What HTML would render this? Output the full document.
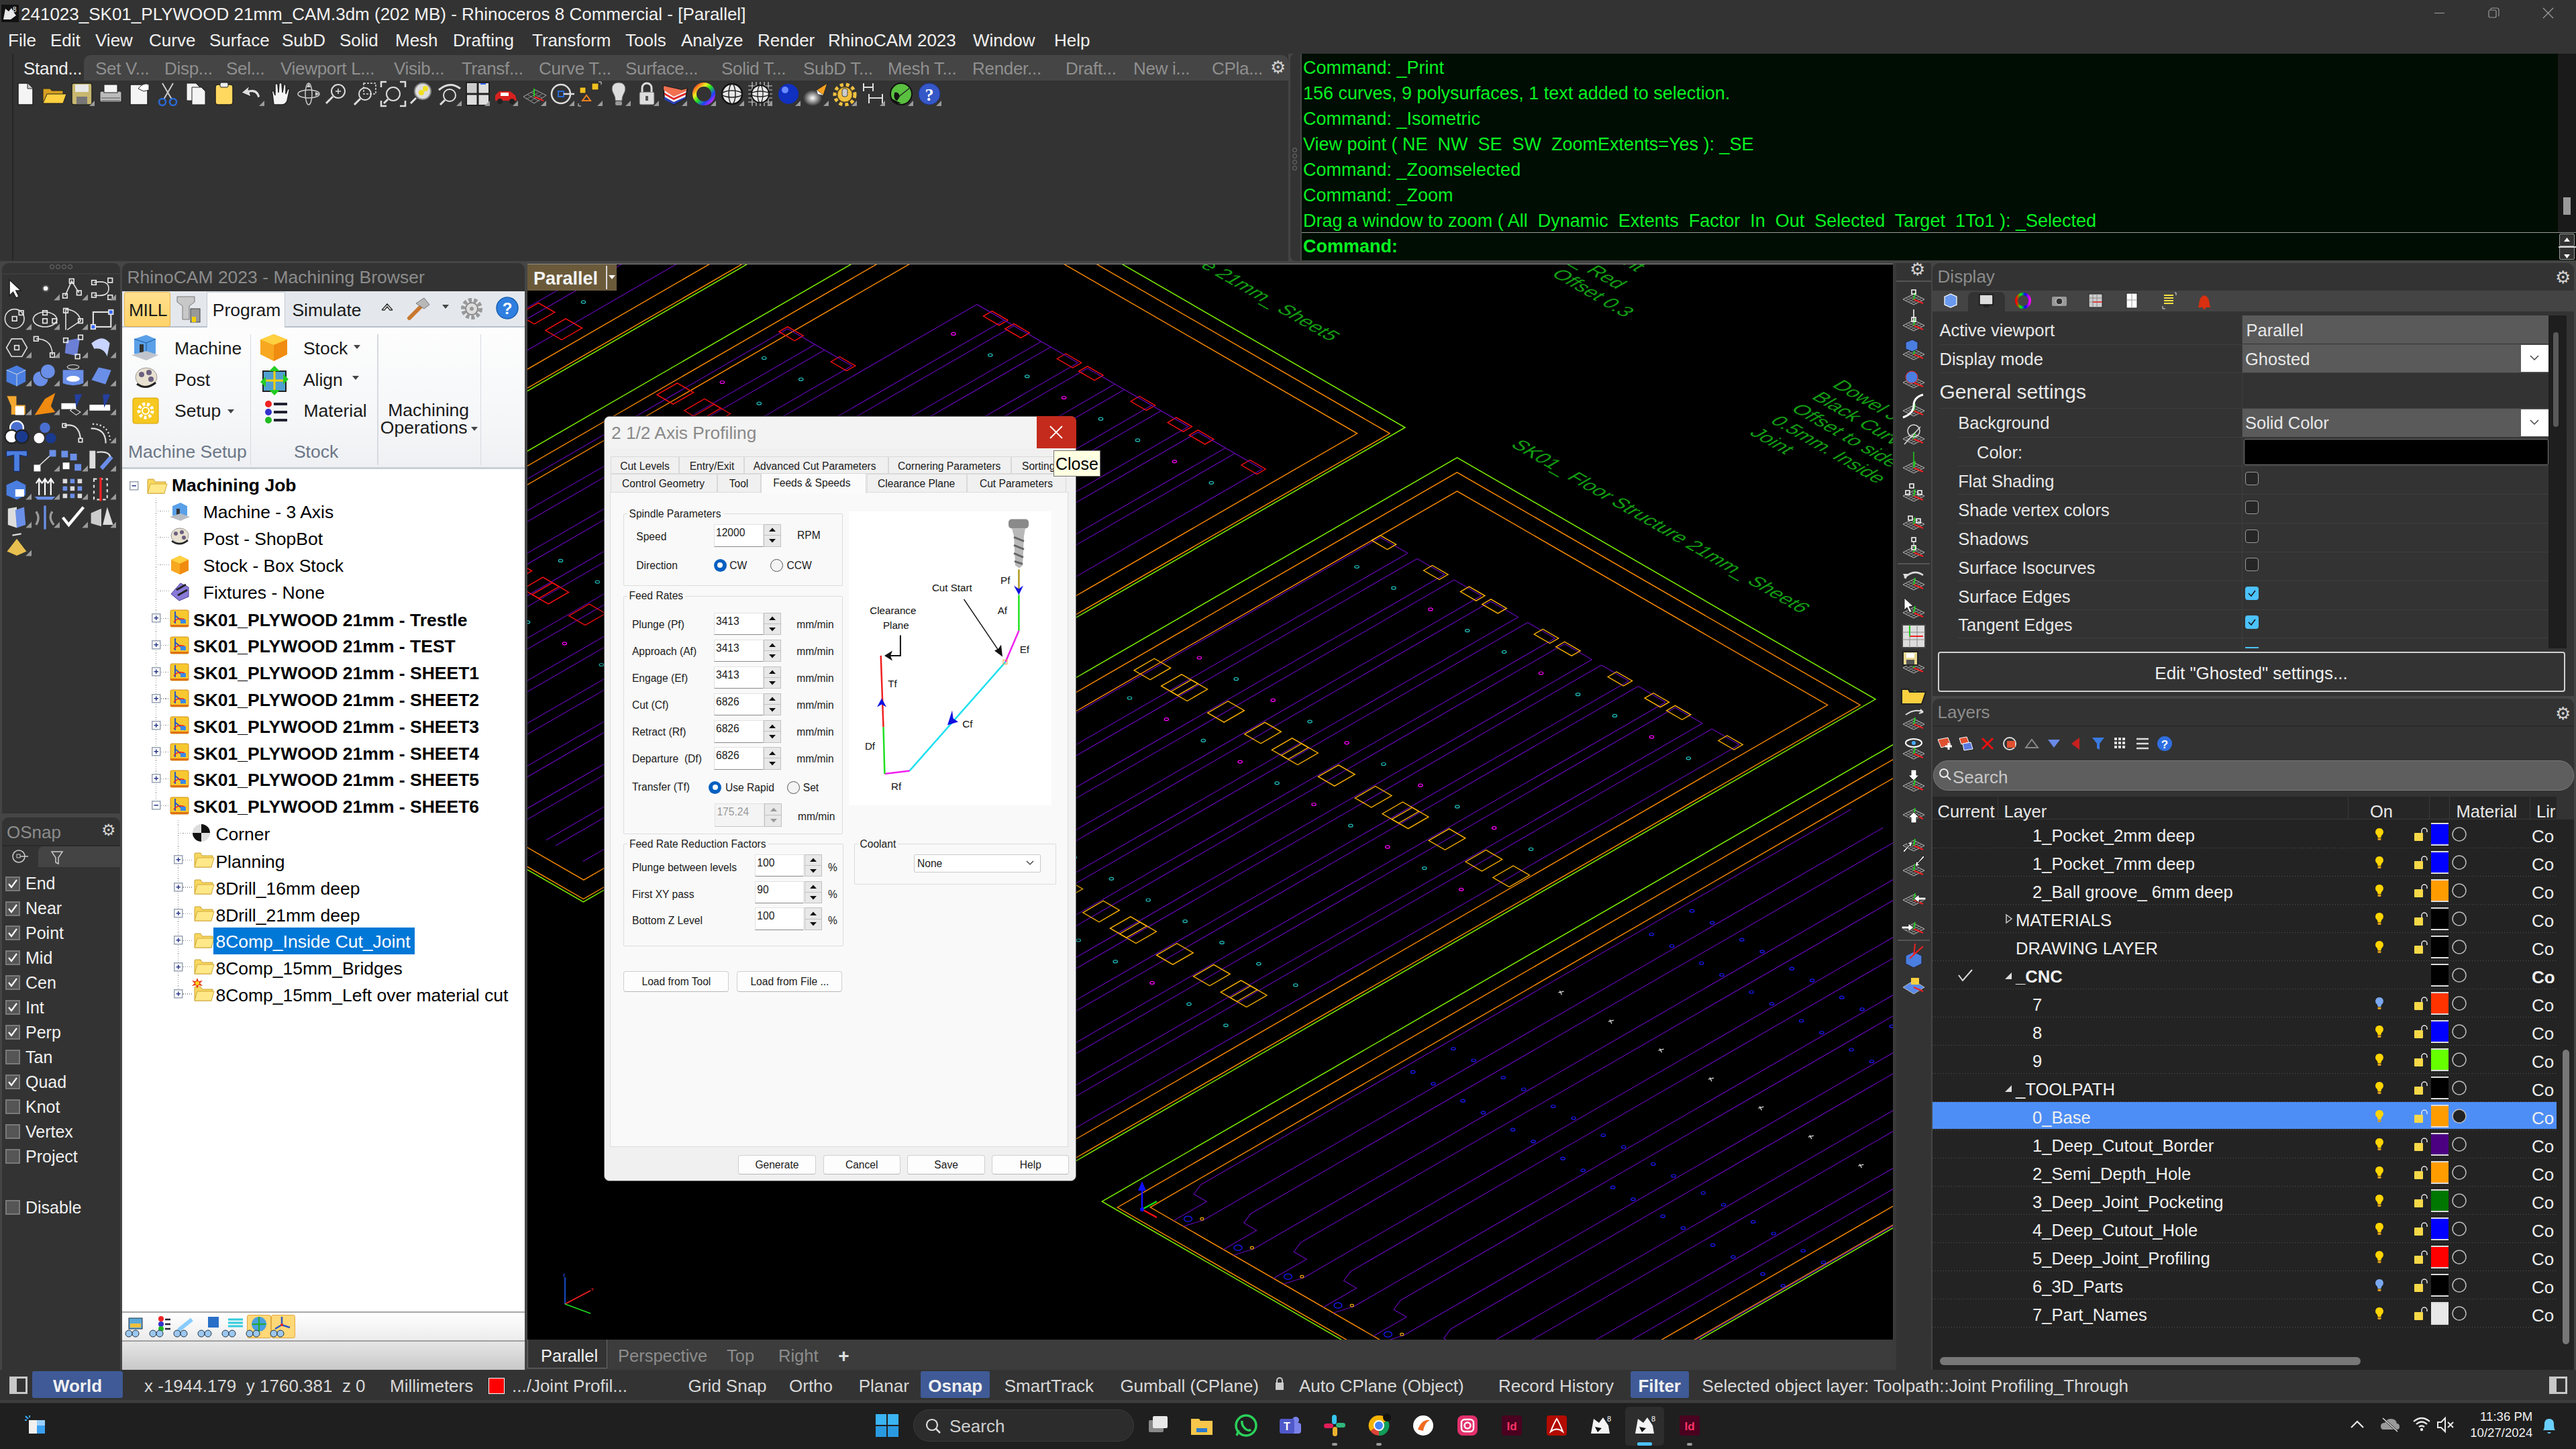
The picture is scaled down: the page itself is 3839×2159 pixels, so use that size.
<!DOCTYPE html><html><head><meta charset="utf-8"><style>
html,body{margin:0;padding:0;width:3839px;height:2159px;overflow:hidden;background:#454545;font-family:"Liberation Sans",sans-serif}
body>div,body>svg{position:absolute;white-space:pre;box-sizing:border-box}
#dlg div,#dlg svg{position:absolute;white-space:pre;box-sizing:border-box}
.grp div,.grp svg{position:absolute;white-space:pre;box-sizing:border-box}
</style></head><body>
<div style="left:0.0px;top:0.0px;width:3839.0px;height:80.0px;background:#333333;"></div>
<svg style="position:absolute;left:2.0px;top:7.0px;" width="26" height="26" viewBox="0 0 26 26"><rect x="0" y="0" width="26" height="26" fill="#111"/><path d="M3 22 L6 6 L11 10 L15 5 L19 12 L22 16 L14 22 Z" fill="#e8e8e8"/><text x="17" y="11" font-size="10" fill="#fff" font-family="Liberation Sans">8</text></svg>
<div style="left:31.0px;top:7.9px;font:normal 26px/1 'Liberation Sans',sans-serif;color:#f2f2f2;">241023_SK01_PLYWOOD 21mm_CAM.3dm (202 MB) - Rhinoceros 8 Commercial - [Parallel]</div>
<div style="left:3628.0px;top:19.0px;width:15.0px;height:1.2px;background:#a0a0a0;"></div>
<svg style="position:absolute;left:3707.0px;top:10.0px;" width="20" height="20" viewBox="0 0 20 20"><rect x="2" y="5" width="11" height="11" rx="2" fill="none" stroke="#9a9a9a" stroke-width="1.2"/><path d="M5 5 L5 4 Q5 2 7 2 L14 2 Q17 2 17 5 L17 12 Q17 14 16 14" fill="none" stroke="#9a9a9a" stroke-width="1.2"/></svg>
<svg style="position:absolute;left:3788.0px;top:10.0px;" width="20" height="20" viewBox="0 0 20 20"><path d="M2 2 L17 17 M17 2 L2 17" stroke="#a0a0a0" stroke-width="1.2"/></svg>
<div style="left:12.0px;top:47.4px;font:normal 26px/1 'Liberation Sans',sans-serif;color:#f0f0f0;">File</div>
<div style="left:75.0px;top:47.4px;font:normal 26px/1 'Liberation Sans',sans-serif;color:#f0f0f0;">Edit</div>
<div style="left:142.0px;top:47.4px;font:normal 26px/1 'Liberation Sans',sans-serif;color:#f0f0f0;">View</div>
<div style="left:222.0px;top:47.4px;font:normal 26px/1 'Liberation Sans',sans-serif;color:#f0f0f0;">Curve</div>
<div style="left:312.0px;top:47.4px;font:normal 26px/1 'Liberation Sans',sans-serif;color:#f0f0f0;">Surface</div>
<div style="left:420.0px;top:47.4px;font:normal 26px/1 'Liberation Sans',sans-serif;color:#f0f0f0;">SubD</div>
<div style="left:506.0px;top:47.4px;font:normal 26px/1 'Liberation Sans',sans-serif;color:#f0f0f0;">Solid</div>
<div style="left:589.0px;top:47.4px;font:normal 26px/1 'Liberation Sans',sans-serif;color:#f0f0f0;">Mesh</div>
<div style="left:675.0px;top:47.4px;font:normal 26px/1 'Liberation Sans',sans-serif;color:#f0f0f0;">Drafting</div>
<div style="left:793.0px;top:47.4px;font:normal 26px/1 'Liberation Sans',sans-serif;color:#f0f0f0;">Transform</div>
<div style="left:932.0px;top:47.4px;font:normal 26px/1 'Liberation Sans',sans-serif;color:#f0f0f0;">Tools</div>
<div style="left:1015.0px;top:47.4px;font:normal 26px/1 'Liberation Sans',sans-serif;color:#f0f0f0;">Analyze</div>
<div style="left:1129.0px;top:47.4px;font:normal 26px/1 'Liberation Sans',sans-serif;color:#f0f0f0;">Render</div>
<div style="left:1234.0px;top:47.4px;font:normal 26px/1 'Liberation Sans',sans-serif;color:#f0f0f0;">RhinoCAM 2023</div>
<div style="left:1450.0px;top:47.4px;font:normal 26px/1 'Liberation Sans',sans-serif;color:#f0f0f0;">Window</div>
<div style="left:1571.0px;top:47.4px;font:normal 26px/1 'Liberation Sans',sans-serif;color:#f0f0f0;">Help</div>
<div style="left:0.0px;top:80.0px;width:1920.0px;height:308.6px;background:#333333;"></div>
<div style="left:125.0px;top:82.0px;width:1795.0px;height:38.0px;background:#454545;border-radius:10px 10px 0 0"></div>
<div style="left:3.0px;top:80.0px;width:122.0px;height:40.0px;background:#333333;border-radius:10px 10px 0 0"></div>
<div style="left:18.0px;top:80.0px;width:1.5px;height:308.0px;background:#262626;"></div>
<div style="left:35.0px;top:89.4px;font:normal 26px/1 'Liberation Sans',sans-serif;color:#f0f0f0;letter-spacing:-0.3px">Stand...</div>
<div style="left:142.0px;top:89.4px;font:normal 26px/1 'Liberation Sans',sans-serif;color:#8f8f8f;letter-spacing:-0.3px">Set V...</div>
<div style="left:245.0px;top:89.4px;font:normal 26px/1 'Liberation Sans',sans-serif;color:#8f8f8f;letter-spacing:-0.3px">Disp...</div>
<div style="left:337.0px;top:89.4px;font:normal 26px/1 'Liberation Sans',sans-serif;color:#8f8f8f;letter-spacing:-0.3px">Sel...</div>
<div style="left:418.0px;top:89.4px;font:normal 26px/1 'Liberation Sans',sans-serif;color:#8f8f8f;letter-spacing:-0.3px">Viewport L...</div>
<div style="left:587.0px;top:89.4px;font:normal 26px/1 'Liberation Sans',sans-serif;color:#8f8f8f;letter-spacing:-0.3px">Visib...</div>
<div style="left:688.0px;top:89.4px;font:normal 26px/1 'Liberation Sans',sans-serif;color:#8f8f8f;letter-spacing:-0.3px">Transf...</div>
<div style="left:803.0px;top:89.4px;font:normal 26px/1 'Liberation Sans',sans-serif;color:#8f8f8f;letter-spacing:-0.3px">Curve T...</div>
<div style="left:932.0px;top:89.4px;font:normal 26px/1 'Liberation Sans',sans-serif;color:#8f8f8f;letter-spacing:-0.3px">Surface...</div>
<div style="left:1075.0px;top:89.4px;font:normal 26px/1 'Liberation Sans',sans-serif;color:#8f8f8f;letter-spacing:-0.3px">Solid T...</div>
<div style="left:1197.0px;top:89.4px;font:normal 26px/1 'Liberation Sans',sans-serif;color:#8f8f8f;letter-spacing:-0.3px">SubD T...</div>
<div style="left:1323.0px;top:89.4px;font:normal 26px/1 'Liberation Sans',sans-serif;color:#8f8f8f;letter-spacing:-0.3px">Mesh T...</div>
<div style="left:1449.0px;top:89.4px;font:normal 26px/1 'Liberation Sans',sans-serif;color:#8f8f8f;letter-spacing:-0.3px">Render...</div>
<div style="left:1588.0px;top:89.4px;font:normal 26px/1 'Liberation Sans',sans-serif;color:#8f8f8f;letter-spacing:-0.3px">Draft...</div>
<div style="left:1689.0px;top:89.4px;font:normal 26px/1 'Liberation Sans',sans-serif;color:#8f8f8f;letter-spacing:-0.3px">New i...</div>
<div style="left:1806.0px;top:89.4px;font:normal 26px/1 'Liberation Sans',sans-serif;color:#8f8f8f;letter-spacing:-0.3px">CPla...</div>
<div style="left:1893px;top:87px;font:26px/1 'Liberation Sans';color:#cfcfcf">&#9881;</div>
<div style="left:1923.0px;top:80.0px;width:14.8px;height:308.6px;background:#333333;border-radius:8px 0 0 8px"></div>
<div style="left:1926px;top:220px;width:7px;height:7px;border:1.5px solid #777;border-radius:50%"></div>
<div style="left:1926px;top:229px;width:7px;height:7px;border:1.5px solid #777;border-radius:50%"></div>
<div style="left:1926px;top:238px;width:7px;height:7px;border:1.5px solid #777;border-radius:50%"></div>
<div style="left:1926px;top:247px;width:7px;height:7px;border:1.5px solid #777;border-radius:50%"></div>
<div style="left:1940.0px;top:80.0px;width:1899.0px;height:308.0px;background:#000d02;"></div>
<div style="left:1942.0px;top:87.5px;font:normal 27px/1 'Liberation Sans',sans-serif;color:#08f222;">Command: _Print</div>
<div style="left:1942.0px;top:125.5px;font:normal 27px/1 'Liberation Sans',sans-serif;color:#08f222;">156 curves, 9 polysurfaces, 1 text added to selection.</div>
<div style="left:1942.0px;top:163.6px;font:normal 27px/1 'Liberation Sans',sans-serif;color:#08f222;">Command: _Isometric</div>
<div style="left:1942.0px;top:201.6px;font:normal 27px/1 'Liberation Sans',sans-serif;color:#08f222;">View point ( NE  NW  SE  SW  ZoomExtents=Yes ): _SE</div>
<div style="left:1942.0px;top:239.6px;font:normal 27px/1 'Liberation Sans',sans-serif;color:#08f222;">Command: _Zoomselected</div>
<div style="left:1942.0px;top:277.6px;font:normal 27px/1 'Liberation Sans',sans-serif;color:#08f222;">Command: _Zoom</div>
<div style="left:1942.0px;top:315.6px;font:normal 27px/1 'Liberation Sans',sans-serif;color:#08f222;">Drag a window to zoom ( All  Dynamic  Extents  Factor  In  Out  Selected  Target  1To1 ): _Selected</div>
<div style="left:1940.0px;top:346.0px;width:1899.0px;height:1.3px;background:#9a9a9a;"></div>
<div style="left:1942.0px;top:354.1px;font:bold 27px/1 'Liberation Sans',sans-serif;color:#08f222;">Command:</div>
<div style="left:3812.0px;top:80.0px;width:27.0px;height:266.0px;background:#1a1a1a;"></div>
<div style="left:3820.0px;top:294.0px;width:11.0px;height:26.0px;background:#9a9a9a;"></div>
<div style="left:3814px;top:348px;width:23px;height:19px;background:#333;border:1.2px solid #999;border-radius:2px"></div>
<div style="left:3814px;top:368px;width:23px;height:19px;background:#333;border:1.2px solid #999;border-radius:2px"></div>
<div style="left:3813.0px;top:367.0px;width:26.0px;height:1.5px;background:#ddd;"></div>
<svg style="position:absolute;left:3814.0px;top:348.0px;" width="23" height="40" viewBox="0 0 23 40"><path d="M7 14 L11.5 8 L16 14 Z M7 33 L11.5 39 L16 33 Z" fill="#fff" transform="translate(0,-2)"/></svg>
<svg style="position:absolute;left:19.3px;top:120.0px;" width="40" height="40" viewBox="0 0 40 40"><path d="M8 4 L22 4 L30 12 L30 36 L8 36 Z" fill="#f4f4f4" stroke="#222" stroke-width="1.5"/><path d="M22 4 L22 12 L30 12" fill="#ccc" stroke="#222"/></svg>
<svg style="position:absolute;left:61.3px;top:120.0px;" width="40" height="40" viewBox="0 0 40 40"><path d="M3 12 L14 12 L16 15 L33 15 L33 34 L3 34 Z" fill="#d8a020" stroke="#222"/><path d="M3 34 L9 20 L38 20 L33 34Z" fill="#ffd040" stroke="#222"/></svg>
<svg style="position:absolute;left:103.4px;top:120.0px;" width="40" height="40" viewBox="0 0 40 40"><rect x="4" y="4" width="30" height="32" rx="3" fill="#c8b870" stroke="#222" stroke-width="1.5"/><rect x="9" y="6" width="20" height="11" fill="#e8e8e8"/><rect x="11" y="24" width="16" height="11" fill="#777"/><path d="M38 38 L38 30 L30 38 Z" fill="#9a9a9a"/></svg>
<svg style="position:absolute;left:145.4px;top:120.0px;" width="40" height="40" viewBox="0 0 40 40"><rect x="4" y="16" width="32" height="16" rx="2" fill="#bbb" stroke="#222"/><rect x="10" y="6" width="20" height="12" fill="#f4f4f4" stroke="#222"/><path d="M6 26 L34 26 M6 30 L34 30" stroke="#555"/></svg>
<svg style="position:absolute;left:187.5px;top:120.0px;" width="40" height="40" viewBox="0 0 40 40"><path d="M6 6 L24 6 L32 14 L32 36 L6 36Z" fill="#f4f4f4" stroke="#222" stroke-width="1.5"/><path d="M18 12 Q26 2 34 6 L34 14 L26 16Z" fill="#fff" stroke="#222"/></svg>
<svg style="position:absolute;left:229.6px;top:120.0px;" width="40" height="40" viewBox="0 0 40 40"><path d="M12 4 L26 28 M28 4 L14 28" stroke="#ccc" stroke-width="2"/><circle cx="12" cy="32" r="5" fill="none" stroke="#2a6ad8" stroke-width="2.5"/><circle cx="28" cy="32" r="5" fill="none" stroke="#2a6ad8" stroke-width="2.5"/></svg>
<svg style="position:absolute;left:271.6px;top:120.0px;" width="40" height="40" viewBox="0 0 40 40"><path d="M6 4 L20 4 L26 10 L26 30 L6 30Z" fill="#f4f4f4" stroke="#222"/><path d="M14 10 L28 10 L34 16 L34 36 L14 36Z" fill="#f4f4f4" stroke="#222"/></svg>
<svg style="position:absolute;left:313.6px;top:120.0px;" width="40" height="40" viewBox="0 0 40 40"><rect x="7" y="6" width="26" height="30" rx="4" fill="#ffd860" stroke="#222" stroke-width="1.5"/><rect x="14" y="3" width="12" height="7" rx="2" fill="#eee" stroke="#222"/></svg>
<svg style="position:absolute;left:355.7px;top:120.0px;" width="40" height="40" viewBox="0 0 40 40"><path d="M32 24 Q28 10 14 14 L16 8 L4 18 L18 24 L16 18 Q26 16 28 26Z" fill="#ddd" stroke="#222"/><path d="M38 38 L38 30 L30 38 Z" fill="#9a9a9a"/></svg>
<svg style="position:absolute;left:397.8px;top:120.0px;" width="40" height="40" viewBox="0 0 40 40"><path d="M10 36 L8 20 Q6 14 10 16 L12 22 L12 6 Q14 3 16 6 L17 18 L18 4 Q21 2 22 5 L23 18 L25 6 Q28 5 28 8 L28 20 L31 12 Q34 12 33 16 L30 30 Q28 36 22 36Z" fill="#f4f4f4" stroke="#222" stroke-width="1.5"/></svg>
<svg style="position:absolute;left:439.8px;top:120.0px;" width="40" height="40" viewBox="0 0 40 40"><ellipse cx="20" cy="20" rx="16" ry="6" fill="none" stroke="#ccc" stroke-width="1.5"/><ellipse cx="20" cy="20" rx="5" ry="16" fill="none" stroke="#ccc" stroke-width="1.5"/><path d="M20 4 L17 10 L23 10Z M36 20 L30 17 L30 23Z" fill="#ccc"/></svg>
<svg style="position:absolute;left:481.8px;top:120.0px;" width="40" height="40" viewBox="0 0 40 40"><circle cx="22" cy="16" r="10" fill="none" stroke="#ddd" stroke-width="2"/><path d="M14 24 L4 34" stroke="#ddd" stroke-width="3"/><path d="M18 16 L26 16 M22 12 L22 20" stroke="#ddd" stroke-width="1.5"/></svg>
<svg style="position:absolute;left:523.9px;top:120.0px;" width="40" height="40" viewBox="0 0 40 40"><circle cx="20" cy="20" r="9" fill="none" stroke="#ddd" stroke-width="2"/><path d="M13 27 L4 36" stroke="#ddd" stroke-width="3"/><rect x="18" y="4" width="18" height="16" fill="none" stroke="#ddd" stroke-width="1.5" stroke-dasharray="3 2"/></svg>
<svg style="position:absolute;left:565.9px;top:120.0px;" width="40" height="40" viewBox="0 0 40 40"><circle cx="20" cy="20" r="10" fill="none" stroke="#ddd" stroke-width="2"/><path d="M12 28 L6 34" stroke="#ddd" stroke-width="3"/><path d="M2 10 L2 2 L10 2 M30 2 L38 2 L38 10 M2 30 L2 38 L10 38 M38 30 L38 38 L30 38" fill="none" stroke="#ddd" stroke-width="2.5"/></svg>
<svg style="position:absolute;left:608.0px;top:120.0px;" width="40" height="40" viewBox="0 0 40 40"><circle cx="22" cy="16" r="12" fill="#ddd" stroke="#888" stroke-width="2"/><circle cx="20" cy="18" r="4" fill="#f0e020"/><circle cx="26" cy="12" r="4" fill="#f0e020"/><path d="M12 26 L4 34" stroke="#ddd" stroke-width="3"/></svg>
<svg style="position:absolute;left:650.0px;top:120.0px;" width="40" height="40" viewBox="0 0 40 40"><circle cx="20" cy="22" r="9" fill="none" stroke="#ddd" stroke-width="2"/><path d="M13 29 L6 36" stroke="#ddd" stroke-width="3"/><path d="M4 14 Q20 0 36 12" fill="none" stroke="#ddd" stroke-width="3"/><path d="M38 38 L38 30 L30 38 Z" fill="#9a9a9a"/></svg>
<svg style="position:absolute;left:692.1px;top:120.0px;" width="40" height="40" viewBox="0 0 40 40"><rect x="3" y="3" width="34" height="34" fill="#ddd" stroke="#222" stroke-width="2"/><path d="M20 3 L20 37 M3 20 L37 20" stroke="#222" stroke-width="3"/><rect x="5" y="5" width="13" height="13" fill="#ccc"/><path d="M24 5 L32 5" stroke="#36f" stroke-width="2"/><path d="M38 38 L38 30 L30 38 Z" fill="#9a9a9a"/></svg>
<svg style="position:absolute;left:734.1px;top:120.0px;" width="40" height="40" viewBox="0 0 40 40"><path d="M4 30 L4 22 L10 16 L26 16 L34 22 L36 30Z" fill="#d82020"/><circle cx="11" cy="31" r="4" fill="#222"/><circle cx="29" cy="31" r="4" fill="#222"/><rect x="12" y="18" width="12" height="5" fill="#fff"/><path d="M38 38 L38 30 L30 38 Z" fill="#9a9a9a"/></svg>
<svg style="position:absolute;left:776.2px;top:120.0px;" width="40" height="40" viewBox="0 0 40 40"><path d="M4 24 L22 14 L38 22 L20 34Z" fill="none" stroke="#aaa"/><path d="M10 21 L28 31 M16 18 L32 26 M8 28 L26 18 M14 31 L32 20" stroke="#888"/><path d="M20 24 L34 30" stroke="#e22" stroke-width="2"/><path d="M20 24 L20 12" stroke="#2c2" stroke-width="2"/><path d="M38 38 L38 30 L30 38 Z" fill="#9a9a9a"/></svg>
<svg style="position:absolute;left:818.2px;top:120.0px;" width="40" height="40" viewBox="0 0 40 40"><circle cx="18" cy="20" r="14" fill="none" stroke="#ddd" stroke-width="2.5"/><rect x="14" y="16" width="8" height="8" fill="none" stroke="#2a6ad8" stroke-width="2"/><path d="M22 20 L38 20" stroke="#ddd" stroke-width="2.5"/><path d="M38 38 L38 30 L30 38 Z" fill="#9a9a9a"/></svg>
<svg style="position:absolute;left:860.3px;top:120.0px;" width="40" height="40" viewBox="0 0 40 40"><rect x="4" y="10" width="9" height="9" fill="#f0c020" stroke="#222"/><rect x="22" y="4" width="10" height="10" fill="#f0c020" stroke="#222"/><path d="M8 30 L14 22 L20 30Z" fill="none" stroke="#f08020" stroke-width="2"/><path d="M32 2 L36 2 L36 6 M2 34 L2 38 L6 38" stroke="#ddd" fill="none"/><path d="M38 38 L38 30 L30 38 Z" fill="#9a9a9a"/></svg>
<svg style="position:absolute;left:902.3px;top:120.0px;" width="40" height="40" viewBox="0 0 40 40"><path d="M20 3 C10 3 8 12 12 19 C14 23 15 25 15 30 L25 30 C25 25 26 23 28 19 C32 12 30 3 20 3Z" fill="#ddd" stroke="#666"/><rect x="15" y="31" width="10" height="6" rx="2" fill="#999"/><path d="M38 38 L38 30 L30 38 Z" fill="#9a9a9a"/></svg>
<svg style="position:absolute;left:944.4px;top:120.0px;" width="40" height="40" viewBox="0 0 40 40"><rect x="9" y="17" width="22" height="19" rx="2" fill="#ddd" stroke="#555"/><path d="M13 17 L13 11 A7 7 0 0 1 27 11 L27 17" fill="none" stroke="#ddd" stroke-width="3"/><rect x="18" y="23" width="4" height="7" fill="#555"/><path d="M38 38 L38 30 L30 38 Z" fill="#9a9a9a"/></svg>
<svg style="position:absolute;left:986.4px;top:120.0px;" width="40" height="40" viewBox="0 0 40 40"><path d="M3 8 L30 14 L38 12 L36 26 L18 36 L4 26 Z" fill="#f4f4f4" stroke="#111" stroke-width="1.5"/><path d="M3 8 L30 14 L38 12 L36 16 L18 24 L3 14Z" fill="#f07050"/><path d="M4 18 L18 26 L36 18 L36 21 L18 29 L4 21Z" fill="#e02020"/><path d="M4 24 L18 32 L36 24 L36 26 L18 36 L4 28Z" fill="#2a40b0"/><path d="M38 38 L38 30 L30 38 Z" fill="#9a9a9a"/></svg>
<svg style="position:absolute;left:1028.5px;top:120.0px;" width="40" height="40" viewBox="0 0 40 40"><circle cx="20" cy="20" r="14" fill="none" stroke="url(#cw1)" stroke-width="6"/><defs><linearGradient id="cw1" x1="0" y1="0" x2="1" y2="1"><stop offset="0" stop-color="#ff2020"/><stop offset="0.3" stop-color="#f0f020"/><stop offset="0.5" stop-color="#20e020"/><stop offset="0.75" stop-color="#2040ff"/><stop offset="1" stop-color="#ff20ff"/></linearGradient></defs><path d="M38 38 L38 30 L30 38 Z" fill="#9a9a9a"/></svg>
<svg style="position:absolute;left:1070.5px;top:120.0px;" width="40" height="40" viewBox="0 0 40 40"><circle cx="20" cy="20" r="15" fill="#e8e8e8" stroke="#111" stroke-width="2.5"/><ellipse cx="20" cy="20" rx="15" ry="5" fill="none" stroke="#222" stroke-width="1.5"/><ellipse cx="20" cy="20" rx="5" ry="15" fill="none" stroke="#222" stroke-width="1.5"/><path d="M38 38 L38 30 L30 38 Z" fill="#9a9a9a"/></svg>
<svg style="position:absolute;left:1112.6px;top:120.0px;" width="40" height="40" viewBox="0 0 40 40"><path d="M2 8 L38 8 M2 14 L38 14 M2 20 L38 20 M2 26 L38 26 M2 32 L38 32 M8 2 L8 38 M14 2 L14 38 M20 2 L20 38 M26 2 L26 38 M32 2 L32 38" stroke="#cfcfcf" stroke-width="1.2"/><circle cx="20" cy="20" r="13" fill="#e8e8e8" stroke="#111" stroke-width="2"/><ellipse cx="20" cy="20" rx="13" ry="4" fill="none" stroke="#222" stroke-width="1.3"/><ellipse cx="20" cy="20" rx="4" ry="13" fill="none" stroke="#222" stroke-width="1.3"/><path d="M38 38 L38 30 L30 38 Z" fill="#9a9a9a"/></svg>
<svg style="position:absolute;left:1154.6px;top:120.0px;" width="40" height="40" viewBox="0 0 40 40"><circle cx="20" cy="20" r="15" fill="#1030c0"/><circle cx="15" cy="14" r="5" fill="#6a8aff"/><path d="M38 38 L38 30 L30 38 Z" fill="#9a9a9a"/></svg>
<svg style="position:absolute;left:1196.7px;top:120.0px;" width="40" height="40" viewBox="0 0 40 40"><defs><radialGradient id="lg1"><stop offset="0" stop-color="#fff"/><stop offset="1" stop-color="#fff" stop-opacity="0"/></radialGradient></defs><ellipse cx="14" cy="26" rx="14" ry="12" fill="url(#lg1)"/><path d="M20 14 L36 4 L30 22Z" fill="#f8a020" stroke="#222"/><path d="M20 14 L30 22 L22 20Z" fill="#fff"/><path d="M38 38 L38 30 L30 38 Z" fill="#9a9a9a"/></svg>
<svg style="position:absolute;left:1238.7px;top:120.0px;" width="40" height="40" viewBox="0 0 40 40"><circle cx="20" cy="21" r="15" fill="none" stroke="#f0c040" stroke-width="5" stroke-dasharray="5 4"/><circle cx="20" cy="21" r="11" fill="#f0c040" stroke="#7a5a10" stroke-width="1"/><rect x="16" y="12" width="8" height="12" rx="3" fill="#ccc" stroke="#444"/><path d="M38 38 L38 30 L30 38 Z" fill="#9a9a9a"/></svg>
<svg style="position:absolute;left:1280.8px;top:120.0px;" width="40" height="40" viewBox="0 0 40 40"><path d="M6 4 L6 16 M6 10 L20 10 M20 4 L20 16 M14 20 L14 34 M14 26 L34 26 M34 20 L34 34" stroke="#ddd" stroke-width="2"/><path d="M38 38 L38 30 L30 38 Z" fill="#9a9a9a"/></svg>
<svg style="position:absolute;left:1322.8px;top:120.0px;" width="40" height="40" viewBox="0 0 40 40"><circle cx="20" cy="20" r="16" fill="#5ac040" stroke="#111" stroke-width="2"/><path d="M4 26 Q12 30 20 34 L10 34 Q4 30 4 26Z M10 18 Q16 16 18 24 L14 30 Q8 28 10 18Z" fill="#111"/><path d="M14 26 L34 10" stroke="#222" stroke-width="1.5"/><path d="M38 38 L38 30 L30 38 Z" fill="#9a9a9a"/></svg>
<svg style="position:absolute;left:1364.9px;top:120.0px;" width="40" height="40" viewBox="0 0 40 40"><circle cx="20" cy="20" r="16" fill="#3558c8" stroke="#22348a"/><text x="20" y="30" font-size="26" font-weight="bold" font-family="Liberation Serif" fill="#fff" text-anchor="middle">?</text><path d="M38 38 L38 30 L30 38 Z" fill="#9a9a9a"/></svg>
<div style="left:3.0px;top:392.0px;width:176.0px;height:820.0px;background:#333333;border-radius:10px 10px 0 0"></div>
<div style="left:3.0px;top:407.0px;width:176.0px;height:2.0px;background:#3d3d3d;"></div>
<div style="left:74px;top:394px;width:7px;height:7px;border:1.5px solid #777;border-radius:50%"></div>
<div style="left:83px;top:394px;width:7px;height:7px;border:1.5px solid #777;border-radius:50%"></div>
<div style="left:92px;top:394px;width:7px;height:7px;border:1.5px solid #777;border-radius:50%"></div>
<div style="left:101px;top:394px;width:7px;height:7px;border:1.5px solid #777;border-radius:50%"></div>
<svg style="position:absolute;left:3.0px;top:410.0px" width="44" height="44" viewBox="0 0 40 40"><path d="M10 6 L10 28 L15 23 L19 31 L23 29 L19 21 L26 21 Z" fill="#fff" stroke="#222" stroke-width="1.5"/></svg>
<svg style="position:absolute;left:45.0px;top:410.0px" width="44" height="44" viewBox="0 0 40 40"><circle cx="21" cy="18" r="4" fill="#fff" stroke="#555" stroke-width="2"/><path d="M40 34 L40 26 L32 34 Z" fill="#9a9a9a"/></svg>
<svg style="position:absolute;left:87.0px;top:410.0px" width="44" height="44" viewBox="0 0 40 40"><path d="M9 28 L18 8 L28 24" fill="none" stroke="#ddd" stroke-width="1.5"/><rect x="6.0" y="25.0" width="6" height="6" fill="none" stroke="#e8e8e8" stroke-width="1.5"/><rect x="15.0" y="5.0" width="6" height="6" fill="none" stroke="#e8e8e8" stroke-width="1.5"/><rect x="25.0" y="21.0" width="6" height="6" fill="none" stroke="#e8e8e8" stroke-width="1.5"/><path d="M40 34 L40 26 L32 34 Z" fill="#9a9a9a"/></svg>
<svg style="position:absolute;left:129.0px;top:410.0px" width="44" height="44" viewBox="0 0 40 40"><path d="M10 10 Q30 6 30 18 Q30 30 10 27" fill="none" stroke="#ddd" stroke-width="1.5"/><rect x="7.0" y="7.0" width="6" height="6" fill="none" stroke="#e8e8e8" stroke-width="1.5"/><rect x="7.0" y="24.0" width="6" height="6" fill="none" stroke="#e8e8e8" stroke-width="1.5"/><rect x="29.0" y="4.0" width="6" height="6" fill="none" stroke="#e8e8e8" stroke-width="1.5"/><rect x="29.0" y="27.0" width="6" height="6" fill="none" stroke="#e8e8e8" stroke-width="1.5"/><path d="M40 34 L40 26 L32 34 Z" fill="#9a9a9a"/></svg>
<svg style="position:absolute;left:3.0px;top:453.5px" width="44" height="44" viewBox="0 0 40 40"><circle cx="17" cy="19" r="13" fill="none" stroke="#ddd" stroke-width="1.5"/><rect x="14.0" y="16.0" width="6" height="6" fill="none" stroke="#e8e8e8" stroke-width="1.5"/><rect x="23.0" y="8.0" width="6" height="6" fill="none" stroke="#e8e8e8" stroke-width="1.5"/><path d="M40 34 L40 26 L32 34 Z" fill="#9a9a9a"/></svg>
<svg style="position:absolute;left:45.0px;top:453.5px" width="44" height="44" viewBox="0 0 40 40"><ellipse cx="20" cy="20" rx="16" ry="10" fill="none" stroke="#ddd" stroke-width="1.5"/><rect x="17.0" y="8.0" width="6" height="6" fill="none" stroke="#e8e8e8" stroke-width="1.5"/><rect x="17.0" y="19.0" width="6" height="6" fill="none" stroke="#e8e8e8" stroke-width="1.5"/><rect x="30.0" y="19.0" width="6" height="6" fill="none" stroke="#e8e8e8" stroke-width="1.5"/><path d="M40 34 L40 26 L32 34 Z" fill="#9a9a9a"/></svg>
<svg style="position:absolute;left:87.0px;top:453.5px" width="44" height="44" viewBox="0 0 40 40"><path d="M10 6 L10 34 M10 6 Q28 8 30 22 L12 34" fill="none" stroke="#ddd" stroke-width="1.5"/><rect x="7.0" y="5.0" width="6" height="6" fill="none" stroke="#e8e8e8" stroke-width="1.5"/><rect x="27.0" y="19.0" width="6" height="6" fill="none" stroke="#e8e8e8" stroke-width="1.5"/><path d="M40 34 L40 26 L32 34 Z" fill="#9a9a9a"/></svg>
<svg style="position:absolute;left:129.0px;top:453.5px" width="44" height="44" viewBox="0 0 40 40"><rect x="9" y="10" width="24" height="20" fill="none" stroke="#ddd" stroke-width="2"/><rect x="30.0" y="7.0" width="6" height="6" fill="#36f" stroke="#e8e8e8" stroke-width="1.5"/><rect x="6.0" y="27.0" width="6" height="6" fill="#36f" stroke="#e8e8e8" stroke-width="1.5"/><path d="M40 34 L40 26 L32 34 Z" fill="#9a9a9a"/></svg>
<svg style="position:absolute;left:3.0px;top:495.5px" width="44" height="44" viewBox="0 0 40 40"><path d="M6 20 L13 8 L27 8 L34 20 L27 32 L13 32 Z" fill="none" stroke="#ddd" stroke-width="1.5"/><rect x="17.0" y="17.0" width="6" height="6" fill="none" stroke="#e8e8e8" stroke-width="1.5"/><path d="M40 34 L40 26 L32 34 Z" fill="#9a9a9a"/></svg>
<svg style="position:absolute;left:45.0px;top:495.5px" width="44" height="44" viewBox="0 0 40 40"><path d="M8 8 Q30 8 30 30" fill="none" stroke="#ddd" stroke-width="1.5"/><rect x="5.0" y="5.0" width="6" height="6" fill="none" stroke="#e8e8e8" stroke-width="1.5"/><rect x="27.0" y="27.0" width="6" height="6" fill="none" stroke="#e8e8e8" stroke-width="1.5"/><path d="M40 34 L40 26 L32 34 Z" fill="#9a9a9a"/></svg>
<svg style="position:absolute;left:87.0px;top:495.5px" width="44" height="44" viewBox="0 0 40 40"><path d="M10 10 L30 6 L26 32 L8 28 Z" fill="#6b7fd6" stroke="#333" stroke-width="1.5"/><rect x="7.0" y="7.0" width="6" height="6" fill="none" stroke="#e8e8e8" stroke-width="1.5"/><rect x="27.0" y="3.0" width="6" height="6" fill="none" stroke="#e8e8e8" stroke-width="1.5"/><rect x="23.0" y="29.0" width="6" height="6" fill="none" stroke="#e8e8e8" stroke-width="1.5"/><path d="M40 34 L40 26 L32 34 Z" fill="#9a9a9a"/></svg>
<svg style="position:absolute;left:129.0px;top:495.5px" width="44" height="44" viewBox="0 0 40 40"><path d="M6 14 Q22 0 32 14 L28 34 Q24 20 10 22 Z" fill="#c8d4ff" stroke="#333"/><path d="M40 34 L40 26 L32 34 Z" fill="#9a9a9a"/></svg>
<svg style="position:absolute;left:3.0px;top:537.5px" width="44" height="44" viewBox="0 0 40 40"><path d="M6 12 L20 6 L32 12 L32 28 L20 34 L6 28 Z" fill="#4a7ee0"/><path d="M6 12 L20 18 L32 12 M20 18 L20 34" stroke="#bcd" fill="none"/><path d="M40 34 L40 26 L32 34 Z" fill="#9a9a9a"/></svg>
<svg style="position:absolute;left:45.0px;top:537.5px" width="44" height="44" viewBox="0 0 40 40"><circle cx="14" cy="24" r="10" fill="#6a8fe8"/><circle cx="24" cy="14" r="10" fill="#6a8fe8" stroke="#333"/><path d="M40 34 L40 26 L32 34 Z" fill="#9a9a9a"/></svg>
<svg style="position:absolute;left:87.0px;top:537.5px" width="44" height="44" viewBox="0 0 40 40"><path d="M6 12 L34 12 L34 30 Q20 36 6 30 Z" fill="#6a8fe8"/><ellipse cx="20" cy="24" rx="9" ry="4" fill="#fff"/><ellipse cx="20" cy="8" rx="8" ry="3" fill="none" stroke="#ddd"/><path d="M40 34 L40 26 L32 34 Z" fill="#9a9a9a"/></svg>
<svg style="position:absolute;left:129.0px;top:537.5px" width="44" height="44" viewBox="0 0 40 40"><path d="M6 26 L16 8 L34 12 L26 32 Z" fill="#6a8fe8" stroke="#333"/><path d="M40 34 L40 26 L32 34 Z" fill="#9a9a9a"/></svg>
<svg style="position:absolute;left:3.0px;top:581.0px" width="44" height="44" viewBox="0 0 40 40"><path d="M6 8 L20 8 L20 20 L32 20 L32 34 L12 34 L12 22 Z" fill="#f4a830" stroke="#333"/><path d="M18 22 L30 22 L30 34 L18 34Z" fill="#fff"/><path d="M40 34 L40 26 L32 34 Z" fill="#9a9a9a"/></svg>
<svg style="position:absolute;left:45.0px;top:581.0px" width="44" height="44" viewBox="0 0 40 40"><path d="M6 34 L20 12 L34 4 L28 22 L34 30 Z" fill="#f08a10"/><path d="M40 34 L40 26 L32 34 Z" fill="#9a9a9a"/></svg>
<svg style="position:absolute;left:87.0px;top:581.0px" width="44" height="44" viewBox="0 0 40 40"><rect x="4" y="18" width="20" height="8" fill="#fff"/><path d="M22 6 L32 6 L24 24 Z" fill="#2440a0"/><path d="M20 24 L30 30 L24 34 L16 28Z" fill="none" stroke="#ddd"/><path d="M40 34 L40 26 L32 34 Z" fill="#9a9a9a"/></svg>
<svg style="position:absolute;left:129.0px;top:581.0px" width="44" height="44" viewBox="0 0 40 40"><rect x="4" y="20" width="28" height="8" fill="#fff"/><path d="M22 6 L32 6 L24 24 Z" fill="#2440a0"/><path d="M40 34 L40 26 L32 34 Z" fill="#9a9a9a"/></svg>
<svg style="position:absolute;left:3.0px;top:623.0px" width="44" height="44" viewBox="0 0 40 40"><circle cx="20" cy="13" r="9" fill="#4a6fd0" stroke="#fff" stroke-width="2"/><circle cx="13" cy="25" r="9" fill="#fff" stroke="#222" stroke-width="2"/><circle cx="27" cy="25" r="9" fill="#1a3a90" stroke="#222" stroke-width="2"/></svg>
<svg style="position:absolute;left:45.0px;top:623.0px" width="44" height="44" viewBox="0 0 40 40"><circle cx="20" cy="13" r="7" fill="#4a6fd0"/><circle cx="12" cy="27" r="7" fill="#fff"/><circle cx="28" cy="27" r="7" fill="#1a3a90"/></svg>
<svg style="position:absolute;left:87.0px;top:623.0px" width="44" height="44" viewBox="0 0 40 40"><path d="M8 10 Q28 6 30 28" fill="none" stroke="#ddd" stroke-width="2"/><rect x="5.5" y="7.5" width="5" height="5" fill="none" stroke="#e8e8e8" stroke-width="1.5"/><rect x="27.5" y="27.5" width="5" height="5" fill="none" stroke="#e8e8e8" stroke-width="1.5"/></svg>
<svg style="position:absolute;left:129.0px;top:623.0px" width="44" height="44" viewBox="0 0 40 40"><path d="M8 8 Q30 8 32 30" fill="none" stroke="#ddd" stroke-width="2" stroke-dasharray="2 3"/><path d="M6 14 Q26 14 26 34" fill="none" stroke="#ddd" stroke-width="2"/><path d="M40 34 L40 26 L32 34 Z" fill="#9a9a9a"/></svg>
<svg style="position:absolute;left:3.0px;top:665.0px" width="44" height="44" viewBox="0 0 40 40"><path d="M6 6 L34 6 L34 14 L24 12 L24 34 L16 34 L16 12 L6 14 Z" fill="#4a7ee0" stroke="#1a2a60"/></svg>
<svg style="position:absolute;left:45.0px;top:665.0px" width="44" height="44" viewBox="0 0 40 40"><path d="M8 30 L32 8" stroke="#ddd" stroke-width="1.5"/><rect x="5" y="25" width="9" height="9" fill="#fff"/><rect x="26" y="5" width="9" height="9" fill="#6a8fe8"/><path d="M40 34 L40 26 L32 34 Z" fill="#9a9a9a"/></svg>
<svg style="position:absolute;left:87.0px;top:665.0px" width="44" height="44" viewBox="0 0 40 40"><rect x="4" y="6" width="9" height="9" fill="#6a8fe8"/><rect x="16" y="10" width="9" height="9" fill="#6a8fe8"/><rect x="6" y="22" width="9" height="9" fill="#fff"/><rect x="22" y="24" width="9" height="9" fill="#6a8fe8"/><path d="M40 34 L40 26 L32 34 Z" fill="#9a9a9a"/></svg>
<svg style="position:absolute;left:129.0px;top:665.0px" width="44" height="44" viewBox="0 0 40 40"><rect x="4" y="6" width="8" height="24" fill="#ddd"/><path d="M18 28 L32 12 L36 16 L22 32Z" fill="#6a8fe8"/><path d="M14 8 Q30 6 32 14" fill="none" stroke="#ddd" stroke-width="2"/><path d="M40 34 L40 26 L32 34 Z" fill="#9a9a9a"/></svg>
<svg style="position:absolute;left:3.0px;top:706.7px" width="44" height="44" viewBox="0 0 40 40"><path d="M6 14 L20 8 L32 14 L32 28 L20 34 L6 28 Z" fill="#4a7ee0"/><rect x="18" y="20" width="12" height="10" fill="#fff"/><path d="M40 34 L40 26 L32 34 Z" fill="#9a9a9a"/></svg>
<svg style="position:absolute;left:45.0px;top:706.7px" width="44" height="44" viewBox="0 0 40 40"><path d="M6 30 L34 30 L30 34 L10 34Z" fill="#6a8fe8"/><path d="M12 28 L12 8 M20 28 L20 8 M28 28 L28 8" stroke="#fff" stroke-width="2"/><path d="M8 12 L12 6 L16 12 M16 12 L20 6 L24 12 M24 12 L28 6 L32 12" fill="none" stroke="#fff" stroke-width="2"/><path d="M40 34 L40 26 L32 34 Z" fill="#9a9a9a"/></svg>
<svg style="position:absolute;left:87.0px;top:706.7px" width="44" height="44" viewBox="0 0 40 40"><rect x="6" y="6" width="6" height="6" fill="#ddd"/><rect x="6" y="16" width="6" height="6" fill="#6a8fe8"/><rect x="6" y="26" width="6" height="6" fill="#ddd"/><rect x="16" y="6" width="6" height="6" fill="#6a8fe8"/><rect x="16" y="16" width="6" height="6" fill="#ddd"/><rect x="16" y="26" width="6" height="6" fill="#6a8fe8"/><rect x="26" y="6" width="6" height="6" fill="#ddd"/><rect x="26" y="16" width="6" height="6" fill="#6a8fe8"/><rect x="26" y="26" width="6" height="6" fill="#ddd"/><path d="M40 34 L40 26 L32 34 Z" fill="#9a9a9a"/></svg>
<svg style="position:absolute;left:129.0px;top:706.7px" width="44" height="44" viewBox="0 0 40 40"><rect x="10" y="6" width="18" height="28" fill="none" stroke="#ddd" stroke-width="2" stroke-dasharray="4 4"/><line x1="19" y1="4" x2="19" y2="36" stroke="#e22" stroke-width="3"/><path d="M40 34 L40 26 L32 34 Z" fill="#9a9a9a"/></svg>
<svg style="position:absolute;left:3.0px;top:748.6px" width="44" height="44" viewBox="0 0 40 40"><path d="M8 8 L20 6 L20 34 L8 30Z" fill="#ddd"/><path d="M18 10 L30 6 L32 30 L20 34Z" fill="#6a8fe8"/><path d="M40 34 L40 26 L32 34 Z" fill="#9a9a9a"/></svg>
<svg style="position:absolute;left:45.0px;top:748.6px" width="44" height="44" viewBox="0 0 40 40"><line x1="20" y1="4" x2="20" y2="36" stroke="#6a8fe8" stroke-width="3"/><path d="M8 12 Q14 20 8 30 M30 12 Q24 20 32 30" fill="none" stroke="#999" stroke-width="3"/><path d="M40 34 L40 26 L32 34 Z" fill="#9a9a9a"/></svg>
<svg style="position:absolute;left:87.0px;top:748.6px" width="44" height="44" viewBox="0 0 40 40"><path d="M6 20 L14 30 L34 6" fill="none" stroke="#fff" stroke-width="4"/><path d="M40 34 L40 26 L32 34 Z" fill="#9a9a9a"/></svg>
<svg style="position:absolute;left:129.0px;top:748.6px" width="44" height="44" viewBox="0 0 40 40"><path d="M6 14 L20 8 L20 32 L6 28 Z" fill="#ccc"/><path d="M22 30 L28 6 L36 30 Z" fill="#ddd"/><path d="M40 34 L40 26 L32 34 Z" fill="#9a9a9a"/></svg>
<svg style="position:absolute;left:3.0px;top:790.6px" width="44" height="44" viewBox="0 0 40 40"><path d="M6 28 L20 10 L34 28 L20 34Z" fill="#e8c050" stroke="#333"/><path d="M14 6 L26 4" stroke="#ddd" stroke-width="2"/><path d="M40 34 L40 26 L32 34 Z" fill="#9a9a9a"/></svg>
<div style="left:3.0px;top:1218.0px;width:176.0px;height:823.0px;background:#333333;border-radius:10px 10px 0 0"></div>
<div style="left:3.0px;top:1218.0px;width:176.0px;height:42.0px;background:#333333;border-radius:10px 10px 0 0"></div>
<div style="left:3.0px;top:1259.0px;width:176.0px;height:1.5px;background:#2a2a2a;"></div>
<div style="left:10.0px;top:1227.4px;font:normal 26px/1 'Liberation Sans',sans-serif;color:#8c8c8c;">OSnap</div>
<div style="left:151px;top:1225px;font:24px/1 'Liberation Sans';color:#d0d0d0">&#9881;</div>
<div style="left:57.0px;top:1261.0px;width:122.0px;height:31.0px;background:#444444;border-radius:8px 0 0 0"></div>
<svg style="position:absolute;left:15.0px;top:1261.0px;" width="30" height="30" viewBox="0 0 30 30"><circle cx="13" cy="15" r="9" fill="none" stroke="#ccc" stroke-width="1.5"/><rect x="10" y="12" width="5" height="5" fill="none" stroke="#ccc"/><line x1="15" y1="15" x2="27" y2="15" stroke="#ccc" stroke-width="1.5"/></svg>
<svg style="position:absolute;left:70.0px;top:1263.0px;" width="30" height="28" viewBox="0 0 30 28"><path d="M7 6 L23 6 L17 15 L17 24 L13 22 L13 15 Z" fill="none" stroke="#ccc" stroke-width="1.5"/></svg>
<div style="left:8px;top:1305.6px;width:22px;height:22px;background:#555;border:2px solid #7a7a7a"></div>
<svg style="position:absolute;left:8.0px;top:1305.6px;" width="22" height="22" viewBox="0 0 22 22"><path d="M5 11 L9 16 L17 5" fill="none" stroke="#fff" stroke-width="2.2"/></svg>
<div style="left:38.0px;top:1304.3px;font:normal 25px/1 'Liberation Sans',sans-serif;color:#f0f0f0;">End</div>
<div style="left:8px;top:1342.5px;width:22px;height:22px;background:#555;border:2px solid #7a7a7a"></div>
<svg style="position:absolute;left:8.0px;top:1342.5px;" width="22" height="22" viewBox="0 0 22 22"><path d="M5 11 L9 16 L17 5" fill="none" stroke="#fff" stroke-width="2.2"/></svg>
<div style="left:38.0px;top:1341.3px;font:normal 25px/1 'Liberation Sans',sans-serif;color:#f0f0f0;">Near</div>
<div style="left:8px;top:1379.4px;width:22px;height:22px;background:#555;border:2px solid #7a7a7a"></div>
<svg style="position:absolute;left:8.0px;top:1379.4px;" width="22" height="22" viewBox="0 0 22 22"><path d="M5 11 L9 16 L17 5" fill="none" stroke="#fff" stroke-width="2.2"/></svg>
<div style="left:38.0px;top:1378.2px;font:normal 25px/1 'Liberation Sans',sans-serif;color:#f0f0f0;">Point</div>
<div style="left:8px;top:1416.4px;width:22px;height:22px;background:#555;border:2px solid #7a7a7a"></div>
<svg style="position:absolute;left:8.0px;top:1416.4px;" width="22" height="22" viewBox="0 0 22 22"><path d="M5 11 L9 16 L17 5" fill="none" stroke="#fff" stroke-width="2.2"/></svg>
<div style="left:38.0px;top:1415.1px;font:normal 25px/1 'Liberation Sans',sans-serif;color:#f0f0f0;">Mid</div>
<div style="left:8px;top:1453.3px;width:22px;height:22px;background:#555;border:2px solid #7a7a7a"></div>
<svg style="position:absolute;left:8.0px;top:1453.3px;" width="22" height="22" viewBox="0 0 22 22"><path d="M5 11 L9 16 L17 5" fill="none" stroke="#fff" stroke-width="2.2"/></svg>
<div style="left:38.0px;top:1452.0px;font:normal 25px/1 'Liberation Sans',sans-serif;color:#f0f0f0;">Cen</div>
<div style="left:8px;top:1490.2px;width:22px;height:22px;background:#555;border:2px solid #7a7a7a"></div>
<svg style="position:absolute;left:8.0px;top:1490.2px;" width="22" height="22" viewBox="0 0 22 22"><path d="M5 11 L9 16 L17 5" fill="none" stroke="#fff" stroke-width="2.2"/></svg>
<div style="left:38.0px;top:1488.9px;font:normal 25px/1 'Liberation Sans',sans-serif;color:#f0f0f0;">Int</div>
<div style="left:8px;top:1527.1px;width:22px;height:22px;background:#555;border:2px solid #7a7a7a"></div>
<svg style="position:absolute;left:8.0px;top:1527.1px;" width="22" height="22" viewBox="0 0 22 22"><path d="M5 11 L9 16 L17 5" fill="none" stroke="#fff" stroke-width="2.2"/></svg>
<div style="left:38.0px;top:1525.9px;font:normal 25px/1 'Liberation Sans',sans-serif;color:#f0f0f0;">Perp</div>
<div style="left:8px;top:1564.0px;width:22px;height:22px;background:#555;border:2px solid #7a7a7a"></div>
<div style="left:38.0px;top:1562.8px;font:normal 25px/1 'Liberation Sans',sans-serif;color:#f0f0f0;">Tan</div>
<div style="left:8px;top:1601.0px;width:22px;height:22px;background:#555;border:2px solid #7a7a7a"></div>
<svg style="position:absolute;left:8.0px;top:1601.0px;" width="22" height="22" viewBox="0 0 22 22"><path d="M5 11 L9 16 L17 5" fill="none" stroke="#fff" stroke-width="2.2"/></svg>
<div style="left:38.0px;top:1599.7px;font:normal 25px/1 'Liberation Sans',sans-serif;color:#f0f0f0;">Quad</div>
<div style="left:8px;top:1637.9px;width:22px;height:22px;background:#555;border:2px solid #7a7a7a"></div>
<div style="left:38.0px;top:1636.6px;font:normal 25px/1 'Liberation Sans',sans-serif;color:#f0f0f0;">Knot</div>
<div style="left:8px;top:1674.8px;width:22px;height:22px;background:#555;border:2px solid #7a7a7a"></div>
<div style="left:38.0px;top:1673.5px;font:normal 25px/1 'Liberation Sans',sans-serif;color:#f0f0f0;">Vertex</div>
<div style="left:8px;top:1711.7px;width:22px;height:22px;background:#555;border:2px solid #7a7a7a"></div>
<div style="left:38.0px;top:1710.5px;font:normal 25px/1 'Liberation Sans',sans-serif;color:#f0f0f0;">Project</div>
<div style="left:8px;top:1788.3px;width:22px;height:22px;background:#555;border:2px solid #7a7a7a"></div>
<div style="left:38.0px;top:1787.0px;font:normal 25px/1 'Liberation Sans',sans-serif;color:#f0f0f0;">Disable</div>
<div style="left:182.0px;top:392.0px;width:600.0px;height:42.0px;background:#333333;border-radius:10px 10px 0 0"></div>
<div style="left:189.4px;top:399.5px;font:normal 26.5px/1 'Liberation Sans',sans-serif;color:#8c8c8c;">RhinoCAM 2023 - Machining Browser</div>
<div style="left:182.0px;top:434.0px;width:600.0px;height:53.0px;background:#e4e8ed;"></div>
<div style="left:182.0px;top:486.0px;width:600.0px;height:1.5px;background:#b8c0cc;"></div>
<div style="left:185px;top:434.5px;width:69px;height:52px;background:linear-gradient(#ffe08e,#ffd36a);border:1.5px solid #e7b24a;border-radius:3px"></div>
<div style="left:192.0px;top:449.1px;font:normal 26.5px/1 'Liberation Sans',sans-serif;color:#1a1a1a;letter-spacing:-0.5px">MILL</div>
<svg style="position:absolute;left:262.0px;top:440.0px;" width="38" height="44" viewBox="0 0 38 44"><path d="M2 2 L28 2 L28 10 L20 16 L20 36 L10 36 L10 16 L2 10 Z" fill="#c8c8c8" stroke="#777"/><rect x="22" y="20" width="14" height="20" fill="#999" stroke="#444"/><rect x="24" y="32" width="6" height="8" fill="#f4d000"/></svg>
<div style="left:308px;top:435px;width:117px;height:53px;background:#fbfbfb;border:1.5px solid #c4cad2;border-bottom:none"></div>
<div style="left:316.8px;top:449.1px;font:normal 26.5px/1 'Liberation Sans',sans-serif;color:#1a1a1a;">Program</div>
<div style="left:435.4px;top:449.1px;font:normal 26.5px/1 'Liberation Sans',sans-serif;color:#1a1a1a;">Simulate</div>
<svg style="position:absolute;left:566.0px;top:448.0px;" width="22" height="18" viewBox="0 0 22 18"><path d="M3 14 L11 5 L19 14 M3 14 L7 14 L11 9 L15 14 L19 14" fill="#fff" stroke="#333" stroke-width="1.5"/></svg>
<svg style="position:absolute;left:606.0px;top:442.0px;" width="36" height="36" viewBox="0 0 36 36"><path d="M4 32 L22 14" stroke="#c87830" stroke-width="6" stroke-linecap="round"/><path d="M14 10 L26 2 L34 12 L26 18 Z" fill="#b8b8b8" stroke="#777"/></svg>
<svg style="position:absolute;left:658.0px;top:452.0px;" width="12" height="10" viewBox="0 0 12 10"><path d="M1 2 L11 2 L6 8 Z" fill="#444"/></svg>
<svg style="position:absolute;left:684.0px;top:441.0px;" width="38" height="38" viewBox="0 0 38 38"><circle cx="19" cy="19" r="13" fill="none" stroke="#999" stroke-width="6" stroke-dasharray="5 3"/><circle cx="19" cy="19" r="9" fill="#ddd" stroke="#888" stroke-width="2"/><circle cx="19" cy="19" r="3" fill="#999"/></svg>
<svg style="position:absolute;left:738.0px;top:441.0px;" width="36" height="36" viewBox="0 0 36 36"><circle cx="18" cy="18" r="16" fill="#2f7fe0" stroke="#1a5fb0" stroke-width="1.5"/><text x="18" y="27" font-size="24" font-family="Liberation Sans" font-weight="bold" fill="#fff" text-anchor="middle">?</text></svg>
<div style="left:182.0px;top:487.5px;width:600.0px;height:209.0px;background:linear-gradient(#fdfdfd,#f5f6f8 70%,#eef0f3);"></div>
<div style="left:182.0px;top:696.0px;width:600.0px;height:3.0px;background:#c9ced6;"></div>
<div style="left:372.7px;top:498.0px;width:1.5px;height:195.0px;background:#d6dae0;"></div>
<div style="left:562.0px;top:498.0px;width:1.5px;height:195.0px;background:#d6dae0;"></div>
<div style="left:715.8px;top:498.0px;width:1.5px;height:195.0px;background:#d6dae0;"></div>
<svg style="position:absolute;left:196.0px;top:497.0px;" width="40" height="42" viewBox="0 0 40 42"><path d="M4 8 L22 2 L36 8 L36 30 L22 36 L4 30 Z" fill="#5aa0e8"/><path d="M4 8 L22 14 L36 8 M22 14 L22 36" stroke="#1a5aa0" fill="none"/><rect x="12" y="16" width="6" height="12" fill="#333"/><path d="M0 32 L22 40 L40 32 L22 26Z" fill="#c0c4cc"/></svg>
<svg style="position:absolute;left:200.0px;top:546.0px;" width="36" height="36" viewBox="0 0 36 36"><ellipse cx="18" cy="16" rx="16" ry="14" fill="#e8e0d0" stroke="#999"/><circle cx="11" cy="12" r="4" fill="#6a6080"/><circle cx="22" cy="9" r="4" fill="#6a6080"/><circle cx="25" cy="19" r="4" fill="#6a6080"/><path d="M4 26 Q18 36 32 24" stroke="#222" stroke-width="3" fill="none"/></svg>
<svg style="position:absolute;left:197.0px;top:592.0px;" width="40" height="40" viewBox="0 0 40 40"><rect x="1" y="1" width="38" height="38" rx="3" fill="#f6c820" stroke="#d8a000"/><circle cx="20" cy="20" r="10" fill="none" stroke="#fff" stroke-width="5" stroke-dasharray="4 3"/><circle cx="20" cy="20" r="5" fill="#f6c820" stroke="#fff" stroke-width="2"/></svg>
<div style="left:260.0px;top:505.9px;font:normal 26.5px/1 'Liberation Sans',sans-serif;color:#1a1a1a;">Machine</div>
<div style="left:260.0px;top:552.5px;font:normal 26.5px/1 'Liberation Sans',sans-serif;color:#1a1a1a;">Post</div>
<div style="left:260.0px;top:599.1px;font:normal 26.5px/1 'Liberation Sans',sans-serif;color:#1a1a1a;">Setup</div>
<svg style="position:absolute;left:338.0px;top:609.0px;" width="12" height="8" viewBox="0 0 12 8"><path d="M1 1 L11 1 L6 7 Z" fill="#444"/></svg>
<svg style="position:absolute;left:384.0px;top:494.0px;" width="48" height="46" viewBox="0 0 48 46"><path d="M4 12 L24 4 L44 12 L44 34 L24 44 L4 34 Z" fill="#f7a820"/><path d="M4 12 L24 20 L44 12 L24 4 Z" fill="#ffd040"/><path d="M24 20 L24 44 L44 34 L44 12 Z" fill="#f08c10"/></svg>
<svg style="position:absolute;left:386.0px;top:545.0px;" width="46" height="44" viewBox="0 0 46 44"><rect x="6" y="8" width="34" height="30" fill="#4fa0d0" stroke="#222" stroke-width="2"/><path d="M6 22 L40 22 M23 8 L23 38" stroke="#f4d000" stroke-width="3"/><path d="M2 24 L10 16 L10 32Z M44 20 L36 12 L36 28Z M23 0 L15 8 L31 8Z M23 44 L15 36 L31 36Z" fill="#2c2"/></svg>
<svg style="position:absolute;left:394.0px;top:596.0px;" width="36" height="38" viewBox="0 0 36 38"><circle cx="6" cy="6" r="5" fill="#e22"/><circle cx="6" cy="18" r="5" fill="#33c"/><circle cx="6" cy="30" r="5" fill="#2b2"/><path d="M14 6 L34 6 M14 18 L34 18 M14 30 L34 30" stroke="#223" stroke-width="4"/></svg>
<div style="left:451.9px;top:505.9px;font:normal 26.5px/1 'Liberation Sans',sans-serif;color:#1a1a1a;">Stock</div>
<div style="left:451.9px;top:552.5px;font:normal 26.5px/1 'Liberation Sans',sans-serif;color:#1a1a1a;">Align</div>
<div style="left:452.5px;top:599.1px;font:normal 26.5px/1 'Liberation Sans',sans-serif;color:#1a1a1a;">Material</div>
<svg style="position:absolute;left:526.0px;top:513.0px;" width="12" height="8" viewBox="0 0 12 8"><path d="M1 1 L11 1 L6 7 Z" fill="#444"/></svg>
<svg style="position:absolute;left:524.0px;top:559.0px;" width="12" height="8" viewBox="0 0 12 8"><path d="M1 1 L11 1 L6 7 Z" fill="#444"/></svg>
<div style="left:578.3px;top:598.2px;font:normal 26.5px/1 'Liberation Sans',sans-serif;color:#1a1a1a;">Machining</div>
<div style="left:566.8px;top:624.0px;font:normal 26.5px/1 'Liberation Sans',sans-serif;color:#1a1a1a;">Operations</div>
<svg style="position:absolute;left:701.0px;top:635.0px;" width="12" height="8" viewBox="0 0 12 8"><path d="M1 1 L11 1 L6 7 Z" fill="#444"/></svg>
<div style="left:191.0px;top:660.3px;font:normal 26.5px/1 'Liberation Sans',sans-serif;color:#6b7686;">Machine Setup</div>
<div style="left:437.9px;top:660.3px;font:normal 26.5px/1 'Liberation Sans',sans-serif;color:#6b7686;">Stock</div>
<div style="left:182.0px;top:699.0px;width:600.0px;height:1256.0px;background:#ffffff;"></div>
<svg style="position:absolute;left:193.0px;top:717.2px;" width="14" height="14" viewBox="0 0 14 14"><rect x="0.75" y="0.75" width="12" height="12" fill="#fff" stroke="#9aa4b4" stroke-width="1.5"/><line x1="3.5" y1="6.75" x2="10" y2="6.75" stroke="#2a3a8a" stroke-width="1.5"/></svg>
<svg style="position:absolute;left:219.0px;top:709.0px;" width="32" height="32" viewBox="0 0 32 32"><path d="M1 6 L1 26 L26 26 L28 9 L12 9 L10 5 L2 5 Z" fill="#f8d860" stroke="#c8a030"/><path d="M1 26 L5 12 L30 12 L26 26 Z" fill="#ffe888" stroke="#d0a838"/></svg>
<div style="left:256.0px;top:710.0px;font:bold 26.5px/1 'Liberation Sans',sans-serif;color:#000;">Machining Job</div>
<div style="left:232.0px;top:742.0px;width:1.2px;height:458.0px;background:repeating-linear-gradient(#9a9a9a 0 1.2px,transparent 1.2px 3.2px);"></div>
<div style="left:232.0px;top:760.9px;width:20.0px;height:1.2px;background:repeating-linear-gradient(90deg,#9a9a9a 0 1.2px,transparent 1.2px 3.2px);"></div>
<svg style="position:absolute;left:253.0px;top:745.9px;" width="30" height="32" viewBox="0 0 30 32"><path d="M4 8 L16 3 L26 8 L26 22 L16 27 L4 22 Z" fill="#5aa0e8"/><rect x="10" y="12" width="5" height="9" fill="#333"/><path d="M0 24 L16 30 L30 24 L16 19Z" fill="#b8bcc4"/></svg>
<div style="left:302.8px;top:750.4px;font:normal 26.5px/1 'Liberation Sans',sans-serif;color:#000;">Machine - 3 Axis</div>
<div style="left:232.0px;top:800.3px;width:20.0px;height:1.2px;background:repeating-linear-gradient(90deg,#9a9a9a 0 1.2px,transparent 1.2px 3.2px);"></div>
<svg style="position:absolute;left:253.0px;top:785.3px;" width="30" height="32" viewBox="0 0 30 32"><ellipse cx="15" cy="13" rx="13" ry="11" fill="#e8e0d0" stroke="#999"/><circle cx="9" cy="10" r="3" fill="#6a6080"/><circle cx="18" cy="8" r="3" fill="#6a6080"/><circle cx="21" cy="16" r="3" fill="#6a6080"/><path d="M3 21 Q15 30 27 20" stroke="#222" stroke-width="2.5" fill="none"/></svg>
<div style="left:302.8px;top:789.8px;font:normal 26.5px/1 'Liberation Sans',sans-serif;color:#000;">Post - ShopBot</div>
<div style="left:232.0px;top:840.8px;width:20.0px;height:1.2px;background:repeating-linear-gradient(90deg,#9a9a9a 0 1.2px,transparent 1.2px 3.2px);"></div>
<svg style="position:absolute;left:253.0px;top:825.8px;" width="30" height="32" viewBox="0 0 30 32"><path d="M2 8 L15 2 L28 8 L28 24 L15 30 L2 24 Z" fill="#f7a820"/><path d="M2 8 L15 14 L28 8 L15 2 Z" fill="#ffd040"/><path d="M15 14 L15 30 L28 24 L28 8 Z" fill="#f08c10"/></svg>
<div style="left:302.8px;top:830.3px;font:normal 26.5px/1 'Liberation Sans',sans-serif;color:#000;">Stock - Box Stock</div>
<div style="left:232.0px;top:880.0px;width:20.0px;height:1.2px;background:repeating-linear-gradient(90deg,#9a9a9a 0 1.2px,transparent 1.2px 3.2px);"></div>
<svg style="position:absolute;left:253.0px;top:865.0px;" width="30" height="32" viewBox="0 0 30 32"><path d="M2 20 L16 4 L28 10 L28 24 L14 30 Z" fill="#8a7ad8" stroke="#4a3a98"/><path d="M10 14 L24 6 M12 22 L26 14" stroke="#222" stroke-width="3"/></svg>
<div style="left:302.8px;top:869.5px;font:normal 26.5px/1 'Liberation Sans',sans-serif;color:#000;">Fixtures - None</div>
<svg style="position:absolute;left:225.8px;top:914.2px;" width="14" height="14" viewBox="0 0 14 14"><rect x="0.75" y="0.75" width="12" height="12" fill="#fff" stroke="#9aa4b4" stroke-width="1.5"/><line x1="3.5" y1="6.75" x2="10" y2="6.75" stroke="#2a3a8a" stroke-width="1.5"/><line x1="6.75" y1="3.5" x2="6.75" y2="10" stroke="#2a3a8a" stroke-width="1.5"/></svg>
<div style="left:240.0px;top:921.0px;width:12.0px;height:1.2px;background:repeating-linear-gradient(90deg,#9a9a9a 0 1.2px,transparent 1.2px 3.2px);"></div>
<svg style="position:absolute;left:253.0px;top:905.0px;" width="30" height="32" viewBox="0 0 30 32"><rect x="1" y="4" width="27" height="25" rx="2" fill="#f8c830" stroke="#d09018"/><rect x="1" y="26" width="27" height="3" fill="#e07010"/><path d="M8 24 L8 6 M8 12 L20 22" stroke="#2a5ac8" stroke-width="2" fill="none"/><path d="M6 22 Q12 14 22 18" stroke="#e22" stroke-width="1.5" fill="none"/><rect x="16" y="18" width="8" height="6" fill="#3a8ae8"/></svg>
<div style="left:288.0px;top:910.5px;font:bold 26.5px/1 'Liberation Sans',sans-serif;color:#000;">SK01_PLYWOOD 21mm - Trestle</div>
<svg style="position:absolute;left:225.8px;top:954.0px;" width="14" height="14" viewBox="0 0 14 14"><rect x="0.75" y="0.75" width="12" height="12" fill="#fff" stroke="#9aa4b4" stroke-width="1.5"/><line x1="3.5" y1="6.75" x2="10" y2="6.75" stroke="#2a3a8a" stroke-width="1.5"/><line x1="6.75" y1="3.5" x2="6.75" y2="10" stroke="#2a3a8a" stroke-width="1.5"/></svg>
<div style="left:240.0px;top:960.8px;width:12.0px;height:1.2px;background:repeating-linear-gradient(90deg,#9a9a9a 0 1.2px,transparent 1.2px 3.2px);"></div>
<svg style="position:absolute;left:253.0px;top:944.8px;" width="30" height="32" viewBox="0 0 30 32"><rect x="1" y="4" width="27" height="25" rx="2" fill="#f8c830" stroke="#d09018"/><rect x="1" y="26" width="27" height="3" fill="#e07010"/><path d="M8 24 L8 6 M8 12 L20 22" stroke="#2a5ac8" stroke-width="2" fill="none"/><path d="M6 22 Q12 14 22 18" stroke="#e22" stroke-width="1.5" fill="none"/><rect x="16" y="18" width="8" height="6" fill="#3a8ae8"/></svg>
<div style="left:288.0px;top:950.3px;font:bold 26.5px/1 'Liberation Sans',sans-serif;color:#000;">SK01_PLYWOOD 21mm - TEST</div>
<svg style="position:absolute;left:225.8px;top:993.9px;" width="14" height="14" viewBox="0 0 14 14"><rect x="0.75" y="0.75" width="12" height="12" fill="#fff" stroke="#9aa4b4" stroke-width="1.5"/><line x1="3.5" y1="6.75" x2="10" y2="6.75" stroke="#2a3a8a" stroke-width="1.5"/><line x1="6.75" y1="3.5" x2="6.75" y2="10" stroke="#2a3a8a" stroke-width="1.5"/></svg>
<div style="left:240.0px;top:1000.6px;width:12.0px;height:1.2px;background:repeating-linear-gradient(90deg,#9a9a9a 0 1.2px,transparent 1.2px 3.2px);"></div>
<svg style="position:absolute;left:253.0px;top:984.6px;" width="30" height="32" viewBox="0 0 30 32"><rect x="1" y="4" width="27" height="25" rx="2" fill="#f8c830" stroke="#d09018"/><rect x="1" y="26" width="27" height="3" fill="#e07010"/><path d="M8 24 L8 6 M8 12 L20 22" stroke="#2a5ac8" stroke-width="2" fill="none"/><path d="M6 22 Q12 14 22 18" stroke="#e22" stroke-width="1.5" fill="none"/><rect x="16" y="18" width="8" height="6" fill="#3a8ae8"/></svg>
<div style="left:288.0px;top:990.1px;font:bold 26.5px/1 'Liberation Sans',sans-serif;color:#000;">SK01_PLYWOOD 21mm - SHEET1</div>
<svg style="position:absolute;left:225.8px;top:1033.7px;" width="14" height="14" viewBox="0 0 14 14"><rect x="0.75" y="0.75" width="12" height="12" fill="#fff" stroke="#9aa4b4" stroke-width="1.5"/><line x1="3.5" y1="6.75" x2="10" y2="6.75" stroke="#2a3a8a" stroke-width="1.5"/><line x1="6.75" y1="3.5" x2="6.75" y2="10" stroke="#2a3a8a" stroke-width="1.5"/></svg>
<div style="left:240.0px;top:1040.4px;width:12.0px;height:1.2px;background:repeating-linear-gradient(90deg,#9a9a9a 0 1.2px,transparent 1.2px 3.2px);"></div>
<svg style="position:absolute;left:253.0px;top:1024.4px;" width="30" height="32" viewBox="0 0 30 32"><rect x="1" y="4" width="27" height="25" rx="2" fill="#f8c830" stroke="#d09018"/><rect x="1" y="26" width="27" height="3" fill="#e07010"/><path d="M8 24 L8 6 M8 12 L20 22" stroke="#2a5ac8" stroke-width="2" fill="none"/><path d="M6 22 Q12 14 22 18" stroke="#e22" stroke-width="1.5" fill="none"/><rect x="16" y="18" width="8" height="6" fill="#3a8ae8"/></svg>
<div style="left:288.0px;top:1029.9px;font:bold 26.5px/1 'Liberation Sans',sans-serif;color:#000;">SK01_PLYWOOD 21mm - SHEET2</div>
<svg style="position:absolute;left:225.8px;top:1073.5px;" width="14" height="14" viewBox="0 0 14 14"><rect x="0.75" y="0.75" width="12" height="12" fill="#fff" stroke="#9aa4b4" stroke-width="1.5"/><line x1="3.5" y1="6.75" x2="10" y2="6.75" stroke="#2a3a8a" stroke-width="1.5"/><line x1="6.75" y1="3.5" x2="6.75" y2="10" stroke="#2a3a8a" stroke-width="1.5"/></svg>
<div style="left:240.0px;top:1080.2px;width:12.0px;height:1.2px;background:repeating-linear-gradient(90deg,#9a9a9a 0 1.2px,transparent 1.2px 3.2px);"></div>
<svg style="position:absolute;left:253.0px;top:1064.2px;" width="30" height="32" viewBox="0 0 30 32"><rect x="1" y="4" width="27" height="25" rx="2" fill="#f8c830" stroke="#d09018"/><rect x="1" y="26" width="27" height="3" fill="#e07010"/><path d="M8 24 L8 6 M8 12 L20 22" stroke="#2a5ac8" stroke-width="2" fill="none"/><path d="M6 22 Q12 14 22 18" stroke="#e22" stroke-width="1.5" fill="none"/><rect x="16" y="18" width="8" height="6" fill="#3a8ae8"/></svg>
<div style="left:288.0px;top:1069.7px;font:bold 26.5px/1 'Liberation Sans',sans-serif;color:#000;">SK01_PLYWOOD 21mm - SHEET3</div>
<svg style="position:absolute;left:225.8px;top:1113.2px;" width="14" height="14" viewBox="0 0 14 14"><rect x="0.75" y="0.75" width="12" height="12" fill="#fff" stroke="#9aa4b4" stroke-width="1.5"/><line x1="3.5" y1="6.75" x2="10" y2="6.75" stroke="#2a3a8a" stroke-width="1.5"/><line x1="6.75" y1="3.5" x2="6.75" y2="10" stroke="#2a3a8a" stroke-width="1.5"/></svg>
<div style="left:240.0px;top:1120.0px;width:12.0px;height:1.2px;background:repeating-linear-gradient(90deg,#9a9a9a 0 1.2px,transparent 1.2px 3.2px);"></div>
<svg style="position:absolute;left:253.0px;top:1104.0px;" width="30" height="32" viewBox="0 0 30 32"><rect x="1" y="4" width="27" height="25" rx="2" fill="#f8c830" stroke="#d09018"/><rect x="1" y="26" width="27" height="3" fill="#e07010"/><path d="M8 24 L8 6 M8 12 L20 22" stroke="#2a5ac8" stroke-width="2" fill="none"/><path d="M6 22 Q12 14 22 18" stroke="#e22" stroke-width="1.5" fill="none"/><rect x="16" y="18" width="8" height="6" fill="#3a8ae8"/></svg>
<div style="left:288.0px;top:1109.5px;font:bold 26.5px/1 'Liberation Sans',sans-serif;color:#000;">SK01_PLYWOOD 21mm - SHEET4</div>
<svg style="position:absolute;left:225.8px;top:1153.0px;" width="14" height="14" viewBox="0 0 14 14"><rect x="0.75" y="0.75" width="12" height="12" fill="#fff" stroke="#9aa4b4" stroke-width="1.5"/><line x1="3.5" y1="6.75" x2="10" y2="6.75" stroke="#2a3a8a" stroke-width="1.5"/><line x1="6.75" y1="3.5" x2="6.75" y2="10" stroke="#2a3a8a" stroke-width="1.5"/></svg>
<div style="left:240.0px;top:1159.8px;width:12.0px;height:1.2px;background:repeating-linear-gradient(90deg,#9a9a9a 0 1.2px,transparent 1.2px 3.2px);"></div>
<svg style="position:absolute;left:253.0px;top:1143.8px;" width="30" height="32" viewBox="0 0 30 32"><rect x="1" y="4" width="27" height="25" rx="2" fill="#f8c830" stroke="#d09018"/><rect x="1" y="26" width="27" height="3" fill="#e07010"/><path d="M8 24 L8 6 M8 12 L20 22" stroke="#2a5ac8" stroke-width="2" fill="none"/><path d="M6 22 Q12 14 22 18" stroke="#e22" stroke-width="1.5" fill="none"/><rect x="16" y="18" width="8" height="6" fill="#3a8ae8"/></svg>
<div style="left:288.0px;top:1149.3px;font:bold 26.5px/1 'Liberation Sans',sans-serif;color:#000;">SK01_PLYWOOD 21mm - SHEET5</div>
<svg style="position:absolute;left:225.8px;top:1192.8px;" width="14" height="14" viewBox="0 0 14 14"><rect x="0.75" y="0.75" width="12" height="12" fill="#fff" stroke="#9aa4b4" stroke-width="1.5"/><line x1="3.5" y1="6.75" x2="10" y2="6.75" stroke="#2a3a8a" stroke-width="1.5"/></svg>
<div style="left:240.0px;top:1199.6px;width:12.0px;height:1.2px;background:repeating-linear-gradient(90deg,#9a9a9a 0 1.2px,transparent 1.2px 3.2px);"></div>
<svg style="position:absolute;left:253.0px;top:1183.6px;" width="30" height="32" viewBox="0 0 30 32"><rect x="1" y="4" width="27" height="25" rx="2" fill="#f8c830" stroke="#d09018"/><rect x="1" y="26" width="27" height="3" fill="#e07010"/><path d="M8 24 L8 6 M8 12 L20 22" stroke="#2a5ac8" stroke-width="2" fill="none"/><path d="M6 22 Q12 14 22 18" stroke="#e22" stroke-width="1.5" fill="none"/><rect x="16" y="18" width="8" height="6" fill="#3a8ae8"/></svg>
<div style="left:288.0px;top:1189.1px;font:bold 26.5px/1 'Liberation Sans',sans-serif;color:#000;">SK01_PLYWOOD 21mm - SHEET6</div>
<div style="left:265.0px;top:1222.0px;width:1.2px;height:258.0px;background:repeating-linear-gradient(#9a9a9a 0 1.2px,transparent 1.2px 3.2px);"></div>
<div style="left:266.0px;top:1240.6px;width:22.0px;height:1.2px;background:repeating-linear-gradient(90deg,#9a9a9a 0 1.2px,transparent 1.2px 3.2px);"></div>
<svg style="position:absolute;left:285.0px;top:1225.6px;" width="30" height="30" viewBox="0 0 30 30"><circle cx="15" cy="15" r="13" fill="#ddd"/><path d="M15 2 A13 13 0 0 1 28 15 L15 15Z M15 28 A13 13 0 0 1 2 15 L15 15Z" fill="#111"/></svg>
<div style="left:321.4px;top:1230.1px;font:normal 26.5px/1 'Liberation Sans',sans-serif;color:#000;">Corner</div>
<div style="left:266.0px;top:1281.0px;width:22.0px;height:1.2px;background:repeating-linear-gradient(90deg,#9a9a9a 0 1.2px,transparent 1.2px 3.2px);"></div>
<svg style="position:absolute;left:259.0px;top:1274.2px;" width="14" height="14" viewBox="0 0 14 14"><rect x="0.75" y="0.75" width="12" height="12" fill="#fff" stroke="#9aa4b4" stroke-width="1.5"/><line x1="3.5" y1="6.75" x2="10" y2="6.75" stroke="#2a3a8a" stroke-width="1.5"/><line x1="6.75" y1="3.5" x2="6.75" y2="10" stroke="#2a3a8a" stroke-width="1.5"/></svg>
<svg style="position:absolute;left:288.8px;top:1266.0px;" width="32" height="30" viewBox="0 0 32 30"><path d="M1 6 L1 26 L26 26 L28 9 L12 9 L10 5 L2 5 Z" fill="#f8d860" stroke="#c8a030"/><path d="M1 26 L5 12 L30 12 L26 26 Z" fill="#ffe888" stroke="#d0a838"/></svg>
<div style="left:321.4px;top:1270.5px;font:normal 26.5px/1 'Liberation Sans',sans-serif;color:#000;">Planning</div>
<div style="left:266.0px;top:1321.4px;width:22.0px;height:1.2px;background:repeating-linear-gradient(90deg,#9a9a9a 0 1.2px,transparent 1.2px 3.2px);"></div>
<svg style="position:absolute;left:259.0px;top:1314.7px;" width="14" height="14" viewBox="0 0 14 14"><rect x="0.75" y="0.75" width="12" height="12" fill="#fff" stroke="#9aa4b4" stroke-width="1.5"/><line x1="3.5" y1="6.75" x2="10" y2="6.75" stroke="#2a3a8a" stroke-width="1.5"/><line x1="6.75" y1="3.5" x2="6.75" y2="10" stroke="#2a3a8a" stroke-width="1.5"/></svg>
<svg style="position:absolute;left:288.8px;top:1306.4px;" width="32" height="30" viewBox="0 0 32 30"><path d="M1 6 L1 26 L26 26 L28 9 L12 9 L10 5 L2 5 Z" fill="#f8d860" stroke="#c8a030"/><path d="M1 26 L5 12 L30 12 L26 26 Z" fill="#ffe888" stroke="#d0a838"/></svg>
<div style="left:321.4px;top:1310.9px;font:normal 26.5px/1 'Liberation Sans',sans-serif;color:#000;">8Drill_16mm deep</div>
<div style="left:266.0px;top:1361.0px;width:22.0px;height:1.2px;background:repeating-linear-gradient(90deg,#9a9a9a 0 1.2px,transparent 1.2px 3.2px);"></div>
<svg style="position:absolute;left:259.0px;top:1354.2px;" width="14" height="14" viewBox="0 0 14 14"><rect x="0.75" y="0.75" width="12" height="12" fill="#fff" stroke="#9aa4b4" stroke-width="1.5"/><line x1="3.5" y1="6.75" x2="10" y2="6.75" stroke="#2a3a8a" stroke-width="1.5"/><line x1="6.75" y1="3.5" x2="6.75" y2="10" stroke="#2a3a8a" stroke-width="1.5"/></svg>
<svg style="position:absolute;left:288.8px;top:1346.0px;" width="32" height="30" viewBox="0 0 32 30"><path d="M1 6 L1 26 L26 26 L28 9 L12 9 L10 5 L2 5 Z" fill="#f8d860" stroke="#c8a030"/><path d="M1 26 L5 12 L30 12 L26 26 Z" fill="#ffe888" stroke="#d0a838"/></svg>
<div style="left:321.4px;top:1350.5px;font:normal 26.5px/1 'Liberation Sans',sans-serif;color:#000;">8Drill_21mm deep</div>
<div style="left:266.0px;top:1400.5px;width:22.0px;height:1.2px;background:repeating-linear-gradient(90deg,#9a9a9a 0 1.2px,transparent 1.2px 3.2px);"></div>
<svg style="position:absolute;left:259.0px;top:1393.8px;" width="14" height="14" viewBox="0 0 14 14"><rect x="0.75" y="0.75" width="12" height="12" fill="#fff" stroke="#9aa4b4" stroke-width="1.5"/><line x1="3.5" y1="6.75" x2="10" y2="6.75" stroke="#2a3a8a" stroke-width="1.5"/><line x1="6.75" y1="3.5" x2="6.75" y2="10" stroke="#2a3a8a" stroke-width="1.5"/></svg>
<svg style="position:absolute;left:288.8px;top:1385.5px;" width="32" height="30" viewBox="0 0 32 30"><path d="M1 6 L1 26 L26 26 L28 9 L12 9 L10 5 L2 5 Z" fill="#f8d860" stroke="#c8a030"/><path d="M1 26 L5 12 L30 12 L26 26 Z" fill="#ffe888" stroke="#d0a838"/></svg>
<div style="left:317.7px;top:1382.0px;width:300.0px;height:40.0px;background:#0078d7;"></div>
<div style="left:321.4px;top:1390.0px;font:normal 26.5px/1 'Liberation Sans',sans-serif;color:#ffffff;">8Comp_Inside Cut_Joint</div>
<div style="left:266.0px;top:1440.3px;width:22.0px;height:1.2px;background:repeating-linear-gradient(90deg,#9a9a9a 0 1.2px,transparent 1.2px 3.2px);"></div>
<svg style="position:absolute;left:259.0px;top:1433.5px;" width="14" height="14" viewBox="0 0 14 14"><rect x="0.75" y="0.75" width="12" height="12" fill="#fff" stroke="#9aa4b4" stroke-width="1.5"/><line x1="3.5" y1="6.75" x2="10" y2="6.75" stroke="#2a3a8a" stroke-width="1.5"/><line x1="6.75" y1="3.5" x2="6.75" y2="10" stroke="#2a3a8a" stroke-width="1.5"/></svg>
<svg style="position:absolute;left:288.8px;top:1425.3px;" width="32" height="30" viewBox="0 0 32 30"><path d="M1 6 L1 26 L26 26 L28 9 L12 9 L10 5 L2 5 Z" fill="#f8d860" stroke="#c8a030"/><path d="M1 26 L5 12 L30 12 L26 26 Z" fill="#ffe888" stroke="#d0a838"/></svg>
<div style="left:321.4px;top:1429.8px;font:normal 26.5px/1 'Liberation Sans',sans-serif;color:#000;">8Comp_15mm_Bridges</div>
<div style="left:266.0px;top:1480.4px;width:22.0px;height:1.2px;background:repeating-linear-gradient(90deg,#9a9a9a 0 1.2px,transparent 1.2px 3.2px);"></div>
<svg style="position:absolute;left:259.0px;top:1473.7px;" width="14" height="14" viewBox="0 0 14 14"><rect x="0.75" y="0.75" width="12" height="12" fill="#fff" stroke="#9aa4b4" stroke-width="1.5"/><line x1="3.5" y1="6.75" x2="10" y2="6.75" stroke="#2a3a8a" stroke-width="1.5"/><line x1="6.75" y1="3.5" x2="6.75" y2="10" stroke="#2a3a8a" stroke-width="1.5"/></svg>
<svg style="position:absolute;left:288.8px;top:1465.4px;" width="32" height="30" viewBox="0 0 32 30"><path d="M1 6 L1 26 L26 26 L28 9 L12 9 L10 5 L2 5 Z" fill="#f8d860" stroke="#c8a030"/><path d="M1 26 L5 12 L30 12 L26 26 Z" fill="#ffe888" stroke="#d0a838"/></svg>
<svg style="position:absolute;left:285.0px;top:1456.4px;" width="18" height="18" viewBox="0 0 18 18"><path d="M9 1 L11 6 L17 5 L13 9 L17 13 L11 12 L9 17 L7 12 L1 13 L5 9 L1 5 L7 6Z" fill="#e83a10"/><circle cx="9" cy="9" r="3" fill="#ffd020"/></svg>
<div style="left:321.4px;top:1469.9px;font:normal 26.5px/1 'Liberation Sans',sans-serif;color:#000;">8Comp_15mm_Left over material cut</div>
<div style="left:182.0px;top:1954.0px;width:600.0px;height:1.5px;background:#a8a8a8;"></div>
<div style="left:182.0px;top:1955.5px;width:600.0px;height:42.0px;background:linear-gradient(#ffffff,#ebebeb);"></div>
<div style="left:182.0px;top:1997.0px;width:600.0px;height:2.0px;background:#a0a0a0;"></div>
<div style="left:182.0px;top:1999.0px;width:600.0px;height:42.0px;background:linear-gradient(#e6e6e6,#c8c8c8);"></div>
<div style="left:368px;top:1959px;width:36px;height:35px;background:#ffd878;border:1.5px solid #e0a840;border-radius:3px"></div>
<div style="left:404px;top:1959px;width:36px;height:35px;background:#ffd878;border:1.5px solid #e0a840;border-radius:3px"></div>
<svg style="position:absolute;left:186.0px;top:1960.0px;" width="36" height="34" viewBox="0 0 36 34"><rect x="6" y="4" width="20" height="16" fill="#5aa8d8" stroke="#234"/><rect x="8" y="12" width="16" height="6" fill="#f0c040"/><circle cx="6" cy="27" r="5" fill="#9cc8f0" stroke="#234"/><circle cx="16" cy="27" r="5" fill="#9cc8f0" stroke="#234"/></svg>
<svg style="position:absolute;left:222.0px;top:1960.0px;" width="36" height="34" viewBox="0 0 36 34"><circle cx="18" cy="5" r="4" fill="#e22"/><circle cx="18" cy="13" r="4" fill="#33c"/><circle cx="18" cy="20" r="4" fill="#2b2"/><path d="M24 6 L32 6 M24 13 L32 13 M24 20 L32 20" stroke="#223" stroke-width="2.5"/><circle cx="6" cy="27" r="5" fill="#9cc8f0" stroke="#234"/><circle cx="16" cy="27" r="5" fill="#9cc8f0" stroke="#234"/></svg>
<svg style="position:absolute;left:258.0px;top:1960.0px;" width="36" height="34" viewBox="0 0 36 34"><path d="M8 22 L28 6" stroke="#8cf" stroke-width="6"/><circle cx="6" cy="27" r="5" fill="#9cc8f0" stroke="#234"/><circle cx="16" cy="27" r="5" fill="#9cc8f0" stroke="#234"/></svg>
<svg style="position:absolute;left:294.0px;top:1960.0px;" width="36" height="34" viewBox="0 0 36 34"><rect x="16" y="2" width="16" height="16" fill="#2a70c8"/><circle cx="6" cy="27" r="5" fill="#9cc8f0" stroke="#234"/><circle cx="16" cy="27" r="5" fill="#9cc8f0" stroke="#234"/></svg>
<svg style="position:absolute;left:330.0px;top:1960.0px;" width="36" height="34" viewBox="0 0 36 34"><path d="M10 6 L32 6 M10 11 L32 11 M10 16 L32 16" stroke="#3cd" stroke-width="3"/><circle cx="6" cy="27" r="5" fill="#9cc8f0" stroke="#234"/><circle cx="16" cy="27" r="5" fill="#9cc8f0" stroke="#234"/></svg>
<svg style="position:absolute;left:366.0px;top:1960.0px;" width="36" height="34" viewBox="0 0 36 34"><circle cx="20" cy="13" r="11" fill="#4aa0e0"/><path d="M20 2 L20 24 M10 13 L30 13" stroke="#2a2" stroke-width="2"/><circle cx="6" cy="27" r="5" fill="#9cc8f0" stroke="#234"/><circle cx="16" cy="27" r="5" fill="#9cc8f0" stroke="#234"/></svg>
<svg style="position:absolute;left:402.0px;top:1960.0px;" width="36" height="34" viewBox="0 0 36 34"><path d="M18 2 L18 14 L30 18 M18 14 L8 20" stroke="#2a5ac8" stroke-width="2.5" fill="none"/><circle cx="18" cy="14" r="2" fill="#e22"/><circle cx="6" cy="27" r="5" fill="#9cc8f0" stroke="#234"/><circle cx="16" cy="27" r="5" fill="#9cc8f0" stroke="#234"/></svg>
<div style="left:786.0px;top:394.0px;width:2035.0px;height:1602.0px;background:#000000;"></div>
<div style="left:786.0px;top:392.5px;width:2035.0px;height:1.6px;background:#8a8a8a;"></div>
<svg style="position:absolute;left:786.0px;top:394.0px;" width="2035" height="1602" viewBox="0 0 2035 1602"><path d="M-1241.1 185.2 L-16.6 -521.8 L607.0 -161.8 L-617.6 545.2 Z" fill="none" stroke="#7cf000" stroke-width="1.5"/><path d="M-1218.2 194.0 L-16.6 -499.8 L584.0 -153.0 L-617.6 540.8 Z" fill="none" stroke="#ff8c00" stroke-width="1.4"/><path d="M-1169.3 193.8 L-16.6 -471.8 L535.5 -153.0 L-617.2 512.5 Z" fill="none" stroke="#ff8c00" stroke-width="1.4"/><path d="M-1153.2 176.0 L-313.2 -309.0" fill="none" stroke="#6408b4" stroke-width="1.15"/><path d="M-1112.5 199.5 L-272.5 -285.5" fill="none" stroke="#6408b4" stroke-width="1.15"/><path d="M-326.2 -304.5 L-313.2 -312.0 L-289.8 -298.5 L-302.8 -291.0 Z" fill="none" stroke="#ff1010" stroke-width="1.4"/><path d="M-508.1 -210.5 L-477.7 -228.0 L-453.5 -214.0 L-483.8 -196.5 Z" fill="none" stroke="#ff1010" stroke-width="1.4"/><path d="M-467.4 -187.0 L-437.0 -204.5 L-412.8 -190.5 L-443.1 -173.0 Z" fill="none" stroke="#ff1010" stroke-width="1.4"/><path d="M-858.8 -8.0 L-828.5 -25.5 L-804.2 -11.5 L-834.5 6.0 Z" fill="none" stroke="#ff1010" stroke-width="1.4"/><ellipse cx="-348.3" cy="-265.2" rx="3.2" ry="2" fill="none" stroke="#20c0c0" stroke-width="1.2"/><ellipse cx="-410.6" cy="-229.2" rx="3.2" ry="2" fill="none" stroke="#ff00ff" stroke-width="1.2"/><ellipse cx="-514.6" cy="-169.2" rx="3.2" ry="2" fill="none" stroke="#20c0c0" stroke-width="1.2"/><ellipse cx="-761.4" cy="-26.8" rx="3.2" ry="2" fill="none" stroke="#20c0c0" stroke-width="1.2"/><ellipse cx="-865.3" cy="33.2" rx="3.2" ry="2" fill="none" stroke="#20c0c0" stroke-width="1.2"/><path d="M-1098.3 207.7 L-258.3 -277.3" fill="none" stroke="#6408b4" stroke-width="1.15"/><path d="M-1057.6 231.2 L-217.6 -253.8" fill="none" stroke="#6408b4" stroke-width="1.15"/><path d="M-248.8 -259.8 L-235.8 -267.3 L-212.4 -253.8 L-225.4 -246.3 Z" fill="none" stroke="#ff1010" stroke-width="1.4"/><path d="M-453.1 -178.8 L-422.8 -196.3 L-398.6 -182.3 L-428.9 -164.8 Z" fill="none" stroke="#ff1010" stroke-width="1.4"/><path d="M-803.9 23.7 L-773.6 6.2 L-749.3 20.2 L-779.6 37.7 Z" fill="none" stroke="#ff1010" stroke-width="1.4"/><ellipse cx="-293.4" cy="-233.5" rx="3.2" ry="2" fill="none" stroke="#20c0c0" stroke-width="1.2"/><ellipse cx="-355.7" cy="-197.5" rx="3.2" ry="2" fill="none" stroke="#20c0c0" stroke-width="1.2"/><ellipse cx="-459.6" cy="-137.5" rx="3.2" ry="2" fill="none" stroke="#ff00ff" stroke-width="1.2"/><ellipse cx="-706.5" cy="5.0" rx="3.2" ry="2" fill="none" stroke="#20c0c0" stroke-width="1.2"/><ellipse cx="-810.4" cy="65.0" rx="3.2" ry="2" fill="none" stroke="#ff00ff" stroke-width="1.2"/><path d="M-1043.4 239.4 L-31.0 -345.1" fill="none" stroke="#6408b4" stroke-width="1.15"/><path d="M-1002.7 262.9 L9.7 -321.6" fill="none" stroke="#6408b4" stroke-width="1.15"/><path d="M-21.5 -327.6 L-8.5 -335.1 L14.9 -321.6 L1.9 -314.1 Z" fill="none" stroke="#ff1010" stroke-width="1.4"/><path d="M-398.2 -147.1 L-367.9 -164.6 L-343.7 -150.6 L-374.0 -133.1 Z" fill="none" stroke="#ff1010" stroke-width="1.4"/><path d="M-749.0 55.4 L-718.7 37.9 L-694.4 51.9 L-724.7 69.4 Z" fill="none" stroke="#ff1010" stroke-width="1.4"/><path d="M-708.3 78.9 L-678.0 61.4 L-653.7 75.4 L-684.0 92.9 Z" fill="none" stroke="#ff1010" stroke-width="1.4"/><ellipse cx="-66.1" cy="-301.4" rx="3.2" ry="2" fill="none" stroke="#ff00ff" stroke-width="1.2"/><ellipse cx="-300.8" cy="-165.9" rx="3.2" ry="2" fill="none" stroke="#ff00ff" stroke-width="1.2"/><ellipse cx="-404.7" cy="-105.9" rx="3.2" ry="2" fill="none" stroke="#20c0c0" stroke-width="1.2"/><ellipse cx="-651.6" cy="36.6" rx="3.2" ry="2" fill="none" stroke="#20c0c0" stroke-width="1.2"/><ellipse cx="-755.5" cy="96.6" rx="3.2" ry="2" fill="none" stroke="#20c0c0" stroke-width="1.2"/><path d="M-988.5 271.1 L23.9 -313.4" fill="none" stroke="#6408b4" stroke-width="1.15"/><path d="M-947.8 294.6 L64.6 -289.9" fill="none" stroke="#6408b4" stroke-width="1.15"/><path d="M10.9 -308.9 L23.9 -316.4 L47.2 -302.9 L34.2 -295.4 Z" fill="none" stroke="#ff1010" stroke-width="1.4"/><path d="M-343.3 -115.4 L-313.0 -132.9 L-288.8 -118.9 L-319.1 -101.4 Z" fill="none" stroke="#ff1010" stroke-width="1.4"/><path d="M-302.6 -91.9 L-272.3 -109.4 L-248.1 -95.4 L-278.4 -77.9 Z" fill="none" stroke="#ff1010" stroke-width="1.4"/><path d="M-694.1 87.1 L-663.8 69.6 L-639.5 83.6 L-669.8 101.1 Z" fill="none" stroke="#ff1010" stroke-width="1.4"/><ellipse cx="-11.2" cy="-269.6" rx="3.2" ry="2" fill="none" stroke="#20c0c0" stroke-width="1.2"/><ellipse cx="-245.9" cy="-134.1" rx="3.2" ry="2" fill="none" stroke="#20c0c0" stroke-width="1.2"/><ellipse cx="-349.8" cy="-74.1" rx="3.2" ry="2" fill="none" stroke="#ff00ff" stroke-width="1.2"/><ellipse cx="-596.6" cy="68.4" rx="3.2" ry="2" fill="none" stroke="#20c0c0" stroke-width="1.2"/><ellipse cx="-700.6" cy="128.4" rx="3.2" ry="2" fill="none" stroke="#20c0c0" stroke-width="1.2"/><path d="M-933.6 302.8 L78.8 -281.7" fill="none" stroke="#6408b4" stroke-width="1.15"/><path d="M-892.9 326.3 L119.5 -258.2" fill="none" stroke="#6408b4" stroke-width="1.15"/><path d="M88.3 -264.2 L101.3 -271.7 L124.7 -258.2 L111.7 -250.7 Z" fill="none" stroke="#ff1010" stroke-width="1.4"/><path d="M-288.4 -83.7 L-258.1 -101.2 L-233.9 -87.2 L-264.2 -69.7 Z" fill="none" stroke="#ff1010" stroke-width="1.4"/><path d="M-639.2 118.8 L-608.9 101.3 L-584.6 115.3 L-614.9 132.8 Z" fill="none" stroke="#ff1010" stroke-width="1.4"/><ellipse cx="43.7" cy="-238.0" rx="3.2" ry="2" fill="none" stroke="#20c0c0" stroke-width="1.2"/><ellipse cx="-191.0" cy="-102.5" rx="3.2" ry="2" fill="none" stroke="#ff00ff" stroke-width="1.2"/><ellipse cx="-294.9" cy="-42.5" rx="3.2" ry="2" fill="none" stroke="#20c0c0" stroke-width="1.2"/><ellipse cx="-541.7" cy="100.0" rx="3.2" ry="2" fill="none" stroke="#20c0c0" stroke-width="1.2"/><ellipse cx="-645.7" cy="160.0" rx="3.2" ry="2" fill="none" stroke="#ff00ff" stroke-width="1.2"/><path d="M-878.7 334.5 L133.7 -250.0" fill="none" stroke="#6408b4" stroke-width="1.15"/><path d="M-838.0 358.0 L174.4 -226.5" fill="none" stroke="#6408b4" stroke-width="1.15"/><path d="M120.7 -245.5 L133.7 -253.0 L157.1 -239.5 L144.1 -232.0 Z" fill="none" stroke="#ff1010" stroke-width="1.4"/><path d="M-233.5 -52.0 L-203.2 -69.5 L-179.0 -55.5 L-209.3 -38.0 Z" fill="none" stroke="#ff1010" stroke-width="1.4"/><path d="M-584.3 150.5 L-554.0 133.0 L-529.7 147.0 L-560.0 164.5 Z" fill="none" stroke="#ff1010" stroke-width="1.4"/><path d="M-543.6 174.0 L-513.3 156.5 L-489.0 170.5 L-519.3 188.0 Z" fill="none" stroke="#ff1010" stroke-width="1.4"/><ellipse cx="98.6" cy="-206.2" rx="3.2" ry="2" fill="none" stroke="#ff00ff" stroke-width="1.2"/><ellipse cx="-136.1" cy="-70.8" rx="3.2" ry="2" fill="none" stroke="#20c0c0" stroke-width="1.2"/><ellipse cx="-240.0" cy="-10.8" rx="3.2" ry="2" fill="none" stroke="#ff00ff" stroke-width="1.2"/><ellipse cx="-486.8" cy="131.8" rx="3.2" ry="2" fill="none" stroke="#20c0c0" stroke-width="1.2"/><ellipse cx="-590.8" cy="191.8" rx="3.2" ry="2" fill="none" stroke="#20c0c0" stroke-width="1.2"/><path d="M-823.8 366.2 L188.6 -218.3" fill="none" stroke="#6408b4" stroke-width="1.15"/><path d="M-783.1 389.7 L229.3 -194.8" fill="none" stroke="#6408b4" stroke-width="1.15"/><path d="M198.1 -200.8 L211.1 -208.3 L234.5 -194.8 L221.5 -187.3 Z" fill="none" stroke="#ff1010" stroke-width="1.4"/><path d="M-178.6 -20.3 L-148.3 -37.8 L-124.1 -23.8 L-154.4 -6.3 Z" fill="none" stroke="#ff1010" stroke-width="1.4"/><path d="M-137.9 3.2 L-107.6 -14.3 L-83.4 -0.3 L-113.7 17.2 Z" fill="none" stroke="#ff1010" stroke-width="1.4"/><path d="M-529.4 182.2 L-499.0 164.7 L-474.8 178.7 L-505.1 196.2 Z" fill="none" stroke="#ff1010" stroke-width="1.4"/><ellipse cx="153.5" cy="-174.5" rx="3.2" ry="2" fill="none" stroke="#20c0c0" stroke-width="1.2"/><ellipse cx="-81.2" cy="-39.0" rx="3.2" ry="2" fill="none" stroke="#ff00ff" stroke-width="1.2"/><ellipse cx="-185.1" cy="21.0" rx="3.2" ry="2" fill="none" stroke="#20c0c0" stroke-width="1.2"/><ellipse cx="-431.9" cy="163.5" rx="3.2" ry="2" fill="none" stroke="#20c0c0" stroke-width="1.2"/><ellipse cx="-535.9" cy="223.5" rx="3.2" ry="2" fill="none" stroke="#20c0c0" stroke-width="1.2"/><path d="M-768.9 397.9 L243.5 -186.6" fill="none" stroke="#6408b4" stroke-width="1.15"/><path d="M-728.2 421.4 L284.2 -163.1" fill="none" stroke="#6408b4" stroke-width="1.15"/><path d="M253.0 -169.1 L266.0 -176.6 L289.4 -163.1 L276.4 -155.6 Z" fill="none" stroke="#ff1010" stroke-width="1.4"/><path d="M-123.7 11.4 L-93.4 -6.1 L-69.2 7.9 L-99.5 25.4 Z" fill="none" stroke="#ff1010" stroke-width="1.4"/><path d="M-474.5 213.9 L-444.1 196.4 L-419.9 210.4 L-450.2 227.9 Z" fill="none" stroke="#ff1010" stroke-width="1.4"/><ellipse cx="208.4" cy="-142.9" rx="3.2" ry="2" fill="none" stroke="#20c0c0" stroke-width="1.2"/><ellipse cx="-26.3" cy="-7.4" rx="3.2" ry="2" fill="none" stroke="#20c0c0" stroke-width="1.2"/><ellipse cx="-130.2" cy="52.6" rx="3.2" ry="2" fill="none" stroke="#ff00ff" stroke-width="1.2"/><ellipse cx="-377.0" cy="195.1" rx="3.2" ry="2" fill="none" stroke="#20c0c0" stroke-width="1.2"/><ellipse cx="-480.9" cy="255.1" rx="3.2" ry="2" fill="none" stroke="#ff00ff" stroke-width="1.2"/><path d="M-714.0 429.6 L298.4 -154.9" fill="none" stroke="#6408b4" stroke-width="1.15"/><path d="M-673.3 453.1 L339.1 -131.4" fill="none" stroke="#6408b4" stroke-width="1.15"/><path d="M285.4 -150.4 L298.4 -157.9 L321.8 -144.4 L308.8 -136.9 Z" fill="none" stroke="#ff1010" stroke-width="1.4"/><path d="M-68.8 43.1 L-38.5 25.6 L-14.2 39.6 L-44.6 57.1 Z" fill="none" stroke="#ff1010" stroke-width="1.4"/><path d="M-419.5 245.6 L-389.2 228.1 L-365.0 242.1 L-395.3 259.6 Z" fill="none" stroke="#ff1010" stroke-width="1.4"/><path d="M-378.8 269.1 L-348.5 251.6 L-324.3 265.6 L-354.6 283.1 Z" fill="none" stroke="#ff1010" stroke-width="1.4"/><ellipse cx="263.3" cy="-111.1" rx="3.2" ry="2" fill="none" stroke="#ff00ff" stroke-width="1.2"/><ellipse cx="28.6" cy="24.4" rx="3.2" ry="2" fill="none" stroke="#ff00ff" stroke-width="1.2"/><ellipse cx="-75.3" cy="84.4" rx="3.2" ry="2" fill="none" stroke="#20c0c0" stroke-width="1.2"/><ellipse cx="-322.1" cy="226.9" rx="3.2" ry="2" fill="none" stroke="#20c0c0" stroke-width="1.2"/><ellipse cx="-426.0" cy="286.9" rx="3.2" ry="2" fill="none" stroke="#20c0c0" stroke-width="1.2"/><path d="M-659.1 461.3 L353.3 -123.2" fill="none" stroke="#6408b4" stroke-width="1.15"/><path d="M-618.4 484.8 L394.0 -99.7" fill="none" stroke="#6408b4" stroke-width="1.15"/><path d="M362.8 -105.7 L375.8 -113.2 L399.2 -99.7 L386.2 -92.2 Z" fill="none" stroke="#ff1010" stroke-width="1.4"/><path d="M-13.9 74.8 L16.4 57.3 L40.7 71.3 L10.3 88.8 Z" fill="none" stroke="#ff1010" stroke-width="1.4"/><path d="M26.8 98.3 L57.1 80.8 L81.4 94.8 L51.1 112.3 Z" fill="none" stroke="#ff1010" stroke-width="1.4"/><path d="M-364.6 277.3 L-334.3 259.8 L-310.1 273.8 L-340.4 291.3 Z" fill="none" stroke="#ff1010" stroke-width="1.4"/><ellipse cx="318.2" cy="-79.4" rx="3.2" ry="2" fill="none" stroke="#20c0c0" stroke-width="1.2"/><ellipse cx="83.5" cy="56.1" rx="3.2" ry="2" fill="none" stroke="#20c0c0" stroke-width="1.2"/><ellipse cx="-20.4" cy="116.1" rx="3.2" ry="2" fill="none" stroke="#ff00ff" stroke-width="1.2"/><ellipse cx="-267.2" cy="258.5" rx="3.2" ry="2" fill="none" stroke="#20c0c0" stroke-width="1.2"/><ellipse cx="-371.1" cy="318.5" rx="3.2" ry="2" fill="none" stroke="#20c0c0" stroke-width="1.2"/><path d="M-313.2 -309.0 L-217.6 -253.8" fill="none" stroke="#6408b4" stroke-width="1.3"/><path d="M-31.0 -345.1 L119.5 -258.2" fill="none" stroke="#6408b4" stroke-width="1.3"/><path d="M133.7 -250.0 L284.2 -163.1" fill="none" stroke="#6408b4" stroke-width="1.3"/><path d="M298.4 -154.9 L394.0 -99.7" fill="none" stroke="#6408b4" stroke-width="1.3"/><path d="M-540.1 590.0 L684.5 -117.0 L1308.0 243.0 L83.4 950.0 Z" fill="none" stroke="#7cf000" stroke-width="1.5"/><path d="M-517.1 598.8 L684.5 -95.0 L1285.1 251.8 L83.4 945.5 Z" fill="none" stroke="#ff8c00" stroke-width="1.4"/><path d="M-468.2 598.5 L684.5 -67.0 L1236.6 251.8 L83.9 917.2 Z" fill="none" stroke="#ff8c00" stroke-width="1.4"/><path d="M-452.2 580.8 L387.8 95.8" fill="none" stroke="#6408b4" stroke-width="1.15"/><path d="M-411.5 604.2 L428.6 119.2" fill="none" stroke="#6408b4" stroke-width="1.15"/><path d="M374.9 100.2 L387.8 92.8 L411.2 106.2 L398.2 113.8 Z" fill="none" stroke="#ff1010" stroke-width="1.4"/><path d="M193.0 194.2 L223.3 176.8 L247.6 190.8 L217.2 208.2 Z" fill="none" stroke="#ff1010" stroke-width="1.4"/><path d="M233.7 217.8 L264.0 200.2 L288.3 214.2 L257.9 231.8 Z" fill="none" stroke="#ff1010" stroke-width="1.4"/><path d="M-157.7 396.8 L-127.4 379.2 L-103.2 393.2 L-133.5 410.8 Z" fill="none" stroke="#ff1010" stroke-width="1.4"/><ellipse cx="352.8" cy="139.5" rx="3.2" ry="2" fill="none" stroke="#20c0c0" stroke-width="1.2"/><ellipse cx="290.4" cy="175.5" rx="3.2" ry="2" fill="none" stroke="#ff00ff" stroke-width="1.2"/><ellipse cx="186.5" cy="235.5" rx="3.2" ry="2" fill="none" stroke="#20c0c0" stroke-width="1.2"/><ellipse cx="-60.3" cy="378.0" rx="3.2" ry="2" fill="none" stroke="#20c0c0" stroke-width="1.2"/><ellipse cx="-164.2" cy="438.0" rx="3.2" ry="2" fill="none" stroke="#20c0c0" stroke-width="1.2"/><path d="M-397.3 612.5 L442.8 127.5" fill="none" stroke="#6408b4" stroke-width="1.15"/><path d="M-356.6 636.0 L483.5 151.0" fill="none" stroke="#6408b4" stroke-width="1.15"/><path d="M452.3 145.0 L465.3 137.5 L488.7 151.0 L475.7 158.5 Z" fill="none" stroke="#ff1010" stroke-width="1.4"/><path d="M247.9 226.0 L278.2 208.5 L302.5 222.5 L272.1 240.0 Z" fill="none" stroke="#ff1010" stroke-width="1.4"/><path d="M-102.8 428.5 L-72.5 411.0 L-48.3 425.0 L-78.6 442.5 Z" fill="none" stroke="#ff1010" stroke-width="1.4"/><ellipse cx="407.7" cy="171.2" rx="3.2" ry="2" fill="none" stroke="#20c0c0" stroke-width="1.2"/><ellipse cx="345.3" cy="207.2" rx="3.2" ry="2" fill="none" stroke="#20c0c0" stroke-width="1.2"/><ellipse cx="241.4" cy="267.2" rx="3.2" ry="2" fill="none" stroke="#ff00ff" stroke-width="1.2"/><ellipse cx="-5.4" cy="409.7" rx="3.2" ry="2" fill="none" stroke="#20c0c0" stroke-width="1.2"/><ellipse cx="-109.3" cy="469.7" rx="3.2" ry="2" fill="none" stroke="#ff00ff" stroke-width="1.2"/><path d="M-342.4 644.2 L670.0 59.6" fill="none" stroke="#6408b4" stroke-width="1.15"/><path d="M-301.7 667.7 L710.7 83.1" fill="none" stroke="#6408b4" stroke-width="1.15"/><path d="M679.5 77.1 L692.5 69.6 L715.9 83.1 L702.9 90.6 Z" fill="none" stroke="#ff1010" stroke-width="1.4"/><path d="M302.8 257.6 L333.1 240.1 L357.4 254.1 L327.1 271.6 Z" fill="none" stroke="#ff1010" stroke-width="1.4"/><path d="M-47.9 460.1 L-17.6 442.6 L6.6 456.6 L-23.7 474.1 Z" fill="none" stroke="#ff1010" stroke-width="1.4"/><path d="M-7.2 483.6 L23.1 466.1 L47.3 480.1 L17.0 497.6 Z" fill="none" stroke="#ff1010" stroke-width="1.4"/><ellipse cx="634.9" cy="103.4" rx="3.2" ry="2" fill="none" stroke="#ff00ff" stroke-width="1.2"/><ellipse cx="400.2" cy="238.9" rx="3.2" ry="2" fill="none" stroke="#ff00ff" stroke-width="1.2"/><ellipse cx="296.3" cy="298.9" rx="3.2" ry="2" fill="none" stroke="#20c0c0" stroke-width="1.2"/><ellipse cx="49.5" cy="441.4" rx="3.2" ry="2" fill="none" stroke="#20c0c0" stroke-width="1.2"/><ellipse cx="-54.4" cy="501.4" rx="3.2" ry="2" fill="none" stroke="#20c0c0" stroke-width="1.2"/><path d="M-287.5 675.8 L724.9 91.4" fill="none" stroke="#6408b4" stroke-width="1.15"/><path d="M-246.8 699.3 L765.6 114.9" fill="none" stroke="#6408b4" stroke-width="1.15"/><path d="M711.9 95.9 L724.9 88.4 L748.3 101.9 L735.3 109.4 Z" fill="none" stroke="#ff1010" stroke-width="1.4"/><path d="M357.7 289.4 L388.0 271.9 L412.3 285.9 L382.0 303.4 Z" fill="none" stroke="#ff1010" stroke-width="1.4"/><path d="M398.4 312.9 L428.7 295.4 L453.0 309.4 L422.7 326.9 Z" fill="none" stroke="#ff1010" stroke-width="1.4"/><path d="M7.0 491.9 L37.3 474.4 L61.5 488.4 L31.2 505.9 Z" fill="none" stroke="#ff1010" stroke-width="1.4"/><ellipse cx="689.8" cy="135.1" rx="3.2" ry="2" fill="none" stroke="#20c0c0" stroke-width="1.2"/><ellipse cx="455.1" cy="270.6" rx="3.2" ry="2" fill="none" stroke="#20c0c0" stroke-width="1.2"/><ellipse cx="351.2" cy="330.6" rx="3.2" ry="2" fill="none" stroke="#ff00ff" stroke-width="1.2"/><ellipse cx="104.4" cy="473.1" rx="3.2" ry="2" fill="none" stroke="#20c0c0" stroke-width="1.2"/><ellipse cx="0.5" cy="533.1" rx="3.2" ry="2" fill="none" stroke="#20c0c0" stroke-width="1.2"/><path d="M-232.6 707.5 L779.8 123.0" fill="none" stroke="#6408b4" stroke-width="1.15"/><path d="M-191.9 731.0 L820.5 146.5" fill="none" stroke="#6408b4" stroke-width="1.15"/><path d="M789.3 140.5 L802.3 133.0 L825.7 146.5 L812.7 154.0 Z" fill="none" stroke="#ff1010" stroke-width="1.4"/><path d="M412.6 321.0 L442.9 303.5 L467.2 317.5 L436.9 335.0 Z" fill="none" stroke="#ff1010" stroke-width="1.4"/><path d="M61.9 523.5 L92.2 506.0 L116.4 520.0 L86.1 537.5 Z" fill="none" stroke="#ff1010" stroke-width="1.4"/><ellipse cx="744.7" cy="166.8" rx="3.2" ry="2" fill="none" stroke="#20c0c0" stroke-width="1.2"/><ellipse cx="510.0" cy="302.3" rx="3.2" ry="2" fill="none" stroke="#ff00ff" stroke-width="1.2"/><ellipse cx="406.1" cy="362.3" rx="3.2" ry="2" fill="none" stroke="#20c0c0" stroke-width="1.2"/><ellipse cx="159.3" cy="504.8" rx="3.2" ry="2" fill="none" stroke="#20c0c0" stroke-width="1.2"/><ellipse cx="55.4" cy="564.8" rx="3.2" ry="2" fill="none" stroke="#ff00ff" stroke-width="1.2"/><path d="M-177.7 739.2 L834.7 154.8" fill="none" stroke="#6408b4" stroke-width="1.15"/><path d="M-137.0 762.8 L875.4 178.2" fill="none" stroke="#6408b4" stroke-width="1.15"/><path d="M821.7 159.2 L834.7 151.8 L858.1 165.2 L845.1 172.8 Z" fill="none" stroke="#ff1010" stroke-width="1.4"/><path d="M467.5 352.8 L497.8 335.2 L522.1 349.2 L491.8 366.8 Z" fill="none" stroke="#ff1010" stroke-width="1.4"/><path d="M116.8 555.2 L147.1 537.8 L171.3 551.8 L141.0 569.2 Z" fill="none" stroke="#ff1010" stroke-width="1.4"/><path d="M157.5 578.8 L187.8 561.2 L212.0 575.2 L181.7 592.8 Z" fill="none" stroke="#ff1010" stroke-width="1.4"/><ellipse cx="799.6" cy="198.5" rx="3.2" ry="2" fill="none" stroke="#ff00ff" stroke-width="1.2"/><ellipse cx="565.0" cy="334.0" rx="3.2" ry="2" fill="none" stroke="#20c0c0" stroke-width="1.2"/><ellipse cx="461.0" cy="394.0" rx="3.2" ry="2" fill="none" stroke="#ff00ff" stroke-width="1.2"/><ellipse cx="214.2" cy="536.5" rx="3.2" ry="2" fill="none" stroke="#20c0c0" stroke-width="1.2"/><ellipse cx="110.3" cy="596.5" rx="3.2" ry="2" fill="none" stroke="#20c0c0" stroke-width="1.2"/><path d="M-122.8 771.0 L889.6 186.5" fill="none" stroke="#6408b4" stroke-width="1.15"/><path d="M-82.1 794.5 L930.3 210.0" fill="none" stroke="#6408b4" stroke-width="1.15"/><path d="M899.1 204.0 L912.1 196.5 L935.5 210.0 L922.5 217.5 Z" fill="none" stroke="#ff1010" stroke-width="1.4"/><path d="M522.4 384.5 L552.7 367.0 L577.0 381.0 L546.7 398.5 Z" fill="none" stroke="#ff1010" stroke-width="1.4"/><path d="M563.1 408.0 L593.4 390.5 L617.7 404.5 L587.4 422.0 Z" fill="none" stroke="#ff1010" stroke-width="1.4"/><path d="M171.7 587.0 L202.0 569.5 L226.2 583.5 L195.9 601.0 Z" fill="none" stroke="#ff1010" stroke-width="1.4"/><ellipse cx="854.5" cy="230.2" rx="3.2" ry="2" fill="none" stroke="#20c0c0" stroke-width="1.2"/><ellipse cx="619.9" cy="365.7" rx="3.2" ry="2" fill="none" stroke="#ff00ff" stroke-width="1.2"/><ellipse cx="515.9" cy="425.7" rx="3.2" ry="2" fill="none" stroke="#20c0c0" stroke-width="1.2"/><ellipse cx="269.1" cy="568.2" rx="3.2" ry="2" fill="none" stroke="#20c0c0" stroke-width="1.2"/><ellipse cx="165.2" cy="628.2" rx="3.2" ry="2" fill="none" stroke="#20c0c0" stroke-width="1.2"/><path d="M-67.9 802.7 L944.5 218.1" fill="none" stroke="#6408b4" stroke-width="1.15"/><path d="M-27.2 826.2 L985.2 241.6" fill="none" stroke="#6408b4" stroke-width="1.15"/><path d="M954.1 235.6 L967.0 228.1 L990.4 241.6 L977.4 249.1 Z" fill="none" stroke="#ff1010" stroke-width="1.4"/><path d="M577.3 416.1 L607.6 398.6 L631.9 412.6 L601.6 430.1 Z" fill="none" stroke="#ff1010" stroke-width="1.4"/><path d="M226.6 618.6 L256.9 601.1 L281.2 615.1 L250.8 632.7 Z" fill="none" stroke="#ff1010" stroke-width="1.4"/><ellipse cx="909.5" cy="261.9" rx="3.2" ry="2" fill="none" stroke="#20c0c0" stroke-width="1.2"/><ellipse cx="674.8" cy="397.4" rx="3.2" ry="2" fill="none" stroke="#20c0c0" stroke-width="1.2"/><ellipse cx="570.8" cy="457.4" rx="3.2" ry="2" fill="none" stroke="#ff00ff" stroke-width="1.2"/><ellipse cx="324.0" cy="599.9" rx="3.2" ry="2" fill="none" stroke="#20c0c0" stroke-width="1.2"/><ellipse cx="220.1" cy="659.9" rx="3.2" ry="2" fill="none" stroke="#ff00ff" stroke-width="1.2"/><path d="M-12.9 834.3 L999.4 249.9" fill="none" stroke="#6408b4" stroke-width="1.15"/><path d="M27.8 857.8 L1040.1 273.4" fill="none" stroke="#6408b4" stroke-width="1.15"/><path d="M986.4 254.4 L999.4 246.9 L1022.8 260.4 L1009.8 267.9 Z" fill="none" stroke="#ff1010" stroke-width="1.4"/><path d="M632.2 447.9 L662.6 430.4 L686.8 444.4 L656.5 461.9 Z" fill="none" stroke="#ff1010" stroke-width="1.4"/><path d="M281.5 650.3 L311.8 632.8 L336.1 646.8 L305.7 664.3 Z" fill="none" stroke="#ff1010" stroke-width="1.4"/><path d="M322.2 673.8 L352.5 656.3 L376.8 670.3 L346.5 687.8 Z" fill="none" stroke="#ff1010" stroke-width="1.4"/><ellipse cx="964.4" cy="293.6" rx="3.2" ry="2" fill="none" stroke="#ff00ff" stroke-width="1.2"/><ellipse cx="729.7" cy="429.1" rx="3.2" ry="2" fill="none" stroke="#ff00ff" stroke-width="1.2"/><ellipse cx="625.7" cy="489.1" rx="3.2" ry="2" fill="none" stroke="#20c0c0" stroke-width="1.2"/><ellipse cx="378.9" cy="631.6" rx="3.2" ry="2" fill="none" stroke="#20c0c0" stroke-width="1.2"/><ellipse cx="275.0" cy="691.6" rx="3.2" ry="2" fill="none" stroke="#20c0c0" stroke-width="1.2"/><path d="M42.0 866.0 L1054.3 281.5" fill="none" stroke="#6408b4" stroke-width="1.15"/><path d="M82.7 889.5 L1095.0 305.0" fill="none" stroke="#6408b4" stroke-width="1.15"/><path d="M1063.9 299.0 L1076.9 291.5 L1100.2 305.0 L1087.3 312.5 Z" fill="none" stroke="#ff1010" stroke-width="1.4"/><path d="M687.1 479.5 L717.5 462.0 L741.7 476.0 L711.4 493.5 Z" fill="none" stroke="#ff1010" stroke-width="1.4"/><path d="M727.8 503.0 L758.2 485.5 L782.4 499.5 L752.1 517.0 Z" fill="none" stroke="#ff1010" stroke-width="1.4"/><path d="M336.4 682.0 L366.7 664.5 L391.0 678.5 L360.7 696.0 Z" fill="none" stroke="#ff1010" stroke-width="1.4"/><ellipse cx="1019.3" cy="325.3" rx="3.2" ry="2" fill="none" stroke="#20c0c0" stroke-width="1.2"/><ellipse cx="784.6" cy="460.8" rx="3.2" ry="2" fill="none" stroke="#20c0c0" stroke-width="1.2"/><ellipse cx="680.7" cy="520.8" rx="3.2" ry="2" fill="none" stroke="#ff00ff" stroke-width="1.2"/><ellipse cx="433.8" cy="663.3" rx="3.2" ry="2" fill="none" stroke="#20c0c0" stroke-width="1.2"/><ellipse cx="329.9" cy="723.3" rx="3.2" ry="2" fill="none" stroke="#20c0c0" stroke-width="1.2"/><path d="M387.8 95.8 L483.5 151.0" fill="none" stroke="#6408b4" stroke-width="1.3"/><path d="M670.0 59.6 L820.5 146.5" fill="none" stroke="#6408b4" stroke-width="1.3"/><path d="M834.7 154.8 L985.2 241.6" fill="none" stroke="#6408b4" stroke-width="1.3"/><path d="M999.4 249.9 L1095.0 305.0" fill="none" stroke="#6408b4" stroke-width="1.3"/><path d="M160.9 994.8 L1385.5 287.8 L2009.0 647.8 L784.5 1354.8 Z" fill="none" stroke="#7cf000" stroke-width="1.5"/><path d="M183.9 1003.5 L1385.5 309.8 L1986.1 656.5 L784.5 1350.2 Z" fill="none" stroke="#ff8c00" stroke-width="1.4"/><path d="M232.8 1003.2 L1385.5 337.8 L1937.6 656.5 L784.9 1322.0 Z" fill="none" stroke="#ff8c00" stroke-width="1.4"/><path d="M258.8 991.2 L1271.2 406.8" fill="none" stroke="#6408b4" stroke-width="1.15"/><path d="M299.5 1014.8 L1311.9 430.2" fill="none" stroke="#6408b4" stroke-width="1.15"/><path d="M1271.2 406.8 L1311.9 430.2" fill="none" stroke="#6408b4" stroke-width="1.15"/><path d="M1258.2 411.2 L1271.2 403.8 L1294.6 417.2 L1281.6 424.8 Z" fill="none" stroke="#ffb400" stroke-width="1.4"/><path d="M904.0 604.8 L934.3 587.2 L958.6 601.2 L928.2 618.8 Z" fill="none" stroke="#ffb400" stroke-width="1.4"/><path d="M944.7 628.2 L975.0 610.8 L999.3 624.8 L969.0 642.2 Z" fill="none" stroke="#ffb400" stroke-width="1.4"/><path d="M553.3 807.2 L583.6 789.8 L607.8 803.8 L577.5 821.2 Z" fill="none" stroke="#ffb400" stroke-width="1.4"/><ellipse cx="1236.1" cy="450.5" rx="3.2" ry="2" fill="none" stroke="#20c0c0" stroke-width="1.2"/><ellipse cx="1001.4" cy="586.0" rx="3.2" ry="2" fill="none" stroke="#ff00ff" stroke-width="1.2"/><ellipse cx="897.5" cy="646.0" rx="3.2" ry="2" fill="none" stroke="#20c0c0" stroke-width="1.2"/><ellipse cx="650.7" cy="788.5" rx="3.2" ry="2" fill="none" stroke="#20c0c0" stroke-width="1.2"/><ellipse cx="546.8" cy="848.5" rx="3.2" ry="2" fill="none" stroke="#20c0c0" stroke-width="1.2"/><path d="M313.7 1023.0 L1326.1 438.5" fill="none" stroke="#6408b4" stroke-width="1.15"/><path d="M354.4 1046.5 L1366.8 462.0" fill="none" stroke="#6408b4" stroke-width="1.15"/><path d="M1326.1 438.5 L1366.8 462.0" fill="none" stroke="#6408b4" stroke-width="1.15"/><path d="M1335.6 456.0 L1348.6 448.5 L1372.0 462.0 L1359.0 469.5 Z" fill="none" stroke="#ffb400" stroke-width="1.4"/><path d="M958.9 636.5 L989.2 619.0 L1013.5 633.0 L983.2 650.5 Z" fill="none" stroke="#ffb400" stroke-width="1.4"/><path d="M608.2 839.0 L638.5 821.5 L662.7 835.5 L632.4 853.0 Z" fill="none" stroke="#ffb400" stroke-width="1.4"/><ellipse cx="1291.0" cy="482.2" rx="3.2" ry="2" fill="none" stroke="#20c0c0" stroke-width="1.2"/><ellipse cx="1056.3" cy="617.7" rx="3.2" ry="2" fill="none" stroke="#20c0c0" stroke-width="1.2"/><ellipse cx="952.4" cy="677.7" rx="3.2" ry="2" fill="none" stroke="#ff00ff" stroke-width="1.2"/><ellipse cx="705.6" cy="820.2" rx="3.2" ry="2" fill="none" stroke="#20c0c0" stroke-width="1.2"/><ellipse cx="601.7" cy="880.2" rx="3.2" ry="2" fill="none" stroke="#ff00ff" stroke-width="1.2"/><path d="M368.6 1054.7 L1381.0 470.1" fill="none" stroke="#6408b4" stroke-width="1.15"/><path d="M409.3 1078.2 L1421.7 493.6" fill="none" stroke="#6408b4" stroke-width="1.15"/><path d="M1381.0 470.1 L1421.7 493.6" fill="none" stroke="#6408b4" stroke-width="1.15"/><path d="M1390.5 487.6 L1403.5 480.1 L1426.9 493.6 L1413.9 501.1 Z" fill="none" stroke="#ffb400" stroke-width="1.4"/><path d="M1013.8 668.2 L1044.1 650.7 L1068.4 664.7 L1038.1 682.2 Z" fill="none" stroke="#ffb400" stroke-width="1.4"/><path d="M663.1 870.7 L693.4 853.2 L717.6 867.2 L687.3 884.7 Z" fill="none" stroke="#ffb400" stroke-width="1.4"/><path d="M703.8 894.2 L734.1 876.7 L758.3 890.7 L728.0 908.2 Z" fill="none" stroke="#ffb400" stroke-width="1.4"/><ellipse cx="1345.9" cy="513.9" rx="3.2" ry="2" fill="none" stroke="#ff00ff" stroke-width="1.2"/><ellipse cx="1111.2" cy="649.4" rx="3.2" ry="2" fill="none" stroke="#ff00ff" stroke-width="1.2"/><ellipse cx="1007.3" cy="709.4" rx="3.2" ry="2" fill="none" stroke="#20c0c0" stroke-width="1.2"/><ellipse cx="760.5" cy="851.9" rx="3.2" ry="2" fill="none" stroke="#20c0c0" stroke-width="1.2"/><ellipse cx="656.6" cy="911.9" rx="3.2" ry="2" fill="none" stroke="#20c0c0" stroke-width="1.2"/><path d="M423.5 1086.3 L1435.9 501.9" fill="none" stroke="#6408b4" stroke-width="1.15"/><path d="M464.2 1109.8 L1476.6 525.4" fill="none" stroke="#6408b4" stroke-width="1.15"/><path d="M1435.9 501.9 L1476.6 525.4" fill="none" stroke="#6408b4" stroke-width="1.15"/><path d="M1422.9 506.4 L1435.9 498.9 L1459.3 512.4 L1446.3 519.9 Z" fill="none" stroke="#ffb400" stroke-width="1.4"/><path d="M1068.7 699.8 L1099.0 682.3 L1123.3 696.3 L1093.0 713.8 Z" fill="none" stroke="#ffb400" stroke-width="1.4"/><path d="M1109.4 723.3 L1139.7 705.8 L1164.0 719.8 L1133.7 737.3 Z" fill="none" stroke="#ffb400" stroke-width="1.4"/><path d="M718.0 902.3 L748.3 884.8 L772.5 898.8 L742.2 916.3 Z" fill="none" stroke="#ffb400" stroke-width="1.4"/><ellipse cx="1400.8" cy="545.6" rx="3.2" ry="2" fill="none" stroke="#20c0c0" stroke-width="1.2"/><ellipse cx="1166.1" cy="681.1" rx="3.2" ry="2" fill="none" stroke="#20c0c0" stroke-width="1.2"/><ellipse cx="1062.2" cy="741.1" rx="3.2" ry="2" fill="none" stroke="#ff00ff" stroke-width="1.2"/><ellipse cx="815.4" cy="883.6" rx="3.2" ry="2" fill="none" stroke="#20c0c0" stroke-width="1.2"/><ellipse cx="711.5" cy="943.6" rx="3.2" ry="2" fill="none" stroke="#20c0c0" stroke-width="1.2"/><path d="M478.4 1118.0 L1490.8 533.5" fill="none" stroke="#6408b4" stroke-width="1.15"/><path d="M519.1 1141.5 L1531.5 557.0" fill="none" stroke="#6408b4" stroke-width="1.15"/><path d="M1490.8 533.5 L1531.5 557.0" fill="none" stroke="#6408b4" stroke-width="1.15"/><path d="M1500.3 551.0 L1513.3 543.5 L1536.7 557.0 L1523.7 564.5 Z" fill="none" stroke="#ffb400" stroke-width="1.4"/><path d="M1123.6 731.5 L1153.9 714.0 L1178.2 728.0 L1147.9 745.5 Z" fill="none" stroke="#ffb400" stroke-width="1.4"/><path d="M772.9 934.0 L803.2 916.5 L827.4 930.5 L797.1 948.0 Z" fill="none" stroke="#ffb400" stroke-width="1.4"/><ellipse cx="1455.7" cy="577.3" rx="3.2" ry="2" fill="none" stroke="#20c0c0" stroke-width="1.2"/><ellipse cx="1221.1" cy="712.8" rx="3.2" ry="2" fill="none" stroke="#ff00ff" stroke-width="1.2"/><ellipse cx="1117.1" cy="772.8" rx="3.2" ry="2" fill="none" stroke="#20c0c0" stroke-width="1.2"/><ellipse cx="870.3" cy="915.3" rx="3.2" ry="2" fill="none" stroke="#20c0c0" stroke-width="1.2"/><ellipse cx="766.4" cy="975.3" rx="3.2" ry="2" fill="none" stroke="#ff00ff" stroke-width="1.2"/><path d="M533.3 1149.8 L1545.7 565.2" fill="none" stroke="#6408b4" stroke-width="1.15"/><path d="M574.0 1173.2 L1586.4 588.8" fill="none" stroke="#6408b4" stroke-width="1.15"/><path d="M1545.7 565.2 L1586.4 588.8" fill="none" stroke="#6408b4" stroke-width="1.15"/><path d="M1532.7 569.8 L1545.7 562.2 L1569.1 575.8 L1556.1 583.2 Z" fill="none" stroke="#ffb400" stroke-width="1.4"/><path d="M1178.5 763.2 L1208.8 745.8 L1233.1 759.8 L1202.8 777.2 Z" fill="none" stroke="#ffb400" stroke-width="1.4"/><path d="M827.8 965.8 L858.1 948.2 L882.3 962.2 L852.0 979.8 Z" fill="none" stroke="#ffb400" stroke-width="1.4"/><path d="M868.5 989.2 L898.8 971.8 L923.1 985.8 L892.7 1003.2 Z" fill="none" stroke="#ffb400" stroke-width="1.4"/><ellipse cx="1510.6" cy="609.0" rx="3.2" ry="2" fill="none" stroke="#ff00ff" stroke-width="1.2"/><ellipse cx="1276.0" cy="744.5" rx="3.2" ry="2" fill="none" stroke="#20c0c0" stroke-width="1.2"/><ellipse cx="1172.0" cy="804.5" rx="3.2" ry="2" fill="none" stroke="#ff00ff" stroke-width="1.2"/><ellipse cx="925.2" cy="947.0" rx="3.2" ry="2" fill="none" stroke="#20c0c0" stroke-width="1.2"/><ellipse cx="821.3" cy="1007.0" rx="3.2" ry="2" fill="none" stroke="#20c0c0" stroke-width="1.2"/><path d="M588.2 1181.5 L1600.6 597.0" fill="none" stroke="#6408b4" stroke-width="1.15"/><path d="M628.9 1205.0 L1641.3 620.5" fill="none" stroke="#6408b4" stroke-width="1.15"/><path d="M1600.6 597.0 L1641.3 620.5" fill="none" stroke="#6408b4" stroke-width="1.15"/><path d="M1610.2 614.5 L1623.1 607.0 L1646.5 620.5 L1633.5 628.0 Z" fill="none" stroke="#ffb400" stroke-width="1.4"/><path d="M1233.4 795.0 L1263.7 777.5 L1288.0 791.5 L1257.7 809.0 Z" fill="none" stroke="#ffb400" stroke-width="1.4"/><path d="M1274.1 818.5 L1304.4 801.0 L1328.7 815.0 L1298.4 832.5 Z" fill="none" stroke="#ffb400" stroke-width="1.4"/><path d="M882.7 997.5 L913.0 980.0 L937.3 994.0 L906.9 1011.5 Z" fill="none" stroke="#ffb400" stroke-width="1.4"/><ellipse cx="1565.6" cy="640.7" rx="3.2" ry="2" fill="none" stroke="#20c0c0" stroke-width="1.2"/><ellipse cx="1330.9" cy="776.2" rx="3.2" ry="2" fill="none" stroke="#ff00ff" stroke-width="1.2"/><ellipse cx="1226.9" cy="836.2" rx="3.2" ry="2" fill="none" stroke="#20c0c0" stroke-width="1.2"/><ellipse cx="980.1" cy="978.7" rx="3.2" ry="2" fill="none" stroke="#20c0c0" stroke-width="1.2"/><ellipse cx="876.2" cy="1038.7" rx="3.2" ry="2" fill="none" stroke="#20c0c0" stroke-width="1.2"/><path d="M643.2 1213.2 L1655.5 628.6" fill="none" stroke="#6408b4" stroke-width="1.15"/><path d="M683.9 1236.7 L1696.2 652.2" fill="none" stroke="#6408b4" stroke-width="1.15"/><path d="M1655.5 628.6 L1696.2 652.2" fill="none" stroke="#6408b4" stroke-width="1.15"/><path d="M1665.1 646.2 L1678.1 638.7 L1701.4 652.2 L1688.4 659.7 Z" fill="none" stroke="#ffb400" stroke-width="1.4"/><path d="M1288.3 826.7 L1318.7 809.2 L1342.9 823.2 L1312.6 840.7 Z" fill="none" stroke="#ffb400" stroke-width="1.4"/><path d="M937.6 1029.2 L967.9 1011.7 L992.2 1025.7 L961.8 1043.2 Z" fill="none" stroke="#ffb400" stroke-width="1.4"/><ellipse cx="1620.5" cy="672.4" rx="3.2" ry="2" fill="none" stroke="#20c0c0" stroke-width="1.2"/><ellipse cx="1385.8" cy="807.9" rx="3.2" ry="2" fill="none" stroke="#20c0c0" stroke-width="1.2"/><ellipse cx="1281.8" cy="867.9" rx="3.2" ry="2" fill="none" stroke="#ff00ff" stroke-width="1.2"/><ellipse cx="1035.0" cy="1010.4" rx="3.2" ry="2" fill="none" stroke="#20c0c0" stroke-width="1.2"/><ellipse cx="931.1" cy="1070.4" rx="3.2" ry="2" fill="none" stroke="#ff00ff" stroke-width="1.2"/><path d="M698.1 1244.8 L1710.4 660.3" fill="none" stroke="#6408b4" stroke-width="1.15"/><path d="M738.8 1268.3 L1751.1 683.8" fill="none" stroke="#6408b4" stroke-width="1.15"/><path d="M1710.4 660.3 L1751.1 683.8" fill="none" stroke="#6408b4" stroke-width="1.15"/><path d="M1697.5 664.8 L1710.4 657.3 L1733.8 670.8 L1720.8 678.3 Z" fill="none" stroke="#ffb400" stroke-width="1.4"/><path d="M1343.2 858.3 L1373.6 840.8 L1397.8 854.8 L1367.5 872.3 Z" fill="none" stroke="#ffb400" stroke-width="1.4"/><path d="M992.5 1060.8 L1022.8 1043.3 L1047.1 1057.3 L1016.8 1074.8 Z" fill="none" stroke="#ffb400" stroke-width="1.4"/><path d="M1033.2 1084.3 L1063.5 1066.8 L1087.8 1080.8 L1057.5 1098.3 Z" fill="none" stroke="#ffb400" stroke-width="1.4"/><ellipse cx="1675.4" cy="704.1" rx="3.2" ry="2" fill="none" stroke="#ff00ff" stroke-width="1.2"/><ellipse cx="1440.7" cy="839.6" rx="3.2" ry="2" fill="none" stroke="#ff00ff" stroke-width="1.2"/><ellipse cx="1336.8" cy="899.6" rx="3.2" ry="2" fill="none" stroke="#20c0c0" stroke-width="1.2"/><ellipse cx="1089.9" cy="1042.1" rx="3.2" ry="2" fill="none" stroke="#20c0c0" stroke-width="1.2"/><ellipse cx="986.0" cy="1102.1" rx="3.2" ry="2" fill="none" stroke="#20c0c0" stroke-width="1.2"/><path d="M753.0 1276.5 L1765.3 692.0" fill="none" stroke="#6408b4" stroke-width="1.15"/><path d="M793.7 1300.0 L1806.1 715.5" fill="none" stroke="#6408b4" stroke-width="1.15"/><path d="M1765.3 692.0 L1806.1 715.5" fill="none" stroke="#6408b4" stroke-width="1.15"/><path d="M1774.9 709.5 L1787.9 702.0 L1811.2 715.5 L1798.3 723.0 Z" fill="none" stroke="#ffb400" stroke-width="1.4"/><path d="M1398.2 890.0 L1428.5 872.5 L1452.7 886.5 L1422.4 904.0 Z" fill="none" stroke="#ffb400" stroke-width="1.4"/><path d="M1438.9 913.5 L1469.2 896.0 L1493.4 910.0 L1463.1 927.5 Z" fill="none" stroke="#ffb400" stroke-width="1.4"/><path d="M1047.4 1092.5 L1077.7 1075.0 L1102.0 1089.0 L1071.7 1106.5 Z" fill="none" stroke="#ffb400" stroke-width="1.4"/><ellipse cx="1730.3" cy="735.8" rx="3.2" ry="2" fill="none" stroke="#20c0c0" stroke-width="1.2"/><ellipse cx="1495.6" cy="871.3" rx="3.2" ry="2" fill="none" stroke="#20c0c0" stroke-width="1.2"/><ellipse cx="1391.7" cy="931.3" rx="3.2" ry="2" fill="none" stroke="#ff00ff" stroke-width="1.2"/><ellipse cx="1144.8" cy="1073.8" rx="3.2" ry="2" fill="none" stroke="#20c0c0" stroke-width="1.2"/><ellipse cx="1040.9" cy="1133.8" rx="3.2" ry="2" fill="none" stroke="#20c0c0" stroke-width="1.2"/><path d="M856.4 1396.2 L2080.9 689.2 L2704.5 1049.2 L1479.9 1756.2 Z" fill="none" stroke="#7cf000" stroke-width="1.5"/><path d="M879.3 1405.0 L2080.9 711.2 L2681.5 1058.0 L1479.9 1751.8 Z" fill="none" stroke="#ff8c00" stroke-width="1.4"/><path d="M928.2 1404.8 L2080.9 739.2 L2633.0 1058.0 L1480.3 1723.5 Z" fill="none" stroke="#ff8c00" stroke-width="1.4"/><path d="M1003.6 1371.2 L1972.7 811.8" fill="none" stroke="#6408b4" stroke-width="1.15"/><path d="M962.9 1424.8 L1012.3 1396.2 L993.2 1385.2 L1003.6 1371.2" fill="none" stroke="#6408b4" stroke-width="1.15"/><path d="M1007.9 1423.8 L2020.3 839.2" fill="none" stroke="#6408b4" stroke-width="1.15"/><path d="M977.6 1433.2 L1007.9 1423.8" fill="none" stroke="#6408b4" stroke-width="1.15"/><ellipse cx="1735.4" cy="963.2" rx="3.2" ry="2" fill="none" stroke="#1a1aff" stroke-width="1.2"/><ellipse cx="1765.7" cy="980.8" rx="3.2" ry="2" fill="none" stroke="#1a1aff" stroke-width="1.2"/><ellipse cx="1675.2" cy="998.0" rx="3.2" ry="2" fill="none" stroke="#1a1aff" stroke-width="1.2"/><ellipse cx="1705.5" cy="1015.5" rx="3.2" ry="2" fill="none" stroke="#1a1aff" stroke-width="1.2"/><ellipse cx="1379.9" cy="1168.5" rx="3.2" ry="2" fill="none" stroke="#1a1aff" stroke-width="1.2"/><ellipse cx="1410.2" cy="1186.0" rx="3.2" ry="2" fill="none" stroke="#1a1aff" stroke-width="1.2"/><ellipse cx="1319.7" cy="1203.2" rx="3.2" ry="2" fill="none" stroke="#1a1aff" stroke-width="1.2"/><ellipse cx="1350.0" cy="1220.8" rx="3.2" ry="2" fill="none" stroke="#1a1aff" stroke-width="1.2"/><path d="M1536.5 1085.2 L1544.5 1083.2 M1538.5 1082.2 L1541.5 1088.2" stroke="#ddd" stroke-width="1.3"/><ellipse cx="984.5" cy="1422.2" rx="6" ry="4" fill="none" stroke="#1a1aff" stroke-width="1.3"/><ellipse cx="1005.3" cy="1422.2" rx="2.5" ry="1.8" fill="none" stroke="#ffb400" stroke-width="1.1"/><path d="M1078.1 1414.2 L2047.2 854.8" fill="none" stroke="#6408b4" stroke-width="1.15"/><path d="M1037.4 1467.8 L1086.7 1439.2 L1067.7 1428.2 L1078.1 1414.2" fill="none" stroke="#6408b4" stroke-width="1.15"/><path d="M1082.4 1466.8 L2094.8 882.2" fill="none" stroke="#6408b4" stroke-width="1.15"/><path d="M1052.1 1476.2 L1082.4 1466.8" fill="none" stroke="#6408b4" stroke-width="1.15"/><ellipse cx="1809.9" cy="1006.2" rx="3.2" ry="2" fill="none" stroke="#1a1aff" stroke-width="1.2"/><ellipse cx="1840.2" cy="1023.8" rx="3.2" ry="2" fill="none" stroke="#1a1aff" stroke-width="1.2"/><ellipse cx="1749.7" cy="1041.0" rx="3.2" ry="2" fill="none" stroke="#1a1aff" stroke-width="1.2"/><ellipse cx="1780.0" cy="1058.5" rx="3.2" ry="2" fill="none" stroke="#1a1aff" stroke-width="1.2"/><ellipse cx="1454.4" cy="1211.5" rx="3.2" ry="2" fill="none" stroke="#1a1aff" stroke-width="1.2"/><ellipse cx="1484.7" cy="1229.0" rx="3.2" ry="2" fill="none" stroke="#1a1aff" stroke-width="1.2"/><ellipse cx="1394.2" cy="1246.2" rx="3.2" ry="2" fill="none" stroke="#1a1aff" stroke-width="1.2"/><ellipse cx="1424.5" cy="1263.8" rx="3.2" ry="2" fill="none" stroke="#1a1aff" stroke-width="1.2"/><path d="M1611.0 1128.2 L1619.0 1126.2 M1613.0 1125.2 L1616.0 1131.2" stroke="#ddd" stroke-width="1.3"/><ellipse cx="1059.0" cy="1465.2" rx="6" ry="4" fill="none" stroke="#1a1aff" stroke-width="1.3"/><ellipse cx="1079.8" cy="1465.2" rx="2.5" ry="1.8" fill="none" stroke="#ffb400" stroke-width="1.1"/><path d="M1152.5 1457.2 L2121.6 897.8" fill="none" stroke="#6408b4" stroke-width="1.15"/><path d="M1111.8 1510.8 L1161.2 1482.2 L1142.2 1471.2 L1152.5 1457.2" fill="none" stroke="#6408b4" stroke-width="1.15"/><path d="M1156.9 1509.8 L2169.3 925.2" fill="none" stroke="#6408b4" stroke-width="1.15"/><path d="M1126.6 1519.2 L1156.9 1509.8" fill="none" stroke="#6408b4" stroke-width="1.15"/><ellipse cx="1884.3" cy="1049.2" rx="3.2" ry="2" fill="none" stroke="#1a1aff" stroke-width="1.2"/><ellipse cx="1914.7" cy="1066.8" rx="3.2" ry="2" fill="none" stroke="#1a1aff" stroke-width="1.2"/><ellipse cx="1824.2" cy="1084.0" rx="3.2" ry="2" fill="none" stroke="#1a1aff" stroke-width="1.2"/><ellipse cx="1854.5" cy="1101.5" rx="3.2" ry="2" fill="none" stroke="#1a1aff" stroke-width="1.2"/><ellipse cx="1528.8" cy="1254.5" rx="3.2" ry="2" fill="none" stroke="#1a1aff" stroke-width="1.2"/><ellipse cx="1559.1" cy="1272.0" rx="3.2" ry="2" fill="none" stroke="#1a1aff" stroke-width="1.2"/><ellipse cx="1468.6" cy="1289.2" rx="3.2" ry="2" fill="none" stroke="#1a1aff" stroke-width="1.2"/><ellipse cx="1499.0" cy="1306.8" rx="3.2" ry="2" fill="none" stroke="#1a1aff" stroke-width="1.2"/><path d="M1685.5 1171.2 L1693.5 1169.2 M1687.5 1168.2 L1690.5 1174.2" stroke="#ddd" stroke-width="1.3"/><ellipse cx="1133.5" cy="1508.2" rx="6" ry="4" fill="none" stroke="#1a1aff" stroke-width="1.3"/><ellipse cx="1154.3" cy="1508.2" rx="2.5" ry="1.8" fill="none" stroke="#ffb400" stroke-width="1.1"/><path d="M1227.0 1500.2 L2196.1 940.8" fill="none" stroke="#6408b4" stroke-width="1.15"/><path d="M1186.3 1553.8 L1235.7 1525.2 L1216.6 1514.2 L1227.0 1500.2" fill="none" stroke="#6408b4" stroke-width="1.15"/><path d="M1231.4 1552.8 L2243.7 968.2" fill="none" stroke="#6408b4" stroke-width="1.15"/><path d="M1201.0 1562.2 L1231.4 1552.8" fill="none" stroke="#6408b4" stroke-width="1.15"/><ellipse cx="1958.8" cy="1092.2" rx="3.2" ry="2" fill="none" stroke="#1a1aff" stroke-width="1.2"/><ellipse cx="1989.1" cy="1109.8" rx="3.2" ry="2" fill="none" stroke="#1a1aff" stroke-width="1.2"/><ellipse cx="1898.6" cy="1127.0" rx="3.2" ry="2" fill="none" stroke="#1a1aff" stroke-width="1.2"/><ellipse cx="1928.9" cy="1144.5" rx="3.2" ry="2" fill="none" stroke="#1a1aff" stroke-width="1.2"/><ellipse cx="1603.3" cy="1297.5" rx="3.2" ry="2" fill="none" stroke="#1a1aff" stroke-width="1.2"/><ellipse cx="1633.6" cy="1315.0" rx="3.2" ry="2" fill="none" stroke="#1a1aff" stroke-width="1.2"/><ellipse cx="1543.1" cy="1332.2" rx="3.2" ry="2" fill="none" stroke="#1a1aff" stroke-width="1.2"/><ellipse cx="1573.4" cy="1349.8" rx="3.2" ry="2" fill="none" stroke="#1a1aff" stroke-width="1.2"/><path d="M1760.0 1214.2 L1768.0 1212.2 M1762.0 1211.2 L1765.0 1217.2" stroke="#ddd" stroke-width="1.3"/><ellipse cx="1208.0" cy="1551.2" rx="6" ry="4" fill="none" stroke="#1a1aff" stroke-width="1.3"/><ellipse cx="1228.8" cy="1551.2" rx="2.5" ry="1.8" fill="none" stroke="#ffb400" stroke-width="1.1"/><path d="M1301.5 1543.2 L2270.6 983.8" fill="none" stroke="#6408b4" stroke-width="1.15"/><path d="M1260.8 1596.8 L1310.2 1568.2 L1291.1 1557.2 L1301.5 1543.2" fill="none" stroke="#6408b4" stroke-width="1.15"/><path d="M1305.8 1595.8 L2318.2 1011.2" fill="none" stroke="#6408b4" stroke-width="1.15"/><path d="M1275.5 1605.2 L1305.8 1595.8" fill="none" stroke="#6408b4" stroke-width="1.15"/><ellipse cx="2033.3" cy="1135.2" rx="3.2" ry="2" fill="none" stroke="#1a1aff" stroke-width="1.2"/><ellipse cx="2063.6" cy="1152.8" rx="3.2" ry="2" fill="none" stroke="#1a1aff" stroke-width="1.2"/><ellipse cx="1973.1" cy="1170.0" rx="3.2" ry="2" fill="none" stroke="#1a1aff" stroke-width="1.2"/><ellipse cx="2003.4" cy="1187.5" rx="3.2" ry="2" fill="none" stroke="#1a1aff" stroke-width="1.2"/><ellipse cx="1677.8" cy="1340.5" rx="3.2" ry="2" fill="none" stroke="#1a1aff" stroke-width="1.2"/><ellipse cx="1708.1" cy="1358.0" rx="3.2" ry="2" fill="none" stroke="#1a1aff" stroke-width="1.2"/><ellipse cx="1617.6" cy="1375.2" rx="3.2" ry="2" fill="none" stroke="#1a1aff" stroke-width="1.2"/><ellipse cx="1647.9" cy="1392.8" rx="3.2" ry="2" fill="none" stroke="#1a1aff" stroke-width="1.2"/><path d="M1834.4 1257.2 L1842.4 1255.2 M1836.4 1254.2 L1839.4 1260.2" stroke="#ddd" stroke-width="1.3"/><ellipse cx="1282.5" cy="1594.2" rx="6" ry="4" fill="none" stroke="#1a1aff" stroke-width="1.3"/><ellipse cx="1303.2" cy="1594.2" rx="2.5" ry="1.8" fill="none" stroke="#ffb400" stroke-width="1.1"/><path d="M1376.0 1586.2 L2345.1 1026.8" fill="none" stroke="#6408b4" stroke-width="1.15"/><path d="M1335.3 1639.8 L1384.6 1611.2 L1365.6 1600.2 L1376.0 1586.2" fill="none" stroke="#6408b4" stroke-width="1.15"/><path d="M1380.3 1638.8 L2392.7 1054.2" fill="none" stroke="#6408b4" stroke-width="1.15"/><path d="M1350.0 1648.2 L1380.3 1638.8" fill="none" stroke="#6408b4" stroke-width="1.15"/><ellipse cx="2107.8" cy="1178.2" rx="3.2" ry="2" fill="none" stroke="#1a1aff" stroke-width="1.2"/><ellipse cx="2138.1" cy="1195.8" rx="3.2" ry="2" fill="none" stroke="#1a1aff" stroke-width="1.2"/><ellipse cx="2047.6" cy="1213.0" rx="3.2" ry="2" fill="none" stroke="#1a1aff" stroke-width="1.2"/><ellipse cx="2077.9" cy="1230.5" rx="3.2" ry="2" fill="none" stroke="#1a1aff" stroke-width="1.2"/><ellipse cx="1752.3" cy="1383.5" rx="3.2" ry="2" fill="none" stroke="#1a1aff" stroke-width="1.2"/><ellipse cx="1782.6" cy="1401.0" rx="3.2" ry="2" fill="none" stroke="#1a1aff" stroke-width="1.2"/><ellipse cx="1692.1" cy="1418.2" rx="3.2" ry="2" fill="none" stroke="#1a1aff" stroke-width="1.2"/><ellipse cx="1722.4" cy="1435.8" rx="3.2" ry="2" fill="none" stroke="#1a1aff" stroke-width="1.2"/><path d="M1908.9 1300.2 L1916.9 1298.2 M1910.9 1297.2 L1913.9 1303.2" stroke="#ddd" stroke-width="1.3"/><ellipse cx="1356.9" cy="1637.2" rx="6" ry="4" fill="none" stroke="#1a1aff" stroke-width="1.3"/><ellipse cx="1377.7" cy="1637.2" rx="2.5" ry="1.8" fill="none" stroke="#ffb400" stroke-width="1.1"/><path d="M1450.5 1629.2 L2419.5 1069.8" fill="none" stroke="#6408b4" stroke-width="1.15"/><path d="M1409.8 1682.8 L1459.1 1654.2 L1440.1 1643.2 L1450.5 1629.2" fill="none" stroke="#6408b4" stroke-width="1.15"/><path d="M1454.8 1681.8 L2467.2 1097.2" fill="none" stroke="#6408b4" stroke-width="1.15"/><path d="M1424.5 1691.2 L1454.8 1681.8" fill="none" stroke="#6408b4" stroke-width="1.15"/><ellipse cx="2182.3" cy="1221.2" rx="3.2" ry="2" fill="none" stroke="#1a1aff" stroke-width="1.2"/><ellipse cx="2212.6" cy="1238.8" rx="3.2" ry="2" fill="none" stroke="#1a1aff" stroke-width="1.2"/><ellipse cx="2122.1" cy="1256.0" rx="3.2" ry="2" fill="none" stroke="#1a1aff" stroke-width="1.2"/><ellipse cx="2152.4" cy="1273.5" rx="3.2" ry="2" fill="none" stroke="#1a1aff" stroke-width="1.2"/><ellipse cx="1826.7" cy="1426.5" rx="3.2" ry="2" fill="none" stroke="#1a1aff" stroke-width="1.2"/><ellipse cx="1857.1" cy="1444.0" rx="3.2" ry="2" fill="none" stroke="#1a1aff" stroke-width="1.2"/><ellipse cx="1766.6" cy="1461.2" rx="3.2" ry="2" fill="none" stroke="#1a1aff" stroke-width="1.2"/><ellipse cx="1796.9" cy="1478.8" rx="3.2" ry="2" fill="none" stroke="#1a1aff" stroke-width="1.2"/><path d="M1983.4 1343.2 L1991.4 1341.2 M1985.4 1340.2 L1988.4 1346.2" stroke="#ddd" stroke-width="1.3"/><ellipse cx="1431.4" cy="1680.2" rx="6" ry="4" fill="none" stroke="#1a1aff" stroke-width="1.3"/><ellipse cx="1452.2" cy="1680.2" rx="2.5" ry="1.8" fill="none" stroke="#ffb400" stroke-width="1.1"/><path d="M1524.9 1672.2 L2494.0 1112.8" fill="none" stroke="#6408b4" stroke-width="1.15"/><path d="M1484.2 1725.8 L1533.6 1697.2 L1514.5 1686.2 L1524.9 1672.2" fill="none" stroke="#6408b4" stroke-width="1.15"/><path d="M1529.3 1724.8 L2541.7 1140.2" fill="none" stroke="#6408b4" stroke-width="1.15"/><path d="M1499.0 1734.2 L1529.3 1724.8" fill="none" stroke="#6408b4" stroke-width="1.15"/><ellipse cx="2256.7" cy="1264.2" rx="3.2" ry="2" fill="none" stroke="#1a1aff" stroke-width="1.2"/><ellipse cx="2287.0" cy="1281.8" rx="3.2" ry="2" fill="none" stroke="#1a1aff" stroke-width="1.2"/><ellipse cx="2196.5" cy="1299.0" rx="3.2" ry="2" fill="none" stroke="#1a1aff" stroke-width="1.2"/><ellipse cx="2226.9" cy="1316.5" rx="3.2" ry="2" fill="none" stroke="#1a1aff" stroke-width="1.2"/><ellipse cx="1901.2" cy="1469.5" rx="3.2" ry="2" fill="none" stroke="#1a1aff" stroke-width="1.2"/><ellipse cx="1931.5" cy="1487.0" rx="3.2" ry="2" fill="none" stroke="#1a1aff" stroke-width="1.2"/><ellipse cx="1841.0" cy="1504.2" rx="3.2" ry="2" fill="none" stroke="#1a1aff" stroke-width="1.2"/><ellipse cx="1871.3" cy="1521.8" rx="3.2" ry="2" fill="none" stroke="#1a1aff" stroke-width="1.2"/><path d="M2057.9 1386.2 L2065.9 1384.2 M2059.9 1383.2 L2062.9 1389.2" stroke="#ddd" stroke-width="1.3"/><ellipse cx="1505.9" cy="1723.2" rx="6" ry="4" fill="none" stroke="#1a1aff" stroke-width="1.3"/><ellipse cx="1526.7" cy="1723.2" rx="2.5" ry="1.8" fill="none" stroke="#ffb400" stroke-width="1.1"/><text x="0" y="0" font-family="Liberation Sans" font-size="29.5" fill="#139c13" transform="matrix(0.866 0.5 -0.866 0.5 1464.0 270.0)">SK01_ Floor Structure 21mm_ Sheet6</text><text x="0" y="0" font-family="Liberation Sans" font-size="29.5" fill="#139c13" transform="matrix(0.866 0.5 -0.866 0.5 763.0 -135.0)">SK01_ Floor Structure 21mm_ Sheet5</text><text x="0" y="0" font-family="Liberation Sans" font-size="29.5" fill="#139c13" transform="matrix(0.866 0.5 -0.866 0.5 1943.0 181.0)">Dowel Joint</text><text x="0" y="0" font-family="Liberation Sans" font-size="29.5" fill="#139c13" transform="matrix(0.866 0.5 -0.866 0.5 1912.2 198.8)">Black Curve</text><text x="0" y="0" font-family="Liberation Sans" font-size="29.5" fill="#139c13" transform="matrix(0.866 0.5 -0.866 0.5 1881.4 216.6)">Offset to side</text><text x="0" y="0" font-family="Liberation Sans" font-size="29.5" fill="#139c13" transform="matrix(0.866 0.5 -0.866 0.5 1850.6 234.4)">0.5mm. Inside</text><text x="0" y="0" font-family="Liberation Sans" font-size="29.5" fill="#139c13" transform="matrix(0.866 0.5 -0.866 0.5 1819.8 252.2)">Joint</text><text x="0" y="0" font-family="Liberation Sans" font-size="29.5" fill="#139c13" transform="matrix(0.866 0.5 -0.866 0.5 1598.0 -20.0)">Joint</text><text x="0" y="0" font-family="Liberation Sans" font-size="29.5" fill="#139c13" transform="matrix(0.866 0.5 -0.866 0.5 1555.2 -2.2)">_ Red</text><text x="0" y="0" font-family="Liberation Sans" font-size="29.5" fill="#139c13" transform="matrix(0.866 0.5 -0.866 0.5 1524.4 15.6)">Offset 0.3</text></svg>
<div style="left:786.0px;top:394.0px;width:133.0px;height:39.0px;background:#6b5a3a;"></div>
<div style="left:795.0px;top:402.1px;font:bold 27px/1 'Liberation Sans',sans-serif;color:#f4f4f4;">Parallel</div>
<div style="left:903.0px;top:396.0px;width:1.5px;height:35.0px;background:#d8d8d8;"></div>
<svg style="position:absolute;left:905.0px;top:408.0px;" width="14" height="10" viewBox="0 0 14 10"><path d="M2 2 L12 2 L7 8Z" fill="#fff"/></svg>
<svg style="position:absolute;left:836.0px;top:1895.0px;" width="50" height="70" viewBox="0 0 50 70"><path d="M6 48 L6 8" stroke="#2060ff" stroke-width="1.5"/><path d="M6 48 L44 28" stroke="#ff2020" stroke-width="1.5"/><path d="M6 48 L44 62" stroke="#20e020" stroke-width="1.5"/><text x="3" y="7" font-size="7" fill="#2060ff" font-family="Liberation Sans">z</text><text x="45" y="28" font-size="7" fill="#ff2020" font-family="Liberation Sans">x</text></svg>
<svg style="position:absolute;left:1690.0px;top:1760.0px;" width="40" height="60" viewBox="0 0 40 60"><path d="M12 42 L12 8" stroke="#1010ff" stroke-width="2.5"/><path d="M6 14 L12 0 L18 14Z" fill="#1010ff"/><path d="M12 42 L34 30" stroke="#10e010" stroke-width="2.5"/><path d="M12 42 L34 54" stroke="#ff1010" stroke-width="2.5"/><circle cx="12" cy="42" r="3" fill="#1010ff"/></svg>
<div style="left:2821.0px;top:392.0px;width:5.0px;height:1649.0px;background:#3a3a3a;"></div>
<div style="left:2826.0px;top:392.0px;width:52.0px;height:1649.0px;background:#333333;"></div>
<div style="left:2846px;top:388px;font:26px/1 'Liberation Sans';color:#d0d0d0">&#9881;</div>
<div style="left:2826.0px;top:418.0px;width:52.0px;height:1.5px;background:#555;"></div>
<svg style="position:absolute;left:2832.0px;top:419.6px;" width="40" height="40" viewBox="0 0 40 40"><path d="M4 26 L20 18 L36 26 L20 34 Z" fill="none" stroke="#bbb" stroke-width="1"/><path d="M8 24 L24 32 M12 22 L28 30 M16 20 L32 28 M8 28 L24 20 M12 30 L28 22 M16 32 L32 24" stroke="#999" stroke-width="0.8"/><path d="M20 26 L34 32" stroke="#e22" stroke-width="2"/><path d="M20 26 L22 16" stroke="#2c2" stroke-width="2"/><rect x="17" y="12" width="6" height="6" fill="none" stroke="#fff" stroke-width="1.5"/></svg>
<svg style="position:absolute;left:2832.0px;top:459.0px;" width="40" height="40" viewBox="0 0 40 40"><path d="M4 26 L20 18 L36 26 L20 34 Z" fill="none" stroke="#bbb" stroke-width="1"/><path d="M8 24 L24 32 M12 22 L28 30 M16 20 L32 28 M8 28 L24 20 M12 30 L28 22 M16 32 L32 24" stroke="#999" stroke-width="0.8"/><path d="M20 26 L34 32" stroke="#e22" stroke-width="2"/><path d="M20 26 L22 16" stroke="#2c2" stroke-width="2"/><path d="M20 2 L20 20" stroke="#fff" stroke-width="1.5"/><rect x="17" y="14" width="6" height="6" fill="none" stroke="#fff" stroke-width="1.5"/></svg>
<svg style="position:absolute;left:2832.0px;top:501.6px;" width="40" height="40" viewBox="0 0 40 40"><path d="M4 26 L20 18 L36 26 L20 34 Z" fill="none" stroke="#bbb" stroke-width="1"/><path d="M8 24 L24 32 M12 22 L28 30 M16 20 L32 28 M8 28 L24 20 M12 30 L28 22 M16 32 L32 24" stroke="#999" stroke-width="0.8"/><path d="M20 26 L34 32" stroke="#e22" stroke-width="2"/><path d="M20 26 L22 16" stroke="#2c2" stroke-width="2"/><path d="M8 8 L18 4 L26 8 L26 18 L18 22 L8 18Z" fill="#4a7ee0" stroke="#223"/></svg>
<svg style="position:absolute;left:2832.0px;top:543.9px;" width="40" height="40" viewBox="0 0 40 40"><path d="M4 26 L20 18 L36 26 L20 34 Z" fill="none" stroke="#bbb" stroke-width="1"/><path d="M8 24 L24 32 M12 22 L28 30 M16 20 L32 28 M8 28 L24 20 M12 30 L28 22 M16 32 L32 24" stroke="#999" stroke-width="0.8"/><path d="M20 26 L34 32" stroke="#e22" stroke-width="2"/><path d="M20 26 L22 16" stroke="#2c2" stroke-width="2"/><circle cx="17" cy="18" r="9" fill="#4a7ee0" stroke="#e22"/></svg>
<svg style="position:absolute;left:2832.0px;top:586.0px;" width="40" height="40" viewBox="0 0 40 40"><path d="M4 26 L20 18 L36 26 L20 34 Z" fill="none" stroke="#bbb" stroke-width="1"/><path d="M8 24 L24 32 M12 22 L28 30 M16 20 L32 28 M8 28 L24 20 M12 30 L28 22 M16 32 L32 24" stroke="#999" stroke-width="0.8"/><path d="M20 26 L34 32" stroke="#e22" stroke-width="2"/><path d="M20 26 L22 16" stroke="#2c2" stroke-width="2"/><path d="M4 36 Q20 30 20 18 Q20 6 34 2" fill="none" stroke="#fff" stroke-width="3"/></svg>
<svg style="position:absolute;left:2832.0px;top:628.3px;" width="40" height="40" viewBox="0 0 40 40"><path d="M4 26 L20 18 L36 26 L20 34 Z" fill="none" stroke="#bbb" stroke-width="1"/><path d="M8 24 L24 32 M12 22 L28 30 M16 20 L32 28 M8 28 L24 20 M12 30 L28 22 M16 32 L32 24" stroke="#999" stroke-width="0.8"/><path d="M20 26 L34 32" stroke="#e22" stroke-width="2"/><path d="M20 26 L22 16" stroke="#2c2" stroke-width="2"/><circle cx="20" cy="14" r="9" fill="none" stroke="#ddd" stroke-width="1.5"/><path d="M6 34 L30 8" stroke="#ddd" stroke-width="1.5"/></svg>
<svg style="position:absolute;left:2832.0px;top:670.6px;" width="40" height="40" viewBox="0 0 40 40"><path d="M4 26 L20 18 L36 26 L20 34 Z" fill="none" stroke="#bbb" stroke-width="1"/><path d="M8 24 L24 32 M12 22 L28 30 M16 20 L32 28 M8 28 L24 20 M12 30 L28 22 M16 32 L32 24" stroke="#999" stroke-width="0.8"/><path d="M20 26 L34 32" stroke="#e22" stroke-width="2"/><path d="M20 26 L22 16" stroke="#2c2" stroke-width="2"/><path d="M20 2 L20 24" stroke="#2c2" stroke-width="1.5"/></svg>
<svg style="position:absolute;left:2832.0px;top:712.8px;" width="40" height="40" viewBox="0 0 40 40"><path d="M4 26 L20 18 L36 26 L20 34 Z" fill="none" stroke="#bbb" stroke-width="1"/><path d="M8 24 L24 32 M12 22 L28 30 M16 20 L32 28 M8 28 L24 20 M12 30 L28 22 M16 32 L32 24" stroke="#999" stroke-width="0.8"/><path d="M20 26 L34 32" stroke="#e22" stroke-width="2"/><path d="M20 26 L22 16" stroke="#2c2" stroke-width="2"/><rect x="14" y="8" width="6" height="6" fill="none" stroke="#fff" stroke-width="1.5"/><rect x="8" y="18" width="6" height="6" fill="none" stroke="#fff" stroke-width="1.5"/><rect x="26" y="18" width="6" height="6" fill="none" stroke="#fff" stroke-width="1.5"/></svg>
<svg style="position:absolute;left:2832.0px;top:755.0px;" width="40" height="40" viewBox="0 0 40 40"><path d="M4 26 L20 18 L36 26 L20 34 Z" fill="none" stroke="#bbb" stroke-width="1"/><path d="M8 24 L24 32 M12 22 L28 30 M16 20 L32 28 M8 28 L24 20 M12 30 L28 22 M16 32 L32 24" stroke="#999" stroke-width="0.8"/><path d="M20 26 L34 32" stroke="#e22" stroke-width="2"/><path d="M20 26 L22 16" stroke="#2c2" stroke-width="2"/><rect x="12" y="14" width="6" height="6" fill="none" stroke="#fff" stroke-width="1.5"/><rect x="24" y="18" width="6" height="6" fill="none" stroke="#fff" stroke-width="1.5"/></svg>
<svg style="position:absolute;left:2832.0px;top:797.3px;" width="40" height="40" viewBox="0 0 40 40"><path d="M4 26 L20 18 L36 26 L20 34 Z" fill="none" stroke="#bbb" stroke-width="1"/><path d="M8 24 L24 32 M12 22 L28 30 M16 20 L32 28 M8 28 L24 20 M12 30 L28 22 M16 32 L32 24" stroke="#999" stroke-width="0.8"/><path d="M20 26 L34 32" stroke="#e22" stroke-width="2"/><path d="M20 26 L22 16" stroke="#2c2" stroke-width="2"/><rect x="17" y="4" width="6" height="6" fill="none" stroke="#fff" stroke-width="1.5"/><rect x="17" y="16" width="6" height="6" fill="none" stroke="#fff" stroke-width="1.5"/><path d="M20 10 L20 16" stroke="#fff"/></svg>
<div style="left:2828.0px;top:839.0px;width:48.0px;height:2.0px;background:#555;"></div>
<svg style="position:absolute;left:2832.0px;top:844.5px;" width="40" height="40" viewBox="0 0 40 40"><path d="M4 26 L20 18 L36 26 L20 34 Z" fill="none" stroke="#bbb" stroke-width="1"/><path d="M8 24 L24 32 M12 22 L28 30 M16 20 L32 28 M8 28 L24 20 M12 30 L28 22 M16 32 L32 24" stroke="#999" stroke-width="0.8"/><path d="M20 26 L34 32" stroke="#e22" stroke-width="2"/><path d="M20 26 L22 16" stroke="#2c2" stroke-width="2"/><path d="M6 16 Q20 2 34 12" fill="none" stroke="#ddd" stroke-width="2.5"/><path d="M4 10 L8 18 L12 10" fill="#ddd"/></svg>
<svg style="position:absolute;left:2832.0px;top:886.7px;" width="40" height="40" viewBox="0 0 40 40"><path d="M4 26 L20 18 L36 26 L20 34 Z" fill="none" stroke="#bbb" stroke-width="1"/><path d="M8 24 L24 32 M12 22 L28 30 M16 20 L32 28 M8 28 L24 20 M12 30 L28 22 M16 32 L32 24" stroke="#999" stroke-width="0.8"/><path d="M20 26 L34 32" stroke="#e22" stroke-width="2"/><path d="M20 26 L22 16" stroke="#2c2" stroke-width="2"/><path d="M6 4 L6 22 L10 18 L14 26 L17 24 L13 17 L19 16 Z" fill="#fff" stroke="#222"/></svg>
<svg style="position:absolute;left:2832.0px;top:928.0px;" width="40" height="40" viewBox="0 0 40 40"><rect x="3" y="3" width="34" height="34" fill="#ddd" stroke="#444" stroke-width="2"/><path d="M3 14 L37 14 M3 25 L37 25 M14 3 L14 37 M25 3 L25 37" stroke="#888"/><path d="M14 20 L34 20" stroke="#e22" stroke-width="2"/><path d="M14 20 L14 4" stroke="#2c2" stroke-width="2"/></svg>
<svg style="position:absolute;left:2832.0px;top:968.7px;" width="40" height="40" viewBox="0 0 40 40"><path d="M4 26 L20 18 L36 26 L20 34 Z" fill="none" stroke="#bbb" stroke-width="1"/><path d="M8 24 L24 32 M12 22 L28 30 M16 20 L32 28 M8 28 L24 20 M12 30 L28 22 M16 32 L32 24" stroke="#999" stroke-width="0.8"/><path d="M20 26 L34 32" stroke="#e22" stroke-width="2"/><path d="M20 26 L22 16" stroke="#2c2" stroke-width="2"/><rect x="4" y="2" width="22" height="20" fill="#e8d890" stroke="#222" stroke-width="2"/><rect x="9" y="4" width="12" height="7" fill="#fff"/><rect x="9" y="14" width="12" height="7" fill="#555"/></svg>
<svg style="position:absolute;left:2832.0px;top:1013.4px;" width="40" height="40" viewBox="0 0 40 40"><path d="M4 26 L20 18 L36 26 L20 34 Z" fill="none" stroke="#bbb" stroke-width="1"/><path d="M8 24 L24 32 M12 22 L28 30 M16 20 L32 28 M8 28 L24 20 M12 30 L28 22 M16 32 L32 24" stroke="#999" stroke-width="0.8"/><path d="M20 26 L34 32" stroke="#e22" stroke-width="2"/><path d="M20 26 L22 16" stroke="#2c2" stroke-width="2"/><path d="M2 14 L2 36 L32 36 L38 18 L14 18 L12 14 Z" fill="#f8d040" stroke="#222" stroke-width="2"/></svg>
<svg style="position:absolute;left:2832.0px;top:1053.0px;" width="40" height="40" viewBox="0 0 40 40"><path d="M4 26 L20 18 L36 26 L20 34 Z" fill="none" stroke="#bbb" stroke-width="1"/><path d="M8 24 L24 32 M12 22 L28 30 M16 20 L32 28 M8 28 L24 20 M12 30 L28 22 M16 32 L32 24" stroke="#999" stroke-width="0.8"/><path d="M20 26 L34 32" stroke="#e22" stroke-width="2"/><path d="M20 26 L22 16" stroke="#2c2" stroke-width="2"/><path d="M8 12 Q22 2 34 8 L30 4 M34 8 L28 10" fill="none" stroke="#ddd" stroke-width="2"/></svg>
<svg style="position:absolute;left:2832.0px;top:1097.0px;" width="40" height="40" viewBox="0 0 40 40"><path d="M4 26 L20 18 L36 26 L20 34 Z" fill="none" stroke="#bbb" stroke-width="1"/><path d="M8 24 L24 32 M12 22 L28 30 M16 20 L32 28 M8 28 L24 20 M12 30 L28 22 M16 32 L32 24" stroke="#999" stroke-width="0.8"/><path d="M20 26 L34 32" stroke="#e22" stroke-width="2"/><path d="M20 26 L22 16" stroke="#2c2" stroke-width="2"/><ellipse cx="20" cy="10" rx="12" ry="6" fill="none" stroke="#fff" stroke-width="2"/><circle cx="20" cy="10" r="3" fill="#4af"/></svg>
<svg style="position:absolute;left:2832.0px;top:1145.0px;" width="40" height="40" viewBox="0 0 40 40"><path d="M4 26 L20 18 L36 26 L20 34 Z" fill="none" stroke="#bbb" stroke-width="1"/><path d="M8 24 L24 32 M12 22 L28 30 M16 20 L32 28 M8 28 L24 20 M12 30 L28 22 M16 32 L32 24" stroke="#999" stroke-width="0.8"/><path d="M20 26 L34 32" stroke="#e22" stroke-width="2"/><path d="M20 26 L22 16" stroke="#2c2" stroke-width="2"/><path d="M16 2 L24 2 L24 10 L28 10 L20 18 L12 10 L16 10Z" fill="#fff" stroke="#222"/></svg>
<svg style="position:absolute;left:2832.0px;top:1188.4px;" width="40" height="40" viewBox="0 0 40 40"><path d="M4 26 L20 18 L36 26 L20 34 Z" fill="none" stroke="#bbb" stroke-width="1"/><path d="M8 24 L24 32 M12 22 L28 30 M16 20 L32 28 M8 28 L24 20 M12 30 L28 22 M16 32 L32 24" stroke="#999" stroke-width="0.8"/><path d="M20 26 L34 32" stroke="#e22" stroke-width="2"/><path d="M20 26 L22 16" stroke="#2c2" stroke-width="2"/><path d="M16 38 L24 38 L24 30 L28 30 L20 22 L12 30 L16 30Z" fill="#fff" stroke="#222"/></svg>
<svg style="position:absolute;left:2832.0px;top:1234.0px;" width="40" height="40" viewBox="0 0 40 40"><path d="M4 26 L20 18 L36 26 L20 34 Z" fill="none" stroke="#bbb" stroke-width="1"/><path d="M8 24 L24 32 M12 22 L28 30 M16 20 L32 28 M8 28 L24 20 M12 30 L28 22 M16 32 L32 24" stroke="#999" stroke-width="0.8"/><path d="M20 26 L34 32" stroke="#e22" stroke-width="2"/><path d="M20 26 L22 16" stroke="#2c2" stroke-width="2"/><path d="M4 34 L14 24 L10 22 L18 20 L16 28 L14 26 L6 36Z" fill="#fff" stroke="#222"/></svg>
<svg style="position:absolute;left:2832.0px;top:1271.0px;" width="40" height="40" viewBox="0 0 40 40"><path d="M4 26 L20 18 L36 26 L20 34 Z" fill="none" stroke="#bbb" stroke-width="1"/><path d="M8 24 L24 32 M12 22 L28 30 M16 20 L32 28 M8 28 L24 20 M12 30 L28 22 M16 32 L32 24" stroke="#999" stroke-width="0.8"/><path d="M20 26 L34 32" stroke="#e22" stroke-width="2"/><path d="M20 26 L22 16" stroke="#2c2" stroke-width="2"/><path d="M36 6 L26 16 L30 18 L22 20 L24 12 L26 14 L34 4Z" fill="#fff" stroke="#222"/></svg>
<svg style="position:absolute;left:2832.0px;top:1314.7px;" width="40" height="40" viewBox="0 0 40 40"><path d="M4 26 L20 18 L36 26 L20 34 Z" fill="none" stroke="#bbb" stroke-width="1"/><path d="M8 24 L24 32 M12 22 L28 30 M16 20 L32 28 M8 28 L24 20 M12 30 L28 22 M16 32 L32 24" stroke="#999" stroke-width="0.8"/><path d="M20 26 L34 32" stroke="#e22" stroke-width="2"/><path d="M20 26 L22 16" stroke="#2c2" stroke-width="2"/><path d="M38 22 L28 22 L28 18 L20 24 L28 30 L28 26 L38 26Z" fill="#fff" stroke="#222"/></svg>
<svg style="position:absolute;left:2832.0px;top:1358.0px;" width="40" height="40" viewBox="0 0 40 40"><path d="M4 26 L20 18 L36 26 L20 34 Z" fill="none" stroke="#bbb" stroke-width="1"/><path d="M8 24 L24 32 M12 22 L28 30 M16 20 L32 28 M8 28 L24 20 M12 30 L28 22 M16 32 L32 24" stroke="#999" stroke-width="0.8"/><path d="M20 26 L34 32" stroke="#e22" stroke-width="2"/><path d="M20 26 L22 16" stroke="#2c2" stroke-width="2"/><path d="M2 22 L12 22 L12 18 L20 24 L12 30 L12 26 L2 26Z" fill="#fff" stroke="#222"/></svg>
<div style="left:2828.0px;top:1400.0px;width:48.0px;height:2.0px;background:#555;"></div>
<svg style="position:absolute;left:2832.0px;top:1403.8px;" width="40" height="40" viewBox="0 0 40 40"><path d="M8 20 L20 14 L32 20 L32 32 L20 38 L8 32Z" fill="#4a7ee0" stroke="#223"/><path d="M14 24 L34 6 M20 20 L22 2" stroke="#e22" stroke-width="2"/></svg>
<svg style="position:absolute;left:2832.0px;top:1447.0px;" width="40" height="40" viewBox="0 0 40 40"><path d="M4 24 L20 14 L36 24 L20 34 Z" fill="#5a8ae8" stroke="#bbb"/><rect x="16" y="10" width="12" height="10" fill="#f8d040"/><path d="M20 24 L34 30" stroke="#e22" stroke-width="2"/></svg>
<div style="left:2880.0px;top:392.0px;width:956.0px;height:645.0px;background:#333333;border-radius:10px 10px 0 0"></div>
<div style="left:2887.6px;top:399.4px;font:normal 26px/1 'Liberation Sans',sans-serif;color:#8c8c8c;">Display</div>
<div style="left:3808px;top:400px;font:26px/1 'Liberation Sans';color:#d0d0d0">&#9881;</div>
<div style="left:2880.0px;top:433.0px;width:956.0px;height:31.0px;background:#444444;"></div>
<div style="left:2933.0px;top:435.0px;width:55.0px;height:29.0px;background:#333333;border-radius:8px 8px 0 0"></div>
<svg style="position:absolute;left:2892.8px;top:434.0px;" width="28" height="28" viewBox="0 0 28 28"><path d="M5 8 L14 4 L23 8 L23 20 L14 24 L5 20Z" fill="#6a9af0" stroke="#fff" stroke-width="1.2"/></svg>
<svg style="position:absolute;left:2946.0px;top:434.0px;" width="28" height="28" viewBox="0 0 28 28"><rect x="4" y="5" width="20" height="15" fill="#ddd" stroke="#111" stroke-width="1.5"/><rect x="10" y="21" width="8" height="3" fill="#222"/></svg>
<svg style="position:absolute;left:3000.6px;top:434.0px;" width="28" height="28" viewBox="0 0 28 28"><circle cx="14" cy="14" r="10" fill="none" stroke="url(#rb)" stroke-width="4"/><defs><linearGradient id="rb"><stop offset="0" stop-color="#f00"/><stop offset="0.33" stop-color="#0f0"/><stop offset="0.66" stop-color="#00f"/><stop offset="1" stop-color="#f0f"/></linearGradient></defs></svg>
<svg style="position:absolute;left:3054.5px;top:434.0px;" width="28" height="28" viewBox="0 0 28 28"><rect x="3" y="8" width="22" height="14" rx="2" fill="#999"/><circle cx="14" cy="15" r="5" fill="#333" stroke="#ddd"/></svg>
<svg style="position:absolute;left:3109.0px;top:434.0px;" width="28" height="28" viewBox="0 0 28 28"><rect x="4" y="4" width="20" height="20" fill="#ccc" stroke="#222"/><path d="M4 10 L24 10 M4 16 L24 16 M10 4 L10 24 M16 4 L16 24" stroke="#888"/><path d="M10 16 L24 16" stroke="#e22" stroke-width="1.5"/></svg>
<svg style="position:absolute;left:3163.0px;top:434.0px;" width="28" height="28" viewBox="0 0 28 28"><rect x="6" y="3" width="16" height="22" fill="#fff" stroke="#222"/><path d="M14 3 L14 25 M6 13 L22 13" stroke="#999"/></svg>
<svg style="position:absolute;left:3216.7px;top:434.0px;" width="28" height="28" viewBox="0 0 28 28"><path d="M8 6 L22 6 M8 10 L22 10 M8 14 L22 14 M8 18 L22 18" stroke="#f4e040" stroke-width="2"/><path d="M6 22 L6 26 L10 26 M24 2 L26 2 L26 6" stroke="#ddd" fill="none"/></svg>
<svg style="position:absolute;left:3271.0px;top:434.0px;" width="28" height="28" viewBox="0 0 28 28"><path d="M6 22 Q6 8 14 6 Q22 8 22 22 Z" fill="#d83010"/><rect x="5" y="22" width="18" height="2" fill="#d83010"/><circle cx="14" cy="25" r="2" fill="#d83010"/></svg>
<div style="left:2880.0px;top:464.0px;width:956.0px;height:502.0px;background:#333333;"></div>
<div style="left:3798.0px;top:470.0px;width:27.0px;height:496.0px;background:#1e1e1e;"></div>
<div style="left:3805.0px;top:495.0px;width:8.0px;height:141.0px;background:#5a5a5a;border-radius:4px"></div>
<div style="left:2890.0px;top:512.5px;width:908.0px;height:1.2px;background:#3e3e3e;"></div>
<div style="left:2890.0px;top:555.0px;width:908.0px;height:1.2px;background:#3e3e3e;"></div>
<div style="left:2890.0px;top:608.0px;width:908.0px;height:1.2px;background:#3e3e3e;"></div>
<div style="left:2918.0px;top:651.0px;width:880.0px;height:1.2px;background:#3e3e3e;"></div>
<div style="left:2918.0px;top:693.5px;width:880.0px;height:1.2px;background:#3e3e3e;"></div>
<div style="left:2918.0px;top:736.0px;width:880.0px;height:1.2px;background:#3e3e3e;"></div>
<div style="left:2918.0px;top:779.0px;width:880.0px;height:1.2px;background:#3e3e3e;"></div>
<div style="left:2918.0px;top:822.0px;width:880.0px;height:1.2px;background:#3e3e3e;"></div>
<div style="left:2918.0px;top:865.0px;width:880.0px;height:1.2px;background:#3e3e3e;"></div>
<div style="left:2918.0px;top:908.0px;width:880.0px;height:1.2px;background:#3e3e3e;"></div>
<div style="left:2918.0px;top:950.0px;width:880.0px;height:1.2px;background:#3e3e3e;"></div>
<div style="left:3341.0px;top:470.0px;width:1.2px;height:496.0px;background:#3e3e3e;"></div>
<div style="left:3342.0px;top:470.0px;width:456.0px;height:42.0px;background:#5a5a5a;"></div>
<div style="left:3347.5px;top:480.2px;font:normal 25.5px/1 'Liberation Sans',sans-serif;color:#e8e8e8;">Parallel</div>
<div style="left:2890.5px;top:480.2px;font:normal 25.5px/1 'Liberation Sans',sans-serif;color:#e8e8e8;">Active viewport</div>
<div style="left:3342.0px;top:513.0px;width:456.0px;height:42.0px;background:#5a5a5a;"></div>
<div style="left:3757.0px;top:514.0px;width:41.0px;height:40.0px;background:#ffffff;"></div>
<svg style="position:absolute;left:3769.0px;top:527.0px;" width="16" height="12" viewBox="0 0 16 12"><path d="M2 3 L8 9 L14 3" fill="none" stroke="#444" stroke-width="1.5"/></svg>
<div style="left:3346.0px;top:522.8px;font:normal 25.5px/1 'Liberation Sans',sans-serif;color:#e8e8e8;">Ghosted</div>
<div style="left:2890.5px;top:522.8px;font:normal 25.5px/1 'Liberation Sans',sans-serif;color:#e8e8e8;">Display mode</div>
<div style="left:2890.5px;top:568.5px;font:normal 30px/1 'Liberation Sans',sans-serif;color:#e8e8e8;">General settings</div>
<div style="left:3342.0px;top:609.0px;width:456.0px;height:42.0px;background:#5a5a5a;"></div>
<div style="left:3757.0px;top:610.0px;width:41.0px;height:40.0px;background:#ffffff;"></div>
<svg style="position:absolute;left:3769.0px;top:623.0px;" width="16" height="12" viewBox="0 0 16 12"><path d="M2 3 L8 9 L14 3" fill="none" stroke="#444" stroke-width="1.5"/></svg>
<div style="left:3346.0px;top:618.3px;font:normal 25.5px/1 'Liberation Sans',sans-serif;color:#e8e8e8;">Solid Color</div>
<div style="left:2918.3px;top:618.3px;font:normal 25.5px/1 'Liberation Sans',sans-serif;color:#e8e8e8;">Background</div>
<div style="left:2946.0px;top:662.0px;font:normal 25.5px/1 'Liberation Sans',sans-serif;color:#e8e8e8;">Color:</div>
<div style="left:3344px;top:654px;width:454px;height:39px;background:#000;border:1.5px solid #777;border-radius:3px"></div>
<div style="left:2918.3px;top:705.3px;font:normal 25.5px/1 'Liberation Sans',sans-serif;color:#e8e8e8;">Flat Shading</div>
<div style="left:3346px;top:703.0px;width:20px;height:20px;background:#262626;border:1.5px solid #9a9a9a;border-radius:4px"></div>
<div style="left:2918.3px;top:748.1px;font:normal 25.5px/1 'Liberation Sans',sans-serif;color:#e8e8e8;">Shade vertex colors</div>
<div style="left:3346px;top:745.8px;width:20px;height:20px;background:#262626;border:1.5px solid #9a9a9a;border-radius:4px"></div>
<div style="left:2918.3px;top:790.9px;font:normal 25.5px/1 'Liberation Sans',sans-serif;color:#e8e8e8;">Shadows</div>
<div style="left:3346px;top:788.6px;width:20px;height:20px;background:#262626;border:1.5px solid #9a9a9a;border-radius:4px"></div>
<div style="left:2918.3px;top:833.7px;font:normal 25.5px/1 'Liberation Sans',sans-serif;color:#e8e8e8;">Surface Isocurves</div>
<div style="left:3346px;top:831.4px;width:20px;height:20px;background:#262626;border:1.5px solid #9a9a9a;border-radius:4px"></div>
<div style="left:2918.3px;top:876.5px;font:normal 25.5px/1 'Liberation Sans',sans-serif;color:#e8e8e8;">Surface Edges</div>
<div style="left:3346px;top:874.2px;width:20px;height:20px;background:#4cc2ff;border-radius:4px"></div>
<svg style="position:absolute;left:3346.0px;top:874.2px;" width="20" height="20" viewBox="0 0 20 20"><path d="M5 10 L9 14 L15 6" fill="none" stroke="#111" stroke-width="1.5"/></svg>
<div style="left:2918.3px;top:919.3px;font:normal 25.5px/1 'Liberation Sans',sans-serif;color:#e8e8e8;">Tangent Edges</div>
<div style="left:3346px;top:917.0px;width:20px;height:20px;background:#4cc2ff;border-radius:4px"></div>
<svg style="position:absolute;left:3346.0px;top:917.0px;" width="20" height="20" viewBox="0 0 20 20"><path d="M5 10 L9 14 L15 6" fill="none" stroke="#111" stroke-width="1.5"/></svg>
<div style="left:3346px;top:964px;width:20px;height:2px;background:#4cc2ff"></div>
<div style="left:2890.0px;top:960.0px;width:200.0px;height:6.0px;background:#333;"></div>
<div style="left:2887.5px;top:971px;width:935.5px;height:59.5px;border:2px solid #d0d0d0;border-radius:4px;background:#333"></div>
<div style="left:3355.0px;top:989.9px;font:normal 26px/1 'Liberation Sans',sans-serif;color:#f0f0f0;transform:translateX(-50%);">Edit &quot;Ghosted&quot; settings...</div>
<div style="left:2880.0px;top:1041.0px;width:956.0px;height:1000.0px;background:#333333;border-radius:10px 10px 0 0"></div>
<div style="left:2887.5px;top:1047.6px;font:normal 26px/1 'Liberation Sans',sans-serif;color:#8c8c8c;">Layers</div>
<div style="left:3808px;top:1050px;font:26px/1 'Liberation Sans';color:#d0d0d0">&#9881;</div>
<div style="left:2880.0px;top:1081.0px;width:956.0px;height:1.5px;background:#2a2a2a;"></div>
<svg style="position:absolute;left:2885.4px;top:1096.0px;" width="24" height="24" viewBox="0 0 24 24"><path d="M3 6 L18 3 L22 14 L8 18Z" fill="#e05030" stroke="#fff"/><path d="M14 16 L24 16 M19 11 L19 21" stroke="#fff" stroke-width="3"/></svg>
<svg style="position:absolute;left:2917.0px;top:1096.0px;" width="24" height="24" viewBox="0 0 24 24"><path d="M3 4 L14 2 L17 10 L6 13Z" fill="#e05030" stroke="#fff"/><path d="M8 12 L20 10 L23 20 L10 22Z" fill="#5a7ae0" stroke="#fff"/></svg>
<svg style="position:absolute;left:2950.0px;top:1096.0px;" width="24" height="24" viewBox="0 0 24 24"><path d="M4 4 L20 20 M20 4 L4 20" stroke="#e81010" stroke-width="3"/></svg>
<svg style="position:absolute;left:2983.0px;top:1096.0px;" width="24" height="24" viewBox="0 0 24 24"><circle cx="12" cy="12" r="9" fill="none" stroke="#ddd" stroke-width="2"/><path d="M8 8 L20 8 L20 18 L8 18Z" fill="#e05030"/></svg>
<svg style="position:absolute;left:3016.0px;top:1096.0px;" width="24" height="24" viewBox="0 0 24 24"><path d="M3 18 L12 6 L21 18Z" fill="none" stroke="#888" stroke-width="2"/></svg>
<svg style="position:absolute;left:3048.6px;top:1096.0px;" width="24" height="24" viewBox="0 0 24 24"><path d="M3 6 L21 6 L12 18Z" fill="#6a8ae8"/></svg>
<svg style="position:absolute;left:3081.0px;top:1096.0px;" width="24" height="24" viewBox="0 0 24 24"><path d="M18 3 L18 21 L6 12Z" fill="#c82020"/></svg>
<svg style="position:absolute;left:3114.8px;top:1096.0px;" width="24" height="24" viewBox="0 0 24 24"><path d="M3 3 L21 3 L14 12 L14 21 L10 19 L10 12Z" fill="#3a7ae0"/></svg>
<svg style="position:absolute;left:3147.5px;top:1096.0px;" width="24" height="24" viewBox="0 0 24 24"><rect x="3" y="3" width="4" height="4" fill="#ddd"/><rect x="3" y="9" width="4" height="4" fill="#ddd"/><rect x="3" y="15" width="4" height="4" fill="#ddd"/><rect x="9" y="3" width="4" height="4" fill="#ddd"/><rect x="9" y="9" width="4" height="4" fill="#ddd"/><rect x="9" y="15" width="4" height="4" fill="#ddd"/><rect x="15" y="3" width="4" height="4" fill="#ddd"/><rect x="15" y="9" width="4" height="4" fill="#ddd"/><rect x="15" y="15" width="4" height="4" fill="#ddd"/></svg>
<svg style="position:absolute;left:3180.7px;top:1096.0px;" width="24" height="24" viewBox="0 0 24 24"><path d="M3 5 L21 5 M3 12 L21 12 M3 19 L21 19" stroke="#ddd" stroke-width="2.5"/></svg>
<svg style="position:absolute;left:3213.8px;top:1096.0px;" width="24" height="24" viewBox="0 0 24 24"><circle cx="12" cy="12" r="11" fill="#2f6fe0"/><text x="12" y="19" font-size="17" font-weight="bold" font-family="Liberation Sans" fill="#fff" text-anchor="middle">?</text></svg>
<div style="left:2881px;top:1133px;width:955px;height:45px;background:#5e5e5e;border:1.5px solid #7a7a7a;border-radius:22px"></div>
<svg style="position:absolute;left:2888.0px;top:1143.0px;" width="22" height="22" viewBox="0 0 22 22"><circle cx="9" cy="9" r="6" fill="none" stroke="#eee" stroke-width="2"/><path d="M13 13 L19 19" stroke="#eee" stroke-width="2"/></svg>
<div style="left:2910.0px;top:1144.9px;font:normal 26px/1 'Liberation Sans',sans-serif;color:#c8c8c8;">Search</div>
<div style="left:2880.0px;top:1187.0px;width:930.0px;height:854.0px;background:#232323;"></div>
<div style="left:2880.0px;top:1187.0px;width:930.0px;height:34.0px;background:#262626;"></div>
<div style="left:2977.0px;top:1187.0px;width:1.2px;height:34.0px;background:#3a3a3a;"></div>
<div style="left:3499.0px;top:1187.0px;width:1.2px;height:34.0px;background:#3a3a3a;"></div>
<div style="left:3620.0px;top:1187.0px;width:1.2px;height:34.0px;background:#3a3a3a;"></div>
<div style="left:3650.0px;top:1187.0px;width:1.2px;height:34.0px;background:#3a3a3a;"></div>
<div style="left:3770.0px;top:1187.0px;width:1.2px;height:34.0px;background:#3a3a3a;"></div>
<div style="left:2880.0px;top:1220.0px;width:930.0px;height:1.2px;background:#3a3a3a;"></div>
<div style="left:2887.5px;top:1196.8px;font:normal 25.5px/1 'Liberation Sans',sans-serif;color:#e8e8e8;">Current</div>
<div style="left:2986.5px;top:1196.8px;font:normal 25.5px/1 'Liberation Sans',sans-serif;color:#e8e8e8;">Layer</div>
<div style="left:3532.0px;top:1196.8px;font:normal 25.5px/1 'Liberation Sans',sans-serif;color:#e8e8e8;">On</div>
<div style="left:3660.6px;top:1196.8px;font:normal 25.5px/1 'Liberation Sans',sans-serif;color:#e8e8e8;">Material</div>
<div style="left:3780.0px;top:1196.8px;font:normal 25.5px/1 'Liberation Sans',sans-serif;color:#e8e8e8;">Lir</div>
<div style="left:2880.0px;top:1263.0px;width:930.0px;height:1.2px;background:repeating-linear-gradient(90deg,#555 0 1.5px,transparent 1.5px 4px);"></div>
<div style="left:3029.0px;top:1233.0px;font:normal 25.6px/1 'Liberation Sans',sans-serif;color:#f0f0f0;">1_Pocket_2mm deep</div>
<svg style="position:absolute;left:3537.0px;top:1232.8px;" width="18" height="22" viewBox="0 0 18 22"><path d="M9 1 C3 1 2 7 4 10 C6 12 6.5 13 6.5 15 L11.5 15 C11.5 13 12 12 14 10 C16 7 15 1 9 1Z" fill="#ffd400"/><rect x="6.5" y="15.5" width="5" height="3.5" rx="1" fill="#d89a20"/></svg>
<svg style="position:absolute;left:3596.0px;top:1231.8px;" width="22" height="22" viewBox="0 0 22 22"><path d="M13 10 L13 6 A4 4 0 0 1 21 6 L21 8" fill="none" stroke="#e8e8e8" stroke-width="1.5"/><rect x="2" y="9" width="13" height="12" rx="1" fill="#f6d848"/></svg>
<div style="left:3623px;top:1225.5px;width:26px;height:34px;background:#0000ff;border-top:2px solid #ddd;border-bottom:2px solid #ddd"></div>
<svg style="position:absolute;left:3652.0px;top:1229.8px;" width="26" height="26" viewBox="0 0 26 26"><circle cx="13" cy="13" r="10" fill="none" stroke="#bbb" stroke-width="1.5"/></svg>
<div style="left:3773.0px;top:1232.7px;font:normal 26px/1 'Liberation Sans',sans-serif;color:#f0f0f0;width:37px;overflow:hidden">Co</div>
<div style="left:2880.0px;top:1305.0px;width:930.0px;height:1.2px;background:repeating-linear-gradient(90deg,#555 0 1.5px,transparent 1.5px 4px);"></div>
<div style="left:3029.0px;top:1275.0px;font:normal 25.6px/1 'Liberation Sans',sans-serif;color:#f0f0f0;">1_Pocket_7mm deep</div>
<svg style="position:absolute;left:3537.0px;top:1274.8px;" width="18" height="22" viewBox="0 0 18 22"><path d="M9 1 C3 1 2 7 4 10 C6 12 6.5 13 6.5 15 L11.5 15 C11.5 13 12 12 14 10 C16 7 15 1 9 1Z" fill="#ffd400"/><rect x="6.5" y="15.5" width="5" height="3.5" rx="1" fill="#d89a20"/></svg>
<svg style="position:absolute;left:3596.0px;top:1273.8px;" width="22" height="22" viewBox="0 0 22 22"><path d="M13 10 L13 6 A4 4 0 0 1 21 6 L21 8" fill="none" stroke="#e8e8e8" stroke-width="1.5"/><rect x="2" y="9" width="13" height="12" rx="1" fill="#f6d848"/></svg>
<div style="left:3623px;top:1267.5px;width:26px;height:34px;background:#0000ff;border-top:2px solid #ddd;border-bottom:2px solid #ddd"></div>
<svg style="position:absolute;left:3652.0px;top:1271.8px;" width="26" height="26" viewBox="0 0 26 26"><circle cx="13" cy="13" r="10" fill="none" stroke="#bbb" stroke-width="1.5"/></svg>
<div style="left:3773.0px;top:1274.7px;font:normal 26px/1 'Liberation Sans',sans-serif;color:#f0f0f0;width:37px;overflow:hidden">Co</div>
<div style="left:2880.0px;top:1347.0px;width:930.0px;height:1.2px;background:repeating-linear-gradient(90deg,#555 0 1.5px,transparent 1.5px 4px);"></div>
<div style="left:3029.0px;top:1317.0px;font:normal 25.6px/1 'Liberation Sans',sans-serif;color:#f0f0f0;">2_Ball groove_ 6mm deep</div>
<svg style="position:absolute;left:3537.0px;top:1316.8px;" width="18" height="22" viewBox="0 0 18 22"><path d="M9 1 C3 1 2 7 4 10 C6 12 6.5 13 6.5 15 L11.5 15 C11.5 13 12 12 14 10 C16 7 15 1 9 1Z" fill="#ffd400"/><rect x="6.5" y="15.5" width="5" height="3.5" rx="1" fill="#d89a20"/></svg>
<svg style="position:absolute;left:3596.0px;top:1315.8px;" width="22" height="22" viewBox="0 0 22 22"><path d="M13 10 L13 6 A4 4 0 0 1 21 6 L21 8" fill="none" stroke="#e8e8e8" stroke-width="1.5"/><rect x="2" y="9" width="13" height="12" rx="1" fill="#f6d848"/></svg>
<div style="left:3623px;top:1309.5px;width:26px;height:34px;background:#ff9c00;border-top:2px solid #ddd;border-bottom:2px solid #ddd"></div>
<svg style="position:absolute;left:3652.0px;top:1313.8px;" width="26" height="26" viewBox="0 0 26 26"><circle cx="13" cy="13" r="10" fill="none" stroke="#bbb" stroke-width="1.5"/></svg>
<div style="left:3773.0px;top:1316.7px;font:normal 26px/1 'Liberation Sans',sans-serif;color:#f0f0f0;width:37px;overflow:hidden">Co</div>
<div style="left:2880.0px;top:1389.0px;width:930.0px;height:1.2px;background:repeating-linear-gradient(90deg,#555 0 1.5px,transparent 1.5px 4px);"></div>
<div style="left:3004.0px;top:1359.0px;font:normal 25.6px/1 'Liberation Sans',sans-serif;color:#f0f0f0;">MATERIALS</div>
<svg style="position:absolute;left:2988.0px;top:1360.8px;" width="12" height="16" viewBox="0 0 12 16"><path d="M2 2 L10 8 L2 14Z" fill="none" stroke="#ccc" stroke-width="1.5"/></svg>
<svg style="position:absolute;left:3537.0px;top:1358.8px;" width="18" height="22" viewBox="0 0 18 22"><path d="M9 1 C3 1 2 7 4 10 C6 12 6.5 13 6.5 15 L11.5 15 C11.5 13 12 12 14 10 C16 7 15 1 9 1Z" fill="#ffd400"/><rect x="6.5" y="15.5" width="5" height="3.5" rx="1" fill="#d89a20"/></svg>
<svg style="position:absolute;left:3596.0px;top:1357.8px;" width="22" height="22" viewBox="0 0 22 22"><path d="M13 10 L13 6 A4 4 0 0 1 21 6 L21 8" fill="none" stroke="#e8e8e8" stroke-width="1.5"/><rect x="2" y="9" width="13" height="12" rx="1" fill="#f6d848"/></svg>
<div style="left:3623px;top:1351.5px;width:26px;height:34px;background:#000000;border-top:2px solid #ddd;border-bottom:2px solid #ddd"></div>
<svg style="position:absolute;left:3652.0px;top:1355.8px;" width="26" height="26" viewBox="0 0 26 26"><circle cx="13" cy="13" r="10" fill="none" stroke="#bbb" stroke-width="1.5"/></svg>
<div style="left:3773.0px;top:1358.7px;font:normal 26px/1 'Liberation Sans',sans-serif;color:#f0f0f0;width:37px;overflow:hidden">Co</div>
<div style="left:2880.0px;top:1431.0px;width:930.0px;height:1.2px;background:repeating-linear-gradient(90deg,#555 0 1.5px,transparent 1.5px 4px);"></div>
<div style="left:3004.0px;top:1401.0px;font:normal 25.6px/1 'Liberation Sans',sans-serif;color:#f0f0f0;">DRAWING LAYER</div>
<svg style="position:absolute;left:3537.0px;top:1400.8px;" width="18" height="22" viewBox="0 0 18 22"><path d="M9 1 C3 1 2 7 4 10 C6 12 6.5 13 6.5 15 L11.5 15 C11.5 13 12 12 14 10 C16 7 15 1 9 1Z" fill="#ffd400"/><rect x="6.5" y="15.5" width="5" height="3.5" rx="1" fill="#d89a20"/></svg>
<svg style="position:absolute;left:3596.0px;top:1399.8px;" width="22" height="22" viewBox="0 0 22 22"><path d="M13 10 L13 6 A4 4 0 0 1 21 6 L21 8" fill="none" stroke="#e8e8e8" stroke-width="1.5"/><rect x="2" y="9" width="13" height="12" rx="1" fill="#f6d848"/></svg>
<div style="left:3623px;top:1393.5px;width:26px;height:34px;background:#000000;border-top:2px solid #ddd;border-bottom:2px solid #ddd"></div>
<svg style="position:absolute;left:3652.0px;top:1397.8px;" width="26" height="26" viewBox="0 0 26 26"><circle cx="13" cy="13" r="10" fill="none" stroke="#bbb" stroke-width="1.5"/></svg>
<div style="left:3773.0px;top:1400.7px;font:normal 26px/1 'Liberation Sans',sans-serif;color:#f0f0f0;width:37px;overflow:hidden">Co</div>
<div style="left:2880.0px;top:1473.0px;width:930.0px;height:1.2px;background:repeating-linear-gradient(90deg,#555 0 1.5px,transparent 1.5px 4px);"></div>
<div style="left:3004.0px;top:1443.0px;font:bold 25.6px/1 'Liberation Sans',sans-serif;color:#f0f0f0;">_CNC</div>
<svg style="position:absolute;left:2915.0px;top:1440.8px;" width="28" height="24" viewBox="0 0 28 24"><path d="M4 12 L10 20 L24 4" fill="none" stroke="#ddd" stroke-width="2"/></svg>
<svg style="position:absolute;left:2986.0px;top:1446.8px;" width="14" height="14" viewBox="0 0 14 14"><path d="M12 2 L12 12 L2 12Z" fill="#ddd"/></svg>
<div style="left:3623px;top:1435.5px;width:26px;height:34px;background:#000000;border-top:2px solid #ddd;border-bottom:2px solid #ddd"></div>
<svg style="position:absolute;left:3652.0px;top:1439.8px;" width="26" height="26" viewBox="0 0 26 26"><circle cx="13" cy="13" r="10" fill="none" stroke="#bbb" stroke-width="1.5"/></svg>
<div style="left:3773.0px;top:1442.7px;font:bold 26px/1 'Liberation Sans',sans-serif;color:#f0f0f0;width:37px;overflow:hidden">Co</div>
<div style="left:2880.0px;top:1515.0px;width:930.0px;height:1.2px;background:repeating-linear-gradient(90deg,#555 0 1.5px,transparent 1.5px 4px);"></div>
<div style="left:3029.0px;top:1485.0px;font:normal 25.6px/1 'Liberation Sans',sans-serif;color:#f0f0f0;">7</div>
<svg style="position:absolute;left:3537.0px;top:1484.8px;" width="18" height="22" viewBox="0 0 18 22"><path d="M9 1 C3 1 2 7 4 10 C6 12 6.5 13 6.5 15 L11.5 15 C11.5 13 12 12 14 10 C16 7 15 1 9 1Z" fill="#7aa8f0"/><rect x="6.5" y="15.5" width="5" height="3.5" rx="1" fill="#d89a20"/></svg>
<svg style="position:absolute;left:3596.0px;top:1483.8px;" width="22" height="22" viewBox="0 0 22 22"><path d="M13 10 L13 6 A4 4 0 0 1 21 6 L21 8" fill="none" stroke="#e8e8e8" stroke-width="1.5"/><rect x="2" y="9" width="13" height="12" rx="1" fill="#f6d848"/></svg>
<div style="left:3623px;top:1477.5px;width:26px;height:34px;background:#ff3300;border-top:2px solid #ddd;border-bottom:2px solid #ddd"></div>
<svg style="position:absolute;left:3652.0px;top:1481.8px;" width="26" height="26" viewBox="0 0 26 26"><circle cx="13" cy="13" r="10" fill="none" stroke="#bbb" stroke-width="1.5"/></svg>
<div style="left:3773.0px;top:1484.7px;font:normal 26px/1 'Liberation Sans',sans-serif;color:#f0f0f0;width:37px;overflow:hidden">Co</div>
<div style="left:2880.0px;top:1557.0px;width:930.0px;height:1.2px;background:repeating-linear-gradient(90deg,#555 0 1.5px,transparent 1.5px 4px);"></div>
<div style="left:3029.0px;top:1527.0px;font:normal 25.6px/1 'Liberation Sans',sans-serif;color:#f0f0f0;">8</div>
<svg style="position:absolute;left:3537.0px;top:1526.8px;" width="18" height="22" viewBox="0 0 18 22"><path d="M9 1 C3 1 2 7 4 10 C6 12 6.5 13 6.5 15 L11.5 15 C11.5 13 12 12 14 10 C16 7 15 1 9 1Z" fill="#ffd400"/><rect x="6.5" y="15.5" width="5" height="3.5" rx="1" fill="#d89a20"/></svg>
<svg style="position:absolute;left:3596.0px;top:1525.8px;" width="22" height="22" viewBox="0 0 22 22"><path d="M13 10 L13 6 A4 4 0 0 1 21 6 L21 8" fill="none" stroke="#e8e8e8" stroke-width="1.5"/><rect x="2" y="9" width="13" height="12" rx="1" fill="#f6d848"/></svg>
<div style="left:3623px;top:1519.5px;width:26px;height:34px;background:#0000ff;border-top:2px solid #ddd;border-bottom:2px solid #ddd"></div>
<svg style="position:absolute;left:3652.0px;top:1523.8px;" width="26" height="26" viewBox="0 0 26 26"><circle cx="13" cy="13" r="10" fill="none" stroke="#bbb" stroke-width="1.5"/></svg>
<div style="left:3773.0px;top:1526.7px;font:normal 26px/1 'Liberation Sans',sans-serif;color:#f0f0f0;width:37px;overflow:hidden">Co</div>
<div style="left:2880.0px;top:1599.0px;width:930.0px;height:1.2px;background:repeating-linear-gradient(90deg,#555 0 1.5px,transparent 1.5px 4px);"></div>
<div style="left:3029.0px;top:1569.0px;font:normal 25.6px/1 'Liberation Sans',sans-serif;color:#f0f0f0;">9</div>
<svg style="position:absolute;left:3537.0px;top:1568.8px;" width="18" height="22" viewBox="0 0 18 22"><path d="M9 1 C3 1 2 7 4 10 C6 12 6.5 13 6.5 15 L11.5 15 C11.5 13 12 12 14 10 C16 7 15 1 9 1Z" fill="#ffd400"/><rect x="6.5" y="15.5" width="5" height="3.5" rx="1" fill="#d89a20"/></svg>
<svg style="position:absolute;left:3596.0px;top:1567.8px;" width="22" height="22" viewBox="0 0 22 22"><path d="M13 10 L13 6 A4 4 0 0 1 21 6 L21 8" fill="none" stroke="#e8e8e8" stroke-width="1.5"/><rect x="2" y="9" width="13" height="12" rx="1" fill="#f6d848"/></svg>
<div style="left:3623px;top:1561.5px;width:26px;height:34px;background:#66ff00;border-top:2px solid #ddd;border-bottom:2px solid #ddd"></div>
<svg style="position:absolute;left:3652.0px;top:1565.8px;" width="26" height="26" viewBox="0 0 26 26"><circle cx="13" cy="13" r="10" fill="none" stroke="#bbb" stroke-width="1.5"/></svg>
<div style="left:3773.0px;top:1568.7px;font:normal 26px/1 'Liberation Sans',sans-serif;color:#f0f0f0;width:37px;overflow:hidden">Co</div>
<div style="left:2880.0px;top:1641.0px;width:930.0px;height:1.2px;background:repeating-linear-gradient(90deg,#555 0 1.5px,transparent 1.5px 4px);"></div>
<div style="left:3004.0px;top:1611.0px;font:normal 25.6px/1 'Liberation Sans',sans-serif;color:#f0f0f0;">_TOOLPATH</div>
<svg style="position:absolute;left:2986.0px;top:1614.8px;" width="14" height="14" viewBox="0 0 14 14"><path d="M12 2 L12 12 L2 12Z" fill="#ddd"/></svg>
<svg style="position:absolute;left:3537.0px;top:1610.8px;" width="18" height="22" viewBox="0 0 18 22"><path d="M9 1 C3 1 2 7 4 10 C6 12 6.5 13 6.5 15 L11.5 15 C11.5 13 12 12 14 10 C16 7 15 1 9 1Z" fill="#ffd400"/><rect x="6.5" y="15.5" width="5" height="3.5" rx="1" fill="#d89a20"/></svg>
<svg style="position:absolute;left:3596.0px;top:1609.8px;" width="22" height="22" viewBox="0 0 22 22"><path d="M13 10 L13 6 A4 4 0 0 1 21 6 L21 8" fill="none" stroke="#e8e8e8" stroke-width="1.5"/><rect x="2" y="9" width="13" height="12" rx="1" fill="#f6d848"/></svg>
<div style="left:3623px;top:1603.5px;width:26px;height:34px;background:#000000;border-top:2px solid #ddd;border-bottom:2px solid #ddd"></div>
<svg style="position:absolute;left:3652.0px;top:1607.8px;" width="26" height="26" viewBox="0 0 26 26"><circle cx="13" cy="13" r="10" fill="none" stroke="#bbb" stroke-width="1.5"/></svg>
<div style="left:3773.0px;top:1610.7px;font:normal 26px/1 'Liberation Sans',sans-serif;color:#f0f0f0;width:37px;overflow:hidden">Co</div>
<div style="left:2880.0px;top:1642.0px;width:930.0px;height:40.0px;background:#4d8ef6;"></div>
<div style="left:2880.0px;top:1683.0px;width:930.0px;height:1.2px;background:repeating-linear-gradient(90deg,#555 0 1.5px,transparent 1.5px 4px);"></div>
<div style="left:3029.0px;top:1653.0px;font:normal 25.6px/1 'Liberation Sans',sans-serif;color:#f0f0f0;">0_Base</div>
<svg style="position:absolute;left:3537.0px;top:1652.8px;" width="18" height="22" viewBox="0 0 18 22"><path d="M9 1 C3 1 2 7 4 10 C6 12 6.5 13 6.5 15 L11.5 15 C11.5 13 12 12 14 10 C16 7 15 1 9 1Z" fill="#ffd400"/><rect x="6.5" y="15.5" width="5" height="3.5" rx="1" fill="#d89a20"/></svg>
<svg style="position:absolute;left:3596.0px;top:1651.8px;" width="22" height="22" viewBox="0 0 22 22"><path d="M13 10 L13 6 A4 4 0 0 1 21 6 L21 8" fill="none" stroke="#e8e8e8" stroke-width="1.5"/><rect x="2" y="9" width="13" height="12" rx="1" fill="#f6d848"/></svg>
<div style="left:3623px;top:1645.5px;width:26px;height:34px;background:#ff9c00;border-top:2px solid #ddd;border-bottom:2px solid #ddd"></div>
<svg style="position:absolute;left:3652.0px;top:1649.8px;" width="26" height="26" viewBox="0 0 26 26"><circle cx="13" cy="13" r="10" fill="#222" stroke="#bbb" stroke-width="1.5"/></svg>
<div style="left:3773.0px;top:1652.7px;font:normal 26px/1 'Liberation Sans',sans-serif;color:#f0f0f0;width:37px;overflow:hidden">Co</div>
<div style="left:2880.0px;top:1725.0px;width:930.0px;height:1.2px;background:repeating-linear-gradient(90deg,#555 0 1.5px,transparent 1.5px 4px);"></div>
<div style="left:3029.0px;top:1695.0px;font:normal 25.6px/1 'Liberation Sans',sans-serif;color:#f0f0f0;">1_Deep_Cutout_Border</div>
<svg style="position:absolute;left:3537.0px;top:1694.8px;" width="18" height="22" viewBox="0 0 18 22"><path d="M9 1 C3 1 2 7 4 10 C6 12 6.5 13 6.5 15 L11.5 15 C11.5 13 12 12 14 10 C16 7 15 1 9 1Z" fill="#ffd400"/><rect x="6.5" y="15.5" width="5" height="3.5" rx="1" fill="#d89a20"/></svg>
<svg style="position:absolute;left:3596.0px;top:1693.8px;" width="22" height="22" viewBox="0 0 22 22"><path d="M13 10 L13 6 A4 4 0 0 1 21 6 L21 8" fill="none" stroke="#e8e8e8" stroke-width="1.5"/><rect x="2" y="9" width="13" height="12" rx="1" fill="#f6d848"/></svg>
<div style="left:3623px;top:1687.5px;width:26px;height:34px;background:#4b0082;border-top:2px solid #ddd;border-bottom:2px solid #ddd"></div>
<svg style="position:absolute;left:3652.0px;top:1691.8px;" width="26" height="26" viewBox="0 0 26 26"><circle cx="13" cy="13" r="10" fill="none" stroke="#bbb" stroke-width="1.5"/></svg>
<div style="left:3773.0px;top:1694.7px;font:normal 26px/1 'Liberation Sans',sans-serif;color:#f0f0f0;width:37px;overflow:hidden">Co</div>
<div style="left:2880.0px;top:1767.0px;width:930.0px;height:1.2px;background:repeating-linear-gradient(90deg,#555 0 1.5px,transparent 1.5px 4px);"></div>
<div style="left:3029.0px;top:1737.0px;font:normal 25.6px/1 'Liberation Sans',sans-serif;color:#f0f0f0;">2_Semi_Depth_Hole</div>
<svg style="position:absolute;left:3537.0px;top:1736.8px;" width="18" height="22" viewBox="0 0 18 22"><path d="M9 1 C3 1 2 7 4 10 C6 12 6.5 13 6.5 15 L11.5 15 C11.5 13 12 12 14 10 C16 7 15 1 9 1Z" fill="#ffd400"/><rect x="6.5" y="15.5" width="5" height="3.5" rx="1" fill="#d89a20"/></svg>
<svg style="position:absolute;left:3596.0px;top:1735.8px;" width="22" height="22" viewBox="0 0 22 22"><path d="M13 10 L13 6 A4 4 0 0 1 21 6 L21 8" fill="none" stroke="#e8e8e8" stroke-width="1.5"/><rect x="2" y="9" width="13" height="12" rx="1" fill="#f6d848"/></svg>
<div style="left:3623px;top:1729.5px;width:26px;height:34px;background:#ff9c00;border-top:2px solid #ddd;border-bottom:2px solid #ddd"></div>
<svg style="position:absolute;left:3652.0px;top:1733.8px;" width="26" height="26" viewBox="0 0 26 26"><circle cx="13" cy="13" r="10" fill="none" stroke="#bbb" stroke-width="1.5"/></svg>
<div style="left:3773.0px;top:1736.7px;font:normal 26px/1 'Liberation Sans',sans-serif;color:#f0f0f0;width:37px;overflow:hidden">Co</div>
<div style="left:2880.0px;top:1809.0px;width:930.0px;height:1.2px;background:repeating-linear-gradient(90deg,#555 0 1.5px,transparent 1.5px 4px);"></div>
<div style="left:3029.0px;top:1779.0px;font:normal 25.6px/1 'Liberation Sans',sans-serif;color:#f0f0f0;">3_Deep_Joint_Pocketing</div>
<svg style="position:absolute;left:3537.0px;top:1778.8px;" width="18" height="22" viewBox="0 0 18 22"><path d="M9 1 C3 1 2 7 4 10 C6 12 6.5 13 6.5 15 L11.5 15 C11.5 13 12 12 14 10 C16 7 15 1 9 1Z" fill="#ffd400"/><rect x="6.5" y="15.5" width="5" height="3.5" rx="1" fill="#d89a20"/></svg>
<svg style="position:absolute;left:3596.0px;top:1777.8px;" width="22" height="22" viewBox="0 0 22 22"><path d="M13 10 L13 6 A4 4 0 0 1 21 6 L21 8" fill="none" stroke="#e8e8e8" stroke-width="1.5"/><rect x="2" y="9" width="13" height="12" rx="1" fill="#f6d848"/></svg>
<div style="left:3623px;top:1771.5px;width:26px;height:34px;background:#007700;border-top:2px solid #ddd;border-bottom:2px solid #ddd"></div>
<svg style="position:absolute;left:3652.0px;top:1775.8px;" width="26" height="26" viewBox="0 0 26 26"><circle cx="13" cy="13" r="10" fill="none" stroke="#bbb" stroke-width="1.5"/></svg>
<div style="left:3773.0px;top:1778.7px;font:normal 26px/1 'Liberation Sans',sans-serif;color:#f0f0f0;width:37px;overflow:hidden">Co</div>
<div style="left:2880.0px;top:1851.0px;width:930.0px;height:1.2px;background:repeating-linear-gradient(90deg,#555 0 1.5px,transparent 1.5px 4px);"></div>
<div style="left:3029.0px;top:1821.0px;font:normal 25.6px/1 'Liberation Sans',sans-serif;color:#f0f0f0;">4_Deep_Cutout_Hole</div>
<svg style="position:absolute;left:3537.0px;top:1820.8px;" width="18" height="22" viewBox="0 0 18 22"><path d="M9 1 C3 1 2 7 4 10 C6 12 6.5 13 6.5 15 L11.5 15 C11.5 13 12 12 14 10 C16 7 15 1 9 1Z" fill="#ffd400"/><rect x="6.5" y="15.5" width="5" height="3.5" rx="1" fill="#d89a20"/></svg>
<svg style="position:absolute;left:3596.0px;top:1819.8px;" width="22" height="22" viewBox="0 0 22 22"><path d="M13 10 L13 6 A4 4 0 0 1 21 6 L21 8" fill="none" stroke="#e8e8e8" stroke-width="1.5"/><rect x="2" y="9" width="13" height="12" rx="1" fill="#f6d848"/></svg>
<div style="left:3623px;top:1813.5px;width:26px;height:34px;background:#0000ff;border-top:2px solid #ddd;border-bottom:2px solid #ddd"></div>
<svg style="position:absolute;left:3652.0px;top:1817.8px;" width="26" height="26" viewBox="0 0 26 26"><circle cx="13" cy="13" r="10" fill="none" stroke="#bbb" stroke-width="1.5"/></svg>
<div style="left:3773.0px;top:1820.7px;font:normal 26px/1 'Liberation Sans',sans-serif;color:#f0f0f0;width:37px;overflow:hidden">Co</div>
<div style="left:2880.0px;top:1893.0px;width:930.0px;height:1.2px;background:repeating-linear-gradient(90deg,#555 0 1.5px,transparent 1.5px 4px);"></div>
<div style="left:3029.0px;top:1863.0px;font:normal 25.6px/1 'Liberation Sans',sans-serif;color:#f0f0f0;">5_Deep_Joint_Profiling</div>
<svg style="position:absolute;left:3537.0px;top:1862.8px;" width="18" height="22" viewBox="0 0 18 22"><path d="M9 1 C3 1 2 7 4 10 C6 12 6.5 13 6.5 15 L11.5 15 C11.5 13 12 12 14 10 C16 7 15 1 9 1Z" fill="#ffd400"/><rect x="6.5" y="15.5" width="5" height="3.5" rx="1" fill="#d89a20"/></svg>
<svg style="position:absolute;left:3596.0px;top:1861.8px;" width="22" height="22" viewBox="0 0 22 22"><path d="M13 10 L13 6 A4 4 0 0 1 21 6 L21 8" fill="none" stroke="#e8e8e8" stroke-width="1.5"/><rect x="2" y="9" width="13" height="12" rx="1" fill="#f6d848"/></svg>
<div style="left:3623px;top:1855.5px;width:26px;height:34px;background:#ff0000;border-top:2px solid #ddd;border-bottom:2px solid #ddd"></div>
<svg style="position:absolute;left:3652.0px;top:1859.8px;" width="26" height="26" viewBox="0 0 26 26"><circle cx="13" cy="13" r="10" fill="none" stroke="#bbb" stroke-width="1.5"/></svg>
<div style="left:3773.0px;top:1862.7px;font:normal 26px/1 'Liberation Sans',sans-serif;color:#f0f0f0;width:37px;overflow:hidden">Co</div>
<div style="left:2880.0px;top:1935.0px;width:930.0px;height:1.2px;background:repeating-linear-gradient(90deg,#555 0 1.5px,transparent 1.5px 4px);"></div>
<div style="left:3029.0px;top:1905.0px;font:normal 25.6px/1 'Liberation Sans',sans-serif;color:#f0f0f0;">6_3D_Parts</div>
<svg style="position:absolute;left:3537.0px;top:1904.8px;" width="18" height="22" viewBox="0 0 18 22"><path d="M9 1 C3 1 2 7 4 10 C6 12 6.5 13 6.5 15 L11.5 15 C11.5 13 12 12 14 10 C16 7 15 1 9 1Z" fill="#7aa8f0"/><rect x="6.5" y="15.5" width="5" height="3.5" rx="1" fill="#d89a20"/></svg>
<svg style="position:absolute;left:3596.0px;top:1903.8px;" width="22" height="22" viewBox="0 0 22 22"><path d="M13 10 L13 6 A4 4 0 0 1 21 6 L21 8" fill="none" stroke="#e8e8e8" stroke-width="1.5"/><rect x="2" y="9" width="13" height="12" rx="1" fill="#f6d848"/></svg>
<div style="left:3623px;top:1897.5px;width:26px;height:34px;background:#000000;border-top:2px solid #ddd;border-bottom:2px solid #ddd"></div>
<svg style="position:absolute;left:3652.0px;top:1901.8px;" width="26" height="26" viewBox="0 0 26 26"><circle cx="13" cy="13" r="10" fill="none" stroke="#bbb" stroke-width="1.5"/></svg>
<div style="left:3773.0px;top:1904.7px;font:normal 26px/1 'Liberation Sans',sans-serif;color:#f0f0f0;width:37px;overflow:hidden">Co</div>
<div style="left:2880.0px;top:1977.0px;width:930.0px;height:1.2px;background:repeating-linear-gradient(90deg,#555 0 1.5px,transparent 1.5px 4px);"></div>
<div style="left:3029.0px;top:1947.0px;font:normal 25.6px/1 'Liberation Sans',sans-serif;color:#f0f0f0;">7_Part_Names</div>
<svg style="position:absolute;left:3537.0px;top:1946.8px;" width="18" height="22" viewBox="0 0 18 22"><path d="M9 1 C3 1 2 7 4 10 C6 12 6.5 13 6.5 15 L11.5 15 C11.5 13 12 12 14 10 C16 7 15 1 9 1Z" fill="#ffd400"/><rect x="6.5" y="15.5" width="5" height="3.5" rx="1" fill="#d89a20"/></svg>
<svg style="position:absolute;left:3596.0px;top:1945.8px;" width="22" height="22" viewBox="0 0 22 22"><path d="M13 10 L13 6 A4 4 0 0 1 21 6 L21 8" fill="none" stroke="#e8e8e8" stroke-width="1.5"/><rect x="2" y="9" width="13" height="12" rx="1" fill="#f6d848"/></svg>
<div style="left:3623px;top:1939.5px;width:26px;height:34px;background:#e8e8e8;border-top:2px solid #ddd;border-bottom:2px solid #ddd"></div>
<svg style="position:absolute;left:3652.0px;top:1943.8px;" width="26" height="26" viewBox="0 0 26 26"><circle cx="13" cy="13" r="10" fill="none" stroke="#bbb" stroke-width="1.5"/></svg>
<div style="left:3773.0px;top:1946.7px;font:normal 26px/1 'Liberation Sans',sans-serif;color:#f0f0f0;width:37px;overflow:hidden">Co</div>
<div style="left:3810.0px;top:1221.0px;width:26.0px;height:820.0px;background:#232323;"></div>
<div style="left:3819.0px;top:1563.5px;width:10.0px;height:439.0px;background:#777;border-radius:5px"></div>
<div style="left:2890.5px;top:2022.0px;width:627.0px;height:12.0px;background:#777;border-radius:6px"></div>
<div style="left:786.0px;top:1996.0px;width:2035.0px;height:45.0px;background:#3c3c3c;"></div>
<div style="left:786px;top:1996px;width:119px;height:43px;background:#333;border:1.5px solid #6a6a6a;border-top:none"></div>
<div style="left:806.0px;top:2008.3px;font:normal 25.5px/1 'Liberation Sans',sans-serif;color:#f0f0f0;">Parallel</div>
<div style="left:921.0px;top:2008.3px;font:normal 25.5px/1 'Liberation Sans',sans-serif;color:#8c8c8c;">Perspective</div>
<div style="left:1083.0px;top:2008.3px;font:normal 25.5px/1 'Liberation Sans',sans-serif;color:#8c8c8c;">Top</div>
<div style="left:1160.0px;top:2008.3px;font:normal 25.5px/1 'Liberation Sans',sans-serif;color:#8c8c8c;">Right</div>
<div style="left:1257.5px;top:2007.2px;font:bold 28px/1 'Liberation Sans',sans-serif;color:#e0e0e0;transform:translateX(-50%);">+</div>
<div style="left:0.0px;top:2041.0px;width:3839.0px;height:49.0px;background:#333333;"></div>
<div style="left:0.0px;top:2086.0px;width:3839.0px;height:4.0px;background:#3e3e3e;"></div>
<div style="left:14px;top:2051px;width:27px;height:26px;border:3px solid #c8c8c8;background:#333"></div>
<div style="left:17.0px;top:2054.0px;width:8.0px;height:20.0px;background:#c8c8c8;"></div>
<div style="left:48.3px;top:2043.0px;width:134.3px;height:40.0px;background:#3f5a96;border-radius:3px"></div>
<div style="left:115.5px;top:2051.9px;font:bold 26px/1 'Liberation Sans',sans-serif;color:#f0f0f0;transform:translateX(-50%);">World</div>
<div style="left:215.0px;top:2051.9px;font:normal 26px/1 'Liberation Sans',sans-serif;color:#d8d8d8;">x -1944.179  y 1760.381  z 0</div>
<div style="left:581.0px;top:2051.9px;font:normal 26px/1 'Liberation Sans',sans-serif;color:#d8d8d8;">Millimeters</div>
<div style="left:728px;top:2053px;width:24px;height:24px;background:#ff0000;border:1.5px solid #fff"></div>
<div style="left:763.0px;top:2051.9px;font:normal 26px/1 'Liberation Sans',sans-serif;color:#d8d8d8;">.../Joint Profil...</div>
<div style="left:1025.5px;top:2051.9px;font:normal 26px/1 'Liberation Sans',sans-serif;color:#d8d8d8;">Grid Snap</div>
<div style="left:1176.0px;top:2051.9px;font:normal 26px/1 'Liberation Sans',sans-serif;color:#d8d8d8;">Ortho</div>
<div style="left:1279.7px;top:2051.9px;font:normal 26px/1 'Liberation Sans',sans-serif;color:#d8d8d8;">Planar</div>
<div style="left:1496.7px;top:2051.9px;font:normal 26px/1 'Liberation Sans',sans-serif;color:#d8d8d8;">SmartTrack</div>
<div style="left:1669.4px;top:2051.9px;font:normal 26px/1 'Liberation Sans',sans-serif;color:#d8d8d8;">Gumball (CPlane)</div>
<div style="left:1936.0px;top:2051.9px;font:normal 26px/1 'Liberation Sans',sans-serif;color:#d8d8d8;">Auto CPlane (Object)</div>
<div style="left:2233.0px;top:2051.9px;font:normal 26px/1 'Liberation Sans',sans-serif;color:#d8d8d8;">Record History</div>
<div style="left:1372.4px;top:2043.0px;width:103.0px;height:40.0px;background:#3f5a96;border-radius:3px"></div>
<div style="left:1423.8px;top:2051.9px;font:bold 26px/1 'Liberation Sans',sans-serif;color:#f0f0f0;transform:translateX(-50%);">Osnap</div>
<div style="left:2429.7px;top:2043.0px;width:87.0px;height:40.0px;background:#3f5a96;border-radius:3px"></div>
<div style="left:2473.2px;top:2051.9px;font:bold 26px/1 'Liberation Sans',sans-serif;color:#f0f0f0;transform:translateX(-50%);">Filter</div>
<svg style="position:absolute;left:1900.0px;top:2052.0px;" width="14" height="20" viewBox="0 0 14 20"><rect x="1" y="8" width="12" height="11" fill="#ccc"/><path d="M3 9 L3 5 A4 4 0 0 1 11 5 L11 9" fill="none" stroke="#ccc" stroke-width="2"/></svg>
<div style="left:2536.6px;top:2051.9px;font:normal 26px/1 'Liberation Sans',sans-serif;color:#d8d8d8;">Selected object layer: Toolpath::Joint Profiling_Through</div>
<div style="left:3799px;top:2051px;width:27px;height:26px;border:3px solid #c8c8c8;background:#333"></div>
<div style="left:3802.0px;top:2054.0px;width:8.0px;height:20.0px;background:#c8c8c8;"></div>
<div style="left:0.0px;top:2090.0px;width:3839.0px;height:69.0px;background:#1f1f1f;"></div>
<div style="left:0.0px;top:2090.0px;width:3839.0px;height:1.0px;background:#2e2e2e;"></div>
<svg style="position:absolute;left:36.0px;top:2108.0px;" width="34" height="34" viewBox="0 0 34 34"><rect x="7" y="8" width="12" height="20" fill="#f0f0f0"/><rect x="19" y="8" width="12" height="20" fill="#3aa0f0"/><rect x="19" y="8" width="12" height="8" fill="#9ad0ff"/><path d="M2 2 L6 6 M8 1 L8 4 M1 8 L4 8" stroke="#3ab0ff" stroke-width="2"/></svg>
<svg style="position:absolute;left:1304.0px;top:2106.0px;" width="36" height="36" viewBox="0 0 36 36"><rect x="1" y="1" width="16" height="16" fill="#3ab4f2"/><rect x="19" y="1" width="16" height="16" fill="#3ab4f2"/><rect x="1" y="19" width="16" height="16" fill="#2a9ae0"/><rect x="19" y="19" width="16" height="16" fill="#2a9ae0"/></svg>
<div style="left:1360.5px;top:2100px;width:329px;height:48px;background:#2c2c2c;border:1px solid #3a3a3a;border-radius:24px"></div>
<svg style="position:absolute;left:1378.0px;top:2112.0px;" width="26" height="26" viewBox="0 0 26 26"><circle cx="11" cy="11" r="8" fill="none" stroke="#ddd" stroke-width="2.2"/><path d="M17 17 L23 23" stroke="#ddd" stroke-width="2.5"/></svg>
<div style="left:1415.0px;top:2111.9px;font:normal 26px/1 'Liberation Sans',sans-serif;color:#cfcfcf;">Search</div>
<div style="left:2422.0px;top:2096.0px;width:58.0px;height:58.0px;background:#2d2d2d;border-radius:6px"></div>
<svg style="position:absolute;left:1708.0px;top:2106.0px;" width="36" height="36" viewBox="0 0 36 36"><rect x="4" y="10" width="22" height="18" rx="2" fill="#888"/><rect x="10" y="4" width="22" height="18" rx="2" fill="#e8e8e8"/></svg>
<svg style="position:absolute;left:1773.0px;top:2106.0px;" width="36" height="36" viewBox="0 0 36 36"><path d="M2 8 L14 8 L16 11 L34 11 L34 32 L2 32Z" fill="#f7c64a"/><rect x="10" y="22" width="16" height="6" fill="#2a7ad0"/></svg>
<svg style="position:absolute;left:1839.0px;top:2106.0px;" width="36" height="36" viewBox="0 0 36 36"><circle cx="18" cy="18" r="15" fill="none" stroke="#2bd05a" stroke-width="3.5"/><path d="M4 33 L7 25" stroke="#2bd05a" stroke-width="3.5"/><path d="M12 11 Q11 18 17 23 Q22 27 25 24" fill="none" stroke="#2bd05a" stroke-width="3.5"/></svg>
<svg style="position:absolute;left:1905.0px;top:2106.0px;" width="36" height="36" viewBox="0 0 36 36"><circle cx="26" cy="10" r="5" fill="#7b83eb"/><rect x="18" y="14" width="16" height="16" rx="4" fill="#7b83eb"/><rect x="2" y="8" width="22" height="22" rx="3" fill="#5059c9"/><text x="13" y="25" font-size="16" font-weight="bold" fill="#fff" font-family="Liberation Sans" text-anchor="middle">T</text></svg>
<svg style="position:absolute;left:1971.0px;top:2106.0px;" width="36" height="36" viewBox="0 0 36 36"><rect x="14" y="2" width="7" height="14" rx="3.5" fill="#36c5f0"/><rect x="20" y="14" width="14" height="7" rx="3.5" fill="#2eb67d"/><rect x="15" y="20" width="7" height="14" rx="3.5" fill="#ecb22e"/><rect x="2" y="15" width="14" height="7" rx="3.5" fill="#e01e5a"/></svg>
<svg style="position:absolute;left:2037.0px;top:2106.0px;" width="36" height="36" viewBox="0 0 36 36"><circle cx="18" cy="18" r="15" fill="#db4437"/><path d="M18 18 L31 10 A15 15 0 0 1 18 33Z" fill="#0f9d58"/><path d="M18 18 L5 26 A15 15 0 0 1 18 3 Q28 3 31 10Z" fill="#f4b400"/><circle cx="18" cy="18" r="7" fill="#4285f4" stroke="#fff" stroke-width="2"/><circle cx="30" cy="6" r="6" fill="#111"/></svg>
<svg style="position:absolute;left:2103.0px;top:2106.0px;" width="36" height="36" viewBox="0 0 36 36"><circle cx="18" cy="18" r="15" fill="#fff"/><path d="M10 24 Q16 8 28 10 Q20 14 18 26Z" fill="#f06a20"/></svg>
<svg style="position:absolute;left:2169.0px;top:2106.0px;" width="36" height="36" viewBox="0 0 36 36"><rect x="3" y="3" width="30" height="30" rx="8" fill="#e1306c"/><rect x="9" y="9" width="18" height="18" rx="5" fill="none" stroke="#fff" stroke-width="2.5"/><circle cx="18" cy="18" r="4.5" fill="none" stroke="#fff" stroke-width="2.5"/></svg>
<svg style="position:absolute;left:2235.0px;top:2106.0px;" width="36" height="36" viewBox="0 0 36 36"><rect x="3" y="3" width="30" height="30" rx="4" fill="#49021f"/><text x="18" y="25" font-size="17" font-weight="bold" fill="#ff3366" font-family="Liberation Sans" text-anchor="middle">Id</text></svg>
<svg style="position:absolute;left:2301.6px;top:2106.0px;" width="36" height="36" viewBox="0 0 36 36"><rect x="3" y="3" width="30" height="30" rx="4" fill="#b30b00"/><path d="M9 27 Q14 14 18 8 Q22 14 27 27 Q18 20 9 27Z" fill="none" stroke="#fff" stroke-width="2"/></svg>
<svg style="position:absolute;left:2367.0px;top:2106.0px;" width="36" height="36" viewBox="0 0 36 36"><path d="M4 30 L8 8 L16 14 L22 6 L30 18 L32 30Z" fill="#f4f4f4"/><path d="M10 20 L20 22 L14 28Z" fill="#111"/><text x="28" y="12" font-size="11" fill="#fff" font-family="Liberation Sans">8</text></svg>
<svg style="position:absolute;left:2433.0px;top:2106.0px;" width="36" height="36" viewBox="0 0 36 36"><path d="M4 30 L8 8 L16 14 L22 6 L30 18 L32 30Z" fill="#f4f4f4"/><path d="M10 20 L20 22 L14 28Z" fill="#111"/><text x="28" y="12" font-size="11" fill="#fff" font-family="Liberation Sans">8</text></svg>
<svg style="position:absolute;left:2499.6px;top:2106.0px;" width="36" height="36" viewBox="0 0 36 36"><rect x="3" y="3" width="30" height="30" rx="4" fill="#49021f"/><text x="18" y="25" font-size="17" font-weight="bold" fill="#ff3366" font-family="Liberation Sans" text-anchor="middle">Id</text></svg>
<div style="left:1985.0px;top:2150.0px;width:8.0px;height:4.0px;background:#9a9a9a;border-radius:2px"></div>
<div style="left:2051.0px;top:2150.0px;width:8.0px;height:4.0px;background:#9a9a9a;border-radius:2px"></div>
<div style="left:2513.6px;top:2150.0px;width:8.0px;height:4.0px;background:#9a9a9a;border-radius:2px"></div>
<div style="left:2440.0px;top:2149.0px;width:22.0px;height:5.0px;background:#4cc2ff;border-radius:2px"></div>
<svg style="position:absolute;left:3500.0px;top:2113.0px;" width="26" height="20" viewBox="0 0 26 20"><path d="M4 14 L13 5 L22 14" fill="none" stroke="#e8e8e8" stroke-width="2.2"/></svg>
<svg style="position:absolute;left:3546.0px;top:2110.0px;" width="32" height="26" viewBox="0 0 32 26"><path d="M6 20 Q2 20 2 15 Q2 10 8 10 Q10 4 17 4 Q25 4 26 11 Q30 11 30 16 Q30 20 26 20Z" fill="#9a9a9a"/><path d="M4 2 L28 24" stroke="#1f1f1f" stroke-width="3"/><path d="M5 3 L27 23" stroke="#ddd" stroke-width="1.5"/></svg>
<svg style="position:absolute;left:3594.0px;top:2108.0px;" width="30" height="28" viewBox="0 0 30 28"><path d="M3 10 Q15 0 27 10 M7 14 Q15 7 23 14 M11 18 Q15 15 19 18" fill="none" stroke="#e8e8e8" stroke-width="2.2"/><circle cx="15" cy="22" r="2.2" fill="#e8e8e8"/></svg>
<svg style="position:absolute;left:3630.0px;top:2110.0px;" width="30" height="26" viewBox="0 0 30 26"><path d="M3 9 L8 9 L14 3 L14 23 L8 17 L3 17Z" fill="none" stroke="#e8e8e8" stroke-width="2"/><path d="M18 9 L26 17 M26 9 L18 17" stroke="#e8e8e8" stroke-width="2"/></svg>
<div style="left:3774.3px;top:2102.0px;font:normal 18.6px/1 'Liberation Sans',sans-serif;color:#f0f0f0;transform:translateX(-100%);">11:36 PM</div>
<div style="left:3774.3px;top:2125.9px;font:normal 18.6px/1 'Liberation Sans',sans-serif;color:#f0f0f0;transform:translateX(-100%);">10/27/2024</div>
<svg style="position:absolute;left:3786.0px;top:2111.0px;" width="26" height="28" viewBox="0 0 26 28"><path d="M4 20 Q6 18 6 11 Q6 3 13 3 Q20 3 20 11 Q20 18 22 20Z" fill="#6ad0ff"/><path d="M10 23 Q13 27 16 23" fill="#6ad0ff"/></svg>
<div style="left:900px;top:620px;width:703.6px;height:1140px;background:#f0f0f0;border:1px solid #6a6a6a;border-radius:8px;box-shadow:0 0 18px rgba(0,0,0,0.5)"></div>
<div style="left:901px;top:621px;width:701.6px;height:47px;background:#f3f3f3;border-radius:8px 8px 0 0"></div>
<div style="left:911.0px;top:631.6px;font:normal 26.3px/1 'Liberation Sans',sans-serif;color:#8a8a8a;">2 1/2 Axis Profiling</div>
<div style="left:1545px;top:620px;width:58.6px;height:48px;background:#c42b1c;border-radius:0 8px 0 0"></div>
<svg style="position:absolute;left:1563.0px;top:633.0px;" width="22" height="22" viewBox="0 0 22 22"><path d="M2 2 L20 20 M20 2 L2 20" stroke="#fff" stroke-width="1.8"/></svg>
<div style="left:910px;top:680px;width:102.0px;height:26.0px;background:#f0f0f0;border:1px solid #d9d9d9;border-bottom:1px solid #d9d9d9"></div>
<div style="left:1012px;top:680px;width:96.6px;height:26.0px;background:#f0f0f0;border:1px solid #d9d9d9;border-bottom:1px solid #d9d9d9"></div>
<div style="left:1108.6px;top:680px;width:215.0px;height:26.0px;background:#f0f0f0;border:1px solid #d9d9d9;border-bottom:1px solid #d9d9d9"></div>
<div style="left:1323.6px;top:680px;width:183.4px;height:26.0px;background:#f0f0f0;border:1px solid #d9d9d9;border-bottom:1px solid #d9d9d9"></div>
<div style="left:1507px;top:680px;width:86.0px;height:26.0px;background:#f0f0f0;border:1px solid #d9d9d9;border-bottom:1px solid #d9d9d9"></div>
<div style="left:910px;top:706px;width:159.0px;height:27.5px;background:#f0f0f0;border:1px solid #d9d9d9;border-bottom:1px solid #d9d9d9"></div>
<div style="left:1069px;top:706px;width:64.6px;height:27.5px;background:#f0f0f0;border:1px solid #d9d9d9;border-bottom:1px solid #d9d9d9"></div>
<div style="left:1291.5px;top:706px;width:149.5px;height:27.5px;background:#f0f0f0;border:1px solid #d9d9d9;border-bottom:1px solid #d9d9d9"></div>
<div style="left:1441px;top:706px;width:148.0px;height:27.5px;background:#f0f0f0;border:1px solid #d9d9d9;border-bottom:1px solid #d9d9d9"></div>
<div style="left:909px;top:733px;width:683px;height:976.3px;background:#f9f9f9;border:1px solid #dcdcdc"></div>
<div style="left:1133.6px;top:704.5px;width:157.9px;height:30.0px;background:#fbfbfb;border:1px solid #d9d9d9;border-bottom:none"></div>
<div style="left:924.2px;top:687.0px;font:normal 15.6px/1 'Liberation Sans',sans-serif;color:#1a1a1a;">Cut Levels</div>
<div style="left:1027.7px;top:687.0px;font:normal 15.6px/1 'Liberation Sans',sans-serif;color:#1a1a1a;">Entry/Exit</div>
<div style="left:1122.7px;top:687.0px;font:normal 15.6px/1 'Liberation Sans',sans-serif;color:#1a1a1a;">Advanced Cut Parameters</div>
<div style="left:1338.0px;top:687.0px;font:normal 15.6px/1 'Liberation Sans',sans-serif;color:#1a1a1a;">Cornering Parameters</div>
<div style="left:1523.0px;top:687.0px;font:normal 15.6px/1 'Liberation Sans',sans-serif;color:#1a1a1a;">Sorting</div>
<div style="left:927.1px;top:713.0px;font:normal 15.6px/1 'Liberation Sans',sans-serif;color:#1a1a1a;">Control Geometry</div>
<div style="left:1086.7px;top:713.0px;font:normal 15.6px/1 'Liberation Sans',sans-serif;color:#1a1a1a;">Tool</div>
<div style="left:1308.0px;top:713.0px;font:normal 15.6px/1 'Liberation Sans',sans-serif;color:#1a1a1a;">Clearance Plane</div>
<div style="left:1459.9px;top:713.0px;font:normal 15.6px/1 'Liberation Sans',sans-serif;color:#1a1a1a;">Cut Parameters</div>
<div style="left:1152.2px;top:712.1px;font:normal 15.6px/1 'Liberation Sans',sans-serif;color:#1a1a1a;">Feeds &amp; Speeds</div>
<div style="left:928.6px;top:765.4px;width:327.9px;height:107.9px;border:1px solid #dcdcdc;border-radius:2px"></div>
<div style="left:934.5px;top:763.4px;width:143.1px;height:5.0px;background:#f9f9f9;"></div>
<div style="left:937.5px;top:757.6px;font:normal 15.6px/1 'Liberation Sans',sans-serif;color:#1a1a1a;">Spindle Parameters</div>
<div style="left:948.3px;top:792.4px;font:normal 15.6px/1 'Liberation Sans',sans-serif;color:#1a1a1a;">Speed</div>
<div style="left:1063.5px;top:780.6px;width:74.0px;height:34.0px;background:#fff;border:1px solid #e2e2e2;border-bottom:1.5px solid #8a8a8a"></div>
<div style="left:1137.5px;top:780.6px;width:26.0px;height:34.0px;background:#e8e8e8;border:1px solid #c0c0c0"></div>
<div style="left:1138.5px;top:797.1px;width:24.0px;height:1.0px;background:#c0c0c0;"></div>
<svg style="position:absolute;left:1144.5px;top:785.1px;" width="12" height="8" viewBox="0 0 12 8"><path d="M1 7 L6 1.5 L11 7Z" fill="#111"/></svg>
<svg style="position:absolute;left:1144.5px;top:802.1px;" width="12" height="8" viewBox="0 0 12 8"><path d="M1 1 L6 6.5 L11 1Z" fill="#111"/></svg>
<div style="left:1067.0px;top:785.6px;font:normal 15.6px/1 'Liberation Sans',sans-serif;color:#1a1a1a;">12000</div>
<div style="left:1188.0px;top:790.2px;font:normal 15.6px/1 'Liberation Sans',sans-serif;color:#1a1a1a;">RPM</div>
<div style="left:948.3px;top:835.3px;font:normal 15.6px/1 'Liberation Sans',sans-serif;color:#1a1a1a;">Direction</div>
<div style="left:1063.5px;top:832.7px;width:19px;height:19px;border-radius:50%;background:#0560c0"></div>
<div style="left:1069.0px;top:838.2px;width:8px;height:8px;border-radius:50%;background:#fff"></div>
<div style="left:1087.3px;top:834.7px;font:normal 15.6px/1 'Liberation Sans',sans-serif;color:#1a1a1a;">CW</div>
<div style="left:1148.3px;top:832.7px;width:19px;height:19px;border-radius:50%;background:#f4f4f4;border:1.3px solid #555"></div>
<div style="left:1172.4px;top:834.7px;font:normal 15.6px/1 'Liberation Sans',sans-serif;color:#1a1a1a;">CCW</div>
<div style="left:928.6px;top:887.6px;width:327.9px;height:355.4px;border:1px solid #dcdcdc;border-radius:2px"></div>
<div style="left:934.5px;top:885.6px;width:86.7px;height:5.0px;background:#f9f9f9;"></div>
<div style="left:937.5px;top:879.8px;font:normal 15.6px/1 'Liberation Sans',sans-serif;color:#1a1a1a;">Feed Rates</div>
<div style="left:941.9px;top:922.6px;font:normal 15.6px/1 'Liberation Sans',sans-serif;color:#1a1a1a;">Plunge (Pf)</div>
<div style="left:1063.5px;top:912.9px;width:74.0px;height:33.4px;background:#fff;border:1px solid #e2e2e2;border-bottom:1.5px solid #8a8a8a"></div>
<div style="left:1137.5px;top:912.9px;width:26.0px;height:33.4px;background:#e8e8e8;border:1px solid #c0c0c0"></div>
<div style="left:1138.5px;top:929.1px;width:24.0px;height:1.0px;background:#c0c0c0;"></div>
<svg style="position:absolute;left:1144.5px;top:917.2px;" width="12" height="8" viewBox="0 0 12 8"><path d="M1 7 L6 1.5 L11 7Z" fill="#111"/></svg>
<svg style="position:absolute;left:1144.5px;top:933.9px;" width="12" height="8" viewBox="0 0 12 8"><path d="M1 1 L6 6.5 L11 1Z" fill="#111"/></svg>
<div style="left:1067.0px;top:917.9px;font:normal 15.6px/1 'Liberation Sans',sans-serif;color:#1a1a1a;">3413</div>
<div style="left:1187.3px;top:922.6px;font:normal 15.6px/1 'Liberation Sans',sans-serif;color:#1a1a1a;">mm/min</div>
<div style="left:941.9px;top:962.7px;font:normal 15.6px/1 'Liberation Sans',sans-serif;color:#1a1a1a;">Approach (Af)</div>
<div style="left:1063.5px;top:952.96px;width:74.0px;height:33.4px;background:#fff;border:1px solid #e2e2e2;border-bottom:1.5px solid #8a8a8a"></div>
<div style="left:1137.5px;top:952.96px;width:26.0px;height:33.4px;background:#e8e8e8;border:1px solid #c0c0c0"></div>
<div style="left:1138.5px;top:969.2px;width:24.0px;height:1.0px;background:#c0c0c0;"></div>
<svg style="position:absolute;left:1144.5px;top:957.3px;" width="12" height="8" viewBox="0 0 12 8"><path d="M1 7 L6 1.5 L11 7Z" fill="#111"/></svg>
<svg style="position:absolute;left:1144.5px;top:974.0px;" width="12" height="8" viewBox="0 0 12 8"><path d="M1 1 L6 6.5 L11 1Z" fill="#111"/></svg>
<div style="left:1067.0px;top:958.0px;font:normal 15.6px/1 'Liberation Sans',sans-serif;color:#1a1a1a;">3413</div>
<div style="left:1187.3px;top:962.7px;font:normal 15.6px/1 'Liberation Sans',sans-serif;color:#1a1a1a;">mm/min</div>
<div style="left:941.9px;top:1002.8px;font:normal 15.6px/1 'Liberation Sans',sans-serif;color:#1a1a1a;">Engage (Ef)</div>
<div style="left:1063.5px;top:993.02px;width:74.0px;height:33.4px;background:#fff;border:1px solid #e2e2e2;border-bottom:1.5px solid #8a8a8a"></div>
<div style="left:1137.5px;top:993.02px;width:26.0px;height:33.4px;background:#e8e8e8;border:1px solid #c0c0c0"></div>
<div style="left:1138.5px;top:1009.2px;width:24.0px;height:1.0px;background:#c0c0c0;"></div>
<svg style="position:absolute;left:1144.5px;top:997.4px;" width="12" height="8" viewBox="0 0 12 8"><path d="M1 7 L6 1.5 L11 7Z" fill="#111"/></svg>
<svg style="position:absolute;left:1144.5px;top:1014.1px;" width="12" height="8" viewBox="0 0 12 8"><path d="M1 1 L6 6.5 L11 1Z" fill="#111"/></svg>
<div style="left:1067.0px;top:998.1px;font:normal 15.6px/1 'Liberation Sans',sans-serif;color:#1a1a1a;">3413</div>
<div style="left:1187.3px;top:1002.8px;font:normal 15.6px/1 'Liberation Sans',sans-serif;color:#1a1a1a;">mm/min</div>
<div style="left:941.9px;top:1042.8px;font:normal 15.6px/1 'Liberation Sans',sans-serif;color:#1a1a1a;">Cut (Cf)</div>
<div style="left:1063.5px;top:1033.08px;width:74.0px;height:33.4px;background:#fff;border:1px solid #e2e2e2;border-bottom:1.5px solid #8a8a8a"></div>
<div style="left:1137.5px;top:1033.08px;width:26.0px;height:33.4px;background:#e8e8e8;border:1px solid #c0c0c0"></div>
<div style="left:1138.5px;top:1049.3px;width:24.0px;height:1.0px;background:#c0c0c0;"></div>
<svg style="position:absolute;left:1144.5px;top:1037.4px;" width="12" height="8" viewBox="0 0 12 8"><path d="M1 7 L6 1.5 L11 7Z" fill="#111"/></svg>
<svg style="position:absolute;left:1144.5px;top:1054.1px;" width="12" height="8" viewBox="0 0 12 8"><path d="M1 1 L6 6.5 L11 1Z" fill="#111"/></svg>
<div style="left:1067.0px;top:1038.1px;font:normal 15.6px/1 'Liberation Sans',sans-serif;color:#1a1a1a;">6826</div>
<div style="left:1187.3px;top:1042.8px;font:normal 15.6px/1 'Liberation Sans',sans-serif;color:#1a1a1a;">mm/min</div>
<div style="left:941.9px;top:1082.9px;font:normal 15.6px/1 'Liberation Sans',sans-serif;color:#1a1a1a;">Retract (Rf)</div>
<div style="left:1063.5px;top:1073.1399999999999px;width:74.0px;height:33.4px;background:#fff;border:1px solid #e2e2e2;border-bottom:1.5px solid #8a8a8a"></div>
<div style="left:1137.5px;top:1073.1399999999999px;width:26.0px;height:33.4px;background:#e8e8e8;border:1px solid #c0c0c0"></div>
<div style="left:1138.5px;top:1089.3px;width:24.0px;height:1.0px;background:#c0c0c0;"></div>
<svg style="position:absolute;left:1144.5px;top:1077.5px;" width="12" height="8" viewBox="0 0 12 8"><path d="M1 7 L6 1.5 L11 7Z" fill="#111"/></svg>
<svg style="position:absolute;left:1144.5px;top:1094.2px;" width="12" height="8" viewBox="0 0 12 8"><path d="M1 1 L6 6.5 L11 1Z" fill="#111"/></svg>
<div style="left:1067.0px;top:1078.2px;font:normal 15.6px/1 'Liberation Sans',sans-serif;color:#1a1a1a;">6826</div>
<div style="left:1187.3px;top:1082.9px;font:normal 15.6px/1 'Liberation Sans',sans-serif;color:#1a1a1a;">mm/min</div>
<div style="left:941.9px;top:1122.9px;font:normal 15.6px/1 'Liberation Sans',sans-serif;color:#1a1a1a;">Departure  (Df)</div>
<div style="left:1063.5px;top:1113.2px;width:74.0px;height:33.4px;background:#fff;border:1px solid #e2e2e2;border-bottom:1.5px solid #8a8a8a"></div>
<div style="left:1137.5px;top:1113.2px;width:26.0px;height:33.4px;background:#e8e8e8;border:1px solid #c0c0c0"></div>
<div style="left:1138.5px;top:1129.4px;width:24.0px;height:1.0px;background:#c0c0c0;"></div>
<svg style="position:absolute;left:1144.5px;top:1117.6px;" width="12" height="8" viewBox="0 0 12 8"><path d="M1 7 L6 1.5 L11 7Z" fill="#111"/></svg>
<svg style="position:absolute;left:1144.5px;top:1134.2px;" width="12" height="8" viewBox="0 0 12 8"><path d="M1 1 L6 6.5 L11 1Z" fill="#111"/></svg>
<div style="left:1067.0px;top:1118.2px;font:normal 15.6px/1 'Liberation Sans',sans-serif;color:#1a1a1a;">6826</div>
<div style="left:1187.3px;top:1122.9px;font:normal 15.6px/1 'Liberation Sans',sans-serif;color:#1a1a1a;">mm/min</div>
<div style="left:941.9px;top:1165.4px;font:normal 15.6px/1 'Liberation Sans',sans-serif;color:#1a1a1a;">Transfer (Tf)</div>
<div style="left:1056.2px;top:1163.8px;width:19px;height:19px;border-radius:50%;background:#0560c0"></div>
<div style="left:1061.7px;top:1169.3px;width:8px;height:8px;border-radius:50%;background:#fff"></div>
<div style="left:1081.0px;top:1165.7px;font:normal 15.6px/1 'Liberation Sans',sans-serif;color:#1a1a1a;">Use Rapid</div>
<div style="left:1173.0px;top:1163.8px;width:19px;height:19px;border-radius:50%;background:#f4f4f4;border:1.3px solid #555"></div>
<div style="left:1196.8px;top:1165.7px;font:normal 15.6px/1 'Liberation Sans',sans-serif;color:#1a1a1a;">Set</div>
<div style="left:1064.9px;top:1197px;width:74.5px;height:34.7px;background:#f4f4f4;border:1px solid #e2e2e2;border-bottom:1.5px solid #c8c8c8"></div>
<div style="left:1139.4px;top:1197px;width:26.1px;height:34.7px;background:#e8e8e8;border:1px solid #c0c0c0"></div>
<div style="left:1140.4px;top:1213.8px;width:24.1px;height:1.0px;background:#c0c0c0;"></div>
<svg style="position:absolute;left:1146.5px;top:1201.7px;" width="12" height="8" viewBox="0 0 12 8"><path d="M1 7 L6 1.5 L11 7Z" fill="#999"/></svg>
<svg style="position:absolute;left:1146.5px;top:1219.0px;" width="12" height="8" viewBox="0 0 12 8"><path d="M1 1 L6 6.5 L11 1Z" fill="#999"/></svg>
<div style="left:1068.4px;top:1202.0px;font:normal 15.6px/1 'Liberation Sans',sans-serif;color:#999;">175.24</div>
<div style="left:1189.0px;top:1208.7px;font:normal 15.6px/1 'Liberation Sans',sans-serif;color:#1a1a1a;">mm/min</div>
<div style="left:1265.0px;top:761.6px;width:301.7px;height:438.0px;background:#ffffff;"></div>
<svg style="position:absolute;left:1265.0px;top:761.6px;" width="302" height="438" viewBox="0 0 302 438">
<g transform="translate(-1265,-761.6)">
<rect x="1503" y="773" width="30" height="14" rx="5" fill="#8a8a8a"/>
<path d="M1508 787 L1528 787 L1526 798 L1524 842 L1519 846 L1513 842 L1511 798Z" fill="#b8b8b8"/>
<path d="M1511 800 L1526 806 M1511 812 L1526 818 M1511 824 L1525 830 M1512 836 L1524 840" stroke="#666" stroke-width="3"/>
<line x1="1518.4" y1="848" x2="1518.4" y2="880" stroke="#b09a20" stroke-width="2.5"/>
<path d="M1511 872 L1518.4 886 L1525 872 L1518.4 877Z" fill="#1010e0"/>
<line x1="1518.4" y1="886" x2="1518.4" y2="939.4" stroke="#20e020" stroke-width="2.5"/>
<line x1="1518.4" y1="939.4" x2="1498.4" y2="986" stroke="#f020f0" stroke-width="2.5"/>
<line x1="1498.4" y1="986" x2="1355.6" y2="1148" stroke="#20e0f0" stroke-width="2.5"/>
<path d="M1412 1080 L1428 1075 L1420.6 1070 L1419 1058Z" fill="#1010e0"/>
<line x1="1355.6" y1="1148" x2="1318.4" y2="1152.7" stroke="#f020f0" stroke-width="2.5"/>
<line x1="1318.4" y1="1152.7" x2="1316.5" y2="1082.9" stroke="#20e020" stroke-width="2.5"/>
<line x1="1316.5" y1="1082.9" x2="1312.7" y2="976.5" stroke="#f02020" stroke-width="2.5"/>
<path d="M1307 1053 L1314 1040 L1321 1053 L1314 1049Z" fill="#1010e0"/>
<line x1="1436.5" y1="892.4" x2="1491" y2="973" stroke="#111" stroke-width="1.5"/>
<path d="M1494 978 L1482 969 L1488 966 L1492 960Z" fill="#111"/>
<path d="M1341.9 946 L1341.9 976.5 L1322 976.5" fill="none" stroke="#111" stroke-width="2"/>
<path d="M1318 976.5 L1330 969 L1327 976.5 L1330 984Z" fill="#111"/>
<rect x="1495" y="983" width="6" height="6" fill="none" stroke="#f0a040" stroke-width="1"/>
</g></svg>
<div style="left:1491.0px;top:857.1px;font:normal 15.2px/1 'Liberation Sans',sans-serif;color:#111;">Pf</div>
<div style="left:1388.9px;top:868.4px;font:normal 15.2px/1 'Liberation Sans',sans-serif;color:#111;">Cut Start</div>
<div style="left:1486.7px;top:901.7px;font:normal 15.2px/1 'Liberation Sans',sans-serif;color:#111;">Af</div>
<div style="left:1296.2px;top:901.7px;font:normal 15.2px/1 'Liberation Sans',sans-serif;color:#111;">Clearance</div>
<div style="left:1315.9px;top:923.9px;font:normal 15.2px/1 'Liberation Sans',sans-serif;color:#111;">Plane</div>
<div style="left:1519.7px;top:960.4px;font:normal 15.2px/1 'Liberation Sans',sans-serif;color:#111;">Ef</div>
<div style="left:1323.2px;top:1011.1px;font:normal 15.2px/1 'Liberation Sans',sans-serif;color:#111;">Tf</div>
<div style="left:1434.3px;top:1070.6px;font:normal 15.2px/1 'Liberation Sans',sans-serif;color:#111;">Cf</div>
<div style="left:1288.9px;top:1104.1px;font:normal 15.2px/1 'Liberation Sans',sans-serif;color:#111;">Df</div>
<div style="left:1328.0px;top:1163.6px;font:normal 15.2px/1 'Liberation Sans',sans-serif;color:#111;">Rf</div>
<div style="left:928.5px;top:1257.4px;width:328.2px;height:152.6px;border:1px solid #dcdcdc;border-radius:2px"></div>
<div style="left:934.9px;top:1255.4px;width:209.9px;height:5.0px;background:#f9f9f9;"></div>
<div style="left:937.9px;top:1249.6px;font:normal 15.6px/1 'Liberation Sans',sans-serif;color:#1a1a1a;">Feed Rate Reduction Factors</div>
<div style="left:942.0px;top:1284.7px;font:normal 15.6px/1 'Liberation Sans',sans-serif;color:#1a1a1a;">Plunge between levels</div>
<div style="left:1124.8px;top:1272.8px;width:73.7px;height:33.4px;background:#fff;border:1px solid #e2e2e2;border-bottom:1.5px solid #8a8a8a"></div>
<div style="left:1198.5px;top:1272.8px;width:26.0px;height:33.4px;background:#e8e8e8;border:1px solid #c0c0c0"></div>
<div style="left:1199.5px;top:1289.0px;width:24.0px;height:1.0px;background:#c0c0c0;"></div>
<svg style="position:absolute;left:1205.5px;top:1277.2px;" width="12" height="8" viewBox="0 0 12 8"><path d="M1 7 L6 1.5 L11 7Z" fill="#111"/></svg>
<svg style="position:absolute;left:1205.5px;top:1293.8px;" width="12" height="8" viewBox="0 0 12 8"><path d="M1 1 L6 6.5 L11 1Z" fill="#111"/></svg>
<div style="left:1128.3px;top:1277.8px;font:normal 15.6px/1 'Liberation Sans',sans-serif;color:#1a1a1a;">100</div>
<div style="left:1233.9px;top:1284.7px;font:normal 15.6px/1 'Liberation Sans',sans-serif;color:#1a1a1a;">%</div>
<div style="left:942.0px;top:1324.5px;font:normal 15.6px/1 'Liberation Sans',sans-serif;color:#1a1a1a;">First XY pass</div>
<div style="left:1124.8px;top:1312.55px;width:73.7px;height:33.4px;background:#fff;border:1px solid #e2e2e2;border-bottom:1.5px solid #8a8a8a"></div>
<div style="left:1198.5px;top:1312.55px;width:26.0px;height:33.4px;background:#e8e8e8;border:1px solid #c0c0c0"></div>
<div style="left:1199.5px;top:1328.8px;width:24.0px;height:1.0px;background:#c0c0c0;"></div>
<svg style="position:absolute;left:1205.5px;top:1316.9px;" width="12" height="8" viewBox="0 0 12 8"><path d="M1 7 L6 1.5 L11 7Z" fill="#111"/></svg>
<svg style="position:absolute;left:1205.5px;top:1333.6px;" width="12" height="8" viewBox="0 0 12 8"><path d="M1 1 L6 6.5 L11 1Z" fill="#111"/></svg>
<div style="left:1128.3px;top:1317.6px;font:normal 15.6px/1 'Liberation Sans',sans-serif;color:#1a1a1a;">90</div>
<div style="left:1233.9px;top:1324.5px;font:normal 15.6px/1 'Liberation Sans',sans-serif;color:#1a1a1a;">%</div>
<div style="left:942.0px;top:1364.2px;font:normal 15.6px/1 'Liberation Sans',sans-serif;color:#1a1a1a;">Bottom Z Level</div>
<div style="left:1124.8px;top:1352.3px;width:73.7px;height:33.4px;background:#fff;border:1px solid #e2e2e2;border-bottom:1.5px solid #8a8a8a"></div>
<div style="left:1198.5px;top:1352.3px;width:26.0px;height:33.4px;background:#e8e8e8;border:1px solid #c0c0c0"></div>
<div style="left:1199.5px;top:1368.5px;width:24.0px;height:1.0px;background:#c0c0c0;"></div>
<svg style="position:absolute;left:1205.5px;top:1356.7px;" width="12" height="8" viewBox="0 0 12 8"><path d="M1 7 L6 1.5 L11 7Z" fill="#111"/></svg>
<svg style="position:absolute;left:1205.5px;top:1373.3px;" width="12" height="8" viewBox="0 0 12 8"><path d="M1 1 L6 6.5 L11 1Z" fill="#111"/></svg>
<div style="left:1128.3px;top:1357.3px;font:normal 15.6px/1 'Liberation Sans',sans-serif;color:#1a1a1a;">100</div>
<div style="left:1233.9px;top:1364.2px;font:normal 15.6px/1 'Liberation Sans',sans-serif;color:#1a1a1a;">%</div>
<div style="left:1272.6px;top:1257.4px;width:301.3px;height:61.0px;border:1px solid #dcdcdc;border-radius:2px"></div>
<div style="left:1278.5px;top:1255.4px;width:59.8px;height:5.0px;background:#f9f9f9;"></div>
<div style="left:1281.5px;top:1249.6px;font:normal 15.6px/1 'Liberation Sans',sans-serif;color:#1a1a1a;">Coolant</div>
<div style="left:1362px;top:1272.8px;width:188.6px;height:27.2px;background:#fff;border:1px solid #c8c8c8;border-radius:2px"></div>
<div style="left:1367.0px;top:1278.7px;font:normal 15.6px/1 'Liberation Sans',sans-serif;color:#1a1a1a;">None</div>
<svg style="position:absolute;left:1528.0px;top:1281.0px;" width="14" height="10" viewBox="0 0 14 10"><path d="M2 2 L7 7 L12 2" fill="none" stroke="#333" stroke-width="1.2"/></svg>
<div style="left:929.3px;top:1446.7px;width:157.2px;height:31.8px;background:#fdfdfd;border:1px solid #d0d0d0;border-bottom:1.5px solid #b8b8b8;border-radius:4px"></div>
<div style="left:1007.9px;top:1455.1px;font:normal 15.6px/1 'Liberation Sans',sans-serif;color:#1a1a1a;transform:translateX(-50%);">Load from Tool</div>
<div style="left:1098.3px;top:1446.7px;width:157.2px;height:31.8px;background:#fdfdfd;border:1px solid #d0d0d0;border-bottom:1.5px solid #b8b8b8;border-radius:4px"></div>
<div style="left:1176.9px;top:1455.1px;font:normal 15.6px/1 'Liberation Sans',sans-serif;color:#1a1a1a;transform:translateX(-50%);">Load from File ...</div>
<div style="left:1100.3px;top:1720.7px;width:115.3px;height:29.3px;background:#fdfdfd;border:1px solid #d0d0d0;border-bottom:1.5px solid #b8b8b8;border-radius:4px"></div>
<div style="left:1157.9px;top:1727.9px;font:normal 15.6px/1 'Liberation Sans',sans-serif;color:#1a1a1a;transform:translateX(-50%);">Generate</div>
<div style="left:1226.5px;top:1720.7px;width:115.3px;height:29.3px;background:#fdfdfd;border:1px solid #d0d0d0;border-bottom:1.5px solid #b8b8b8;border-radius:4px"></div>
<div style="left:1284.2px;top:1727.9px;font:normal 15.6px/1 'Liberation Sans',sans-serif;color:#1a1a1a;transform:translateX(-50%);">Cancel</div>
<div style="left:1352.4px;top:1720.7px;width:115.3px;height:29.3px;background:#fdfdfd;border:1px solid #d0d0d0;border-bottom:1.5px solid #b8b8b8;border-radius:4px"></div>
<div style="left:1410.1px;top:1727.9px;font:normal 15.6px/1 'Liberation Sans',sans-serif;color:#1a1a1a;transform:translateX(-50%);">Save</div>
<div style="left:1478.2px;top:1720.7px;width:115.3px;height:29.3px;background:#fdfdfd;border:1px solid #d0d0d0;border-bottom:1.5px solid #b8b8b8;border-radius:4px"></div>
<div style="left:1535.8px;top:1727.9px;font:normal 15.6px/1 'Liberation Sans',sans-serif;color:#1a1a1a;transform:translateX(-50%);">Help</div>
<div style="left:1570px;top:671px;width:70px;height:39px;background:#ffffe1;border:1px solid #767676"></div>
<div style="left:1573.0px;top:678.8px;font:normal 25px/1 'Liberation Sans',sans-serif;color:#000;">Close</div>
</body></html>
